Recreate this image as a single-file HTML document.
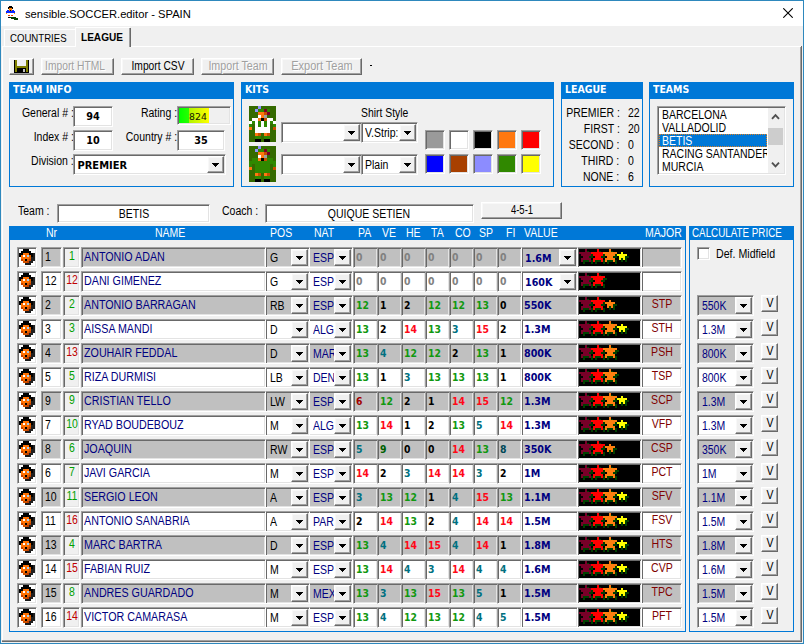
<!DOCTYPE html>
<html lang="en"><head><meta charset="utf-8"><title>sensible.SOCCER.editor - SPAIN</title><style>
html,body{margin:0;padding:0;background:#f0f0f0;}
#w{position:relative;width:804px;height:644px;overflow:hidden;background:#f0f0f0;}
#w div{position:absolute;box-sizing:border-box;}
.t{position:absolute;white-space:nowrap;display:inline-block;}
#w .sk{border:1px solid;border-color:#a0a0a0 #fff #fff #a0a0a0;box-shadow:inset 1px 1px 0 #696969,inset -1px -1px 0 #e3e3e3;padding:2px;}
#w .sk>*{ }
#w .rs{background:#f0f0f0;border:1px solid;border-color:#fff #696969 #696969 #fff;box-shadow:inset -1px -1px 0 #a0a0a0,inset 1px 1px 0 #f8f8f8;}
</style></head><body><div id="w">
<div class="" style="left:0px;top:0px;width:804px;height:644px;background:#f0f0f0;"></div>
<div class="" style="left:0px;top:0px;width:804px;height:26px;background:#fff;"></div>
<div class="" style="left:0px;top:0px;width:804px;height:644px;border:1px solid #2e88bd;box-sizing:border-box;"></div>
<svg style="position:absolute;left:0;top:0" width="22" height="22" viewBox="0 0 22 22" shape-rendering="crispEdges">
<rect x="9" y="6" width="3" height="1" fill="#000"/><rect x="8" y="7" width="5" height="2" fill="#000"/>
<rect x="9" y="8" width="3" height="3" fill="#ff8000"/>
<rect x="7" y="10" width="2" height="3" fill="#0a28ff"/><rect x="12" y="10" width="2" height="3" fill="#0a28ff"/><rect x="9" y="11" width="3" height="2" fill="#0a28ff"/><rect x="10" y="10" width="1" height="1" fill="#000"/>
<rect x="6" y="11" width="1" height="2" fill="#0a28ff"/><rect x="14" y="11" width="1" height="2" fill="#0a28ff"/>
<rect x="6" y="13" width="1" height="1" fill="#ff9000"/><rect x="14" y="13" width="1" height="1" fill="#ff9000"/>
<rect x="8" y="15" width="2" height="1" fill="#e84000"/><rect x="11" y="15" width="2" height="1" fill="#e84000"/>
<rect x="8" y="17" width="3" height="1" fill="#000"/><rect x="10" y="17" width="6" height="1" fill="#004000"/><rect x="11" y="18" width="7" height="1" fill="#004000"/><rect x="14" y="19" width="4" height="1" fill="#004000"/>
</svg>
<span class="t" style="left:25px;transform-origin:0 0;transform:scaleX(0.965);top:7.68px;font:normal 11.6px/11.6px 'Liberation Sans',sans-serif;color:#000;">sensible.SOCCER.editor - SPAIN</span>
<svg style="position:absolute;left:783px;top:8px" width="10" height="10" viewBox="0 0 10 10"><path d="M0.3 0.3L9.7 9.7M9.7 0.3L0.3 9.7" stroke="#000" stroke-width="1.1" fill="none"/></svg>
<div class="" style="left:2px;top:46px;width:800px;height:1px;background:#fff;"></div>
<div class="" style="left:2px;top:46px;width:1px;height:595px;background:#fff;"></div>
<div class="" style="left:800px;top:47px;width:1px;height:595px;background:#a0a0a0;"></div>
<div class="" style="left:801px;top:46px;width:1px;height:596px;background:#696969;"></div>
<div class="" style="left:2px;top:640px;width:799px;height:1px;background:#a0a0a0;"></div>
<div class="" style="left:2px;top:641px;width:800px;height:1px;background:#696969;"></div>
<div class="" style="left:4px;top:29px;width:72px;height:17px;border:1px solid #fff;border-bottom:none;border-right:none;box-sizing:border-box;"></div>
<span class="t" style="left:10px;transform-origin:0 0;transform:scaleX(0.835);top:32.67px;font:normal 11.5px/11.5px 'Liberation Sans',sans-serif;color:#000;">COUNTRIES</span>
<div class="" style="left:75px;top:27px;width:56px;height:20px;background:#f0f0f0;"></div>
<div class="" style="left:75px;top:27px;width:1px;height:20px;background:#fff;"></div>
<div class="" style="left:75px;top:27px;width:55px;height:1px;background:#fff;"></div>
<div class="" style="left:129px;top:28px;width:1px;height:19px;background:#a0a0a0;"></div>
<div class="" style="left:130px;top:28px;width:1px;height:19px;background:#696969;"></div>
<span class="t" style="left:81px;transform-origin:0 0;transform:scaleX(0.875);top:31.87px;font:bold 11.5px/11.5px 'Liberation Sans',sans-serif;color:#000;">LEAGUE</span>
<div class="rs" style="left:9px;top:58px;width:25px;height:17px;"></div>
<svg style="position:absolute;left:14px;top:60px" width="15" height="13" viewBox="0 0 15 13" shape-rendering="crispEdges">
<rect x="0" y="0" width="15" height="13" fill="#000"/><rect x="1" y="0" width="2" height="12" fill="#808000"/><rect x="12" y="0" width="2" height="12" fill="#808000"/>
<rect x="3" y="0" width="9" height="6" fill="#f0f0f0"/><rect x="1" y="6" width="13" height="2" fill="#808000"/>
<rect x="3" y="8" width="9" height="5" fill="#000"/><rect x="9" y="9" width="2" height="3" fill="#c0c0c0"/></svg>
<div class="rs" style="left:41px;top:58px;width:73px;height:17px;"></div>
<span class="t" style="left:-123.7px;width:400px;text-align:center;transform-origin:50% 0;transform:scaleX(0.82);top:61.32px;font:normal 12.5px/12.5px 'Liberation Sans',sans-serif;color:#fff;">Import HTML</span>
<span class="t" style="left:-124.7px;width:400px;text-align:center;transform-origin:50% 0;transform:scaleX(0.82);top:60.32px;font:normal 12.5px/12.5px 'Liberation Sans',sans-serif;color:#a0a0a0;">Import HTML</span>
<div class="rs" style="left:121px;top:58px;width:73px;height:17px;"></div>
<span class="t" style="left:-42.5px;width:400px;text-align:center;transform-origin:50% 0;transform:scaleX(0.82);top:60.32px;font:normal 12.5px/12.5px 'Liberation Sans',sans-serif;color:#000;">Import CSV</span>
<div class="rs" style="left:201px;top:58px;width:73px;height:17px;"></div>
<span class="t" style="left:38.5px;width:400px;text-align:center;transform-origin:50% 0;transform:scaleX(0.855);top:61.32px;font:normal 12.5px/12.5px 'Liberation Sans',sans-serif;color:#fff;">Import Team</span>
<span class="t" style="left:37.5px;width:400px;text-align:center;transform-origin:50% 0;transform:scaleX(0.855);top:60.32px;font:normal 12.5px/12.5px 'Liberation Sans',sans-serif;color:#a0a0a0;">Import Team</span>
<div class="rs" style="left:281px;top:58px;width:81px;height:17px;"></div>
<span class="t" style="left:122.5px;width:400px;text-align:center;transform-origin:50% 0;transform:scaleX(0.88);top:61.32px;font:normal 12.5px/12.5px 'Liberation Sans',sans-serif;color:#fff;">Export Team</span>
<span class="t" style="left:121.5px;width:400px;text-align:center;transform-origin:50% 0;transform:scaleX(0.88);top:60.32px;font:normal 12.5px/12.5px 'Liberation Sans',sans-serif;color:#a0a0a0;">Export Team</span>
<div class="" style="left:370px;top:65px;width:2px;height:1px;background:#000;"></div>
<div class="" style="left:9px;top:82px;width:225px;height:105px;border:1px solid #0078d7;box-sizing:border-box;"></div>
<div class="" style="left:9px;top:82px;width:225px;height:17px;background:#0078d7;"></div>
<span class="t" style="left:12.6px;transform-origin:0 0;transform:scaleX(0.95);top:83.99px;font:bold 11px/11px 'DejaVu Sans Condensed','DejaVu Sans',sans-serif;color:#fff;">TEAM INFO</span>
<span class="t" style="right:730.5px;transform-origin:100% 0;transform:scaleX(0.84);top:107.32px;font:normal 12.5px/12.5px 'Liberation Sans',sans-serif;color:#000;">General # :</span>
<span class="t" style="right:730.5px;transform-origin:100% 0;transform:scaleX(0.84);top:131.32px;font:normal 12.5px/12.5px 'Liberation Sans',sans-serif;color:#000;">Index # :</span>
<span class="t" style="right:730.5px;transform-origin:100% 0;transform:scaleX(0.84);top:155.32px;font:normal 12.5px/12.5px 'Liberation Sans',sans-serif;color:#000;">Division :</span>
<div class="sk" style="left:73px;top:106px;width:40px;height:21px;background:#fff;"></div>
<span class="t" style="left:-107px;width:400px;text-align:center;transform-origin:50% 0;transform:scaleX(0.98);top:110.69px;font:bold 11px/11px 'DejaVu Sans Condensed','DejaVu Sans',sans-serif;color:#000;">94</span>
<div class="sk" style="left:73px;top:130px;width:40px;height:21px;background:#fff;"></div>
<span class="t" style="left:-107px;width:400px;text-align:center;transform-origin:50% 0;transform:scaleX(0.98);top:134.69px;font:bold 11px/11px 'DejaVu Sans Condensed','DejaVu Sans',sans-serif;color:#000;">10</span>
<div class="sk" style="left:73px;top:154px;width:153px;height:21px;background:#fff;"></div>
<div class="" style="left:207px;top:156px;width:17px;height:17px;background:#f0f0f0;"></div>
<div class="rs" style="left:207px;top:156px;width:17px;height:17px;"><svg width="7" height="4" style="position:absolute;left:4px;top:6px" viewBox="0 0 7 4" shape-rendering="crispEdges"><path d="M0 0h7v1h-1v1h-1v1h-1v1h-1v-1h-1v-1h-1v-1h-1z" fill="#000"/></svg></div>
<span class="t" style="left:77.5px;transform-origin:0 0;transform:scaleX(1.0);top:159.69px;font:bold 11px/11px 'DejaVu Sans Condensed','DejaVu Sans',sans-serif;color:#000;">PREMIER</span>
<span class="t" style="right:627px;transform-origin:100% 0;transform:scaleX(0.84);top:107.32px;font:normal 12.5px/12.5px 'Liberation Sans',sans-serif;color:#000;">Rating :</span>
<span class="t" style="right:627px;transform-origin:100% 0;transform:scaleX(0.84);top:131.32px;font:normal 12.5px/12.5px 'Liberation Sans',sans-serif;color:#000;">Country # :</span>
<div class="sk" style="left:177px;top:106px;width:54px;height:19px;background:#f0f0f0;"><div style="position:absolute;left:1px;top:1px;width:30px;height:15px;background:linear-gradient(90deg,#00ff00 0,#28ff00 10px,#b0f400 10px,#ffff00 30px)"></div></div>
<span class="t" style="left:-2px;width:400px;text-align:center;transform-origin:50% 0;transform:scaleX(0.98);top:111.96px;font:normal 9.5px/9.5px 'DejaVu Sans',sans-serif;color:#141400;">824</span>
<div class="sk" style="left:177px;top:130px;width:48px;height:21px;background:#fff;"></div>
<span class="t" style="left:1px;width:400px;text-align:center;transform-origin:50% 0;transform:scaleX(0.98);top:134.69px;font:bold 11px/11px 'DejaVu Sans Condensed','DejaVu Sans',sans-serif;color:#000;">35</span>
<div class="" style="left:241px;top:82px;width:313px;height:105px;border:1px solid #0078d7;box-sizing:border-box;"></div>
<div class="" style="left:241px;top:82px;width:313px;height:17px;background:#0078d7;"></div>
<span class="t" style="left:245px;transform-origin:0 0;transform:scaleX(0.95);top:83.99px;font:bold 11px/11px 'DejaVu Sans Condensed','DejaVu Sans',sans-serif;color:#fff;">KITS</span>
<svg style="position:absolute;left:249px;top:106px" width="27" height="36" viewBox="0 0 9 12" shape-rendering="crispEdges"><rect width="9" height="12" fill="#356a00"/><rect x="3" y="0" width="1" height="1" fill="#9090ff"/><rect x="2" y="1" width="1" height="1" fill="#9090ff"/><rect x="3" y="1" width="1" height="1" fill="#308800"/><rect x="4" y="1" width="1" height="1" fill="#308800"/><rect x="5" y="1" width="1" height="1" fill="#780028"/><rect x="6" y="1" width="1" height="1" fill="#308800"/><rect x="3" y="2" width="1" height="1" fill="#ff7810"/><rect x="4" y="2" width="1" height="1" fill="#ff7810"/><rect x="5" y="2" width="1" height="1" fill="#c85000"/><rect x="6" y="2" width="1" height="1" fill="#780028"/><rect x="3" y="3" width="1" height="1" fill="#fff"/><rect x="4" y="3" width="1" height="1" fill="#ff7810"/><rect x="5" y="3" width="1" height="1" fill="#a0a0a0"/><rect x="1" y="4" width="1" height="1" fill="#fff"/><rect x="2" y="4" width="1" height="1" fill="#fff"/><rect x="3" y="4" width="1" height="1" fill="#ff7810"/><rect x="4" y="4" width="1" height="1" fill="#000"/><rect x="5" y="4" width="1" height="1" fill="#c85000"/><rect x="6" y="4" width="1" height="1" fill="#fff"/><rect x="7" y="4" width="1" height="1" fill="#fff"/><rect x="0" y="5" width="1" height="1" fill="#fff"/><rect x="1" y="5" width="1" height="1" fill="#308800"/><rect x="2" y="5" width="1" height="1" fill="#fff"/><rect x="3" y="5" width="1" height="1" fill="#308800"/><rect x="4" y="5" width="1" height="1" fill="#fff"/><rect x="5" y="5" width="1" height="1" fill="#308800"/><rect x="6" y="5" width="1" height="1" fill="#fff"/><rect x="7" y="5" width="1" height="1" fill="#308800"/><rect x="8" y="5" width="1" height="1" fill="#fff"/><rect x="0" y="6" width="1" height="1" fill="#308800"/><rect x="2" y="6" width="1" height="1" fill="#fff"/><rect x="3" y="6" width="1" height="1" fill="#308800"/><rect x="4" y="6" width="1" height="1" fill="#fff"/><rect x="5" y="6" width="1" height="1" fill="#308800"/><rect x="6" y="6" width="1" height="1" fill="#fff"/><rect x="8" y="6" width="1" height="1" fill="#308800"/><rect x="0" y="7" width="1" height="1" fill="#ff7810"/><rect x="2" y="7" width="1" height="1" fill="#fff"/><rect x="3" y="7" width="1" height="1" fill="#fff"/><rect x="4" y="7" width="1" height="1" fill="#fff"/><rect x="5" y="7" width="1" height="1" fill="#fff"/><rect x="6" y="7" width="1" height="1" fill="#fff"/><rect x="8" y="7" width="1" height="1" fill="#c85000"/><rect x="2" y="8" width="1" height="1" fill="#fff"/><rect x="3" y="8" width="1" height="1" fill="#fff"/><rect x="4" y="8" width="1" height="1" fill="#fff"/><rect x="5" y="8" width="1" height="1" fill="#fff"/><rect x="6" y="8" width="1" height="1" fill="#fff"/><rect x="2" y="9" width="1" height="1" fill="#ff7810"/><rect x="3" y="9" width="1" height="1" fill="#c85000"/><rect x="5" y="9" width="1" height="1" fill="#ff7810"/><rect x="6" y="9" width="1" height="1" fill="#c85000"/><rect x="2" y="10" width="1" height="1" fill="#308800"/><rect x="3" y="10" width="1" height="1" fill="#308800"/><rect x="5" y="10" width="1" height="1" fill="#308800"/><rect x="6" y="10" width="1" height="1" fill="#308800"/><rect x="2" y="11" width="1" height="1" fill="#000"/><rect x="3" y="11" width="1" height="1" fill="#000"/><rect x="5" y="11" width="1" height="1" fill="#000"/><rect x="6" y="11" width="1" height="1" fill="#000"/></svg>
<svg style="position:absolute;left:249px;top:146px" width="27" height="36" viewBox="0 0 9 12" shape-rendering="crispEdges"><rect width="9" height="12" fill="#356a00"/><rect x="3" y="0" width="1" height="1" fill="#9090ff"/><rect x="2" y="1" width="1" height="1" fill="#9090ff"/><rect x="3" y="1" width="1" height="1" fill="#308800"/><rect x="4" y="1" width="1" height="1" fill="#308800"/><rect x="5" y="1" width="1" height="1" fill="#780028"/><rect x="6" y="1" width="1" height="1" fill="#308800"/><rect x="3" y="2" width="1" height="1" fill="#ff7810"/><rect x="4" y="2" width="1" height="1" fill="#ff7810"/><rect x="5" y="2" width="1" height="1" fill="#c85000"/><rect x="6" y="2" width="1" height="1" fill="#780028"/><rect x="3" y="3" width="1" height="1" fill="#fff"/><rect x="4" y="3" width="1" height="1" fill="#ff7810"/><rect x="5" y="3" width="1" height="1" fill="#a0a0a0"/><rect x="1" y="4" width="1" height="1" fill="#308800"/><rect x="2" y="4" width="1" height="1" fill="#308800"/><rect x="3" y="4" width="1" height="1" fill="#ff7810"/><rect x="4" y="4" width="1" height="1" fill="#000"/><rect x="5" y="4" width="1" height="1" fill="#c85000"/><rect x="6" y="4" width="1" height="1" fill="#308800"/><rect x="7" y="4" width="1" height="1" fill="#308800"/><rect x="0" y="5" width="1" height="1" fill="#308800"/><rect x="1" y="5" width="1" height="1" fill="#308800"/><rect x="2" y="5" width="1" height="1" fill="#308800"/><rect x="3" y="5" width="1" height="1" fill="#308800"/><rect x="4" y="5" width="1" height="1" fill="#308800"/><rect x="5" y="5" width="1" height="1" fill="#308800"/><rect x="6" y="5" width="1" height="1" fill="#308800"/><rect x="7" y="5" width="1" height="1" fill="#308800"/><rect x="8" y="5" width="1" height="1" fill="#308800"/><rect x="0" y="6" width="1" height="1" fill="#308800"/><rect x="2" y="6" width="1" height="1" fill="#308800"/><rect x="3" y="6" width="1" height="1" fill="#308800"/><rect x="4" y="6" width="1" height="1" fill="#308800"/><rect x="5" y="6" width="1" height="1" fill="#308800"/><rect x="6" y="6" width="1" height="1" fill="#308800"/><rect x="8" y="6" width="1" height="1" fill="#308800"/><rect x="0" y="7" width="1" height="1" fill="#ff7810"/><rect x="2" y="7" width="1" height="1" fill="#308800"/><rect x="3" y="7" width="1" height="1" fill="#308800"/><rect x="4" y="7" width="1" height="1" fill="#308800"/><rect x="5" y="7" width="1" height="1" fill="#308800"/><rect x="6" y="7" width="1" height="1" fill="#308800"/><rect x="8" y="7" width="1" height="1" fill="#c85000"/><rect x="2" y="8" width="1" height="1" fill="#308800"/><rect x="3" y="8" width="1" height="1" fill="#308800"/><rect x="4" y="8" width="1" height="1" fill="#308800"/><rect x="5" y="8" width="1" height="1" fill="#308800"/><rect x="6" y="8" width="1" height="1" fill="#308800"/><rect x="2" y="9" width="1" height="1" fill="#ff7810"/><rect x="3" y="9" width="1" height="1" fill="#c85000"/><rect x="5" y="9" width="1" height="1" fill="#ff7810"/><rect x="6" y="9" width="1" height="1" fill="#c85000"/><rect x="2" y="10" width="1" height="1" fill="#308800"/><rect x="3" y="10" width="1" height="1" fill="#308800"/><rect x="5" y="10" width="1" height="1" fill="#308800"/><rect x="6" y="10" width="1" height="1" fill="#308800"/><rect x="2" y="11" width="1" height="1" fill="#000"/><rect x="3" y="11" width="1" height="1" fill="#000"/><rect x="5" y="11" width="1" height="1" fill="#000"/><rect x="6" y="11" width="1" height="1" fill="#000"/></svg>
<span class="t" style="left:361px;transform-origin:0 0;transform:scaleX(0.83);top:107.32px;font:normal 12.5px/12.5px 'Liberation Sans',sans-serif;color:#000;">Shirt Style</span>
<div class="sk" style="left:281px;top:122px;width:81px;height:21px;background:#fff;"></div>
<div class="" style="left:343px;top:124px;width:17px;height:17px;background:#f0f0f0;"></div>
<div class="rs" style="left:343px;top:124px;width:17px;height:17px;"><svg width="7" height="4" style="position:absolute;left:4px;top:6px" viewBox="0 0 7 4" shape-rendering="crispEdges"><path d="M0 0h7v1h-1v1h-1v1h-1v1h-1v-1h-1v-1h-1v-1h-1z" fill="#000"/></svg></div>
<div class="sk" style="left:361px;top:122px;width:57px;height:21px;background:#fff;"></div>
<div class="" style="left:399px;top:124px;width:17px;height:17px;background:#f0f0f0;"></div>
<div class="rs" style="left:399px;top:124px;width:17px;height:17px;"><svg width="7" height="4" style="position:absolute;left:4px;top:6px" viewBox="0 0 7 4" shape-rendering="crispEdges"><path d="M0 0h7v1h-1v1h-1v1h-1v1h-1v-1h-1v-1h-1v-1h-1z" fill="#000"/></svg></div>
<span class="t" style="left:365px;transform-origin:0 0;transform:scaleX(0.84);top:126.82px;font:normal 12.5px/12.5px 'Liberation Sans',sans-serif;color:#000;width:39px;overflow:hidden;">V.Strip:</span>
<div class="sk" style="left:281px;top:154px;width:81px;height:21px;background:#fff;"></div>
<div class="" style="left:343px;top:156px;width:17px;height:17px;background:#f0f0f0;"></div>
<div class="rs" style="left:343px;top:156px;width:17px;height:17px;"><svg width="7" height="4" style="position:absolute;left:4px;top:6px" viewBox="0 0 7 4" shape-rendering="crispEdges"><path d="M0 0h7v1h-1v1h-1v1h-1v1h-1v-1h-1v-1h-1v-1h-1z" fill="#000"/></svg></div>
<div class="sk" style="left:361px;top:154px;width:57px;height:21px;background:#fff;"></div>
<div class="" style="left:399px;top:156px;width:17px;height:17px;background:#f0f0f0;"></div>
<div class="rs" style="left:399px;top:156px;width:17px;height:17px;"><svg width="7" height="4" style="position:absolute;left:4px;top:6px" viewBox="0 0 7 4" shape-rendering="crispEdges"><path d="M0 0h7v1h-1v1h-1v1h-1v1h-1v-1h-1v-1h-1v-1h-1z" fill="#000"/></svg></div>
<span class="t" style="left:365px;transform-origin:0 0;transform:scaleX(0.84);top:158.82px;font:normal 12.5px/12.5px 'Liberation Sans',sans-serif;color:#000;">Plain</span>
<div class="sk" style="left:425px;top:130px;width:20px;height:20px;background:#9a9a9a;"></div>
<div class="sk" style="left:449px;top:130px;width:20px;height:20px;background:#fff;"></div>
<div class="sk" style="left:473px;top:130px;width:20px;height:20px;background:#000;"></div>
<div class="sk" style="left:497px;top:130px;width:20px;height:20px;background:#ff7810;"></div>
<div class="sk" style="left:521px;top:130px;width:20px;height:20px;background:#ff0000;"></div>
<div class="sk" style="left:425px;top:154px;width:20px;height:20px;background:#0000ff;"></div>
<div class="sk" style="left:449px;top:154px;width:20px;height:20px;background:#a84000;"></div>
<div class="sk" style="left:473px;top:154px;width:20px;height:20px;background:#8c8cff;"></div>
<div class="sk" style="left:497px;top:154px;width:20px;height:20px;background:#308800;"></div>
<div class="sk" style="left:521px;top:154px;width:20px;height:20px;background:#ffff00;"></div>
<div class="" style="left:561px;top:82px;width:82px;height:105px;border:1px solid #0078d7;box-sizing:border-box;"></div>
<div class="" style="left:561px;top:82px;width:82px;height:17px;background:#0078d7;"></div>
<span class="t" style="left:565px;transform-origin:0 0;transform:scaleX(0.95);top:83.99px;font:bold 11px/11px 'DejaVu Sans Condensed','DejaVu Sans',sans-serif;color:#fff;">LEAGUE</span>
<span class="t" style="right:184.5px;transform-origin:100% 0;transform:scaleX(0.84);top:107.32px;font:normal 12.5px/12.5px 'Liberation Sans',sans-serif;color:#000;">PREMIER :</span>
<span class="t" style="left:627.5px;transform-origin:0 0;transform:scaleX(0.84);top:107.32px;font:normal 12.5px/12.5px 'Liberation Sans',sans-serif;color:#000;">22</span>
<span class="t" style="right:184.5px;transform-origin:100% 0;transform:scaleX(0.84);top:123.32px;font:normal 12.5px/12.5px 'Liberation Sans',sans-serif;color:#000;">FIRST :</span>
<span class="t" style="left:627.5px;transform-origin:0 0;transform:scaleX(0.84);top:123.32px;font:normal 12.5px/12.5px 'Liberation Sans',sans-serif;color:#000;">20</span>
<span class="t" style="right:184.5px;transform-origin:100% 0;transform:scaleX(0.84);top:139.32px;font:normal 12.5px/12.5px 'Liberation Sans',sans-serif;color:#000;">SECOND :</span>
<span class="t" style="left:627.5px;transform-origin:0 0;transform:scaleX(0.84);top:139.32px;font:normal 12.5px/12.5px 'Liberation Sans',sans-serif;color:#000;">0</span>
<span class="t" style="right:184.5px;transform-origin:100% 0;transform:scaleX(0.84);top:155.32px;font:normal 12.5px/12.5px 'Liberation Sans',sans-serif;color:#000;">THIRD :</span>
<span class="t" style="left:627.5px;transform-origin:0 0;transform:scaleX(0.84);top:155.32px;font:normal 12.5px/12.5px 'Liberation Sans',sans-serif;color:#000;">0</span>
<span class="t" style="right:184.5px;transform-origin:100% 0;transform:scaleX(0.84);top:171.32px;font:normal 12.5px/12.5px 'Liberation Sans',sans-serif;color:#000;">NONE :</span>
<span class="t" style="left:627.5px;transform-origin:0 0;transform:scaleX(0.84);top:171.32px;font:normal 12.5px/12.5px 'Liberation Sans',sans-serif;color:#000;">6</span>
<div class="" style="left:649px;top:82px;width:145px;height:105px;border:1px solid #0078d7;box-sizing:border-box;"></div>
<div class="" style="left:649px;top:82px;width:145px;height:17px;background:#0078d7;"></div>
<span class="t" style="left:653px;transform-origin:0 0;transform:scaleX(0.95);top:83.99px;font:bold 11px/11px 'DejaVu Sans Condensed','DejaVu Sans',sans-serif;color:#fff;">TEAMS</span>
<div class="sk" style="left:657px;top:106px;width:129px;height:69px;background:#fff;"></div>
<div class="" style="left:768px;top:108px;width:16px;height:65px;background:#f0f0f0;"></div>
<div class="" style="left:768px;top:128px;width:15px;height:17px;background:#cdcdcd;"></div>
<svg style="position:absolute;left:771px;top:113px" width="9" height="7" viewBox="0 0 9 7"><path d="M1 5.8L4.5 2.2 8 5.8" stroke="#505050" stroke-width="1.9" fill="none"/></svg>
<svg style="position:absolute;left:771px;top:161px" width="9" height="7" viewBox="0 0 9 7"><path d="M1 1.7L4.5 5.3 8 1.7" stroke="#505050" stroke-width="1.9" fill="none"/></svg>
<div class="" style="left:659px;top:134px;width:108px;height:13px;background:#0078d7;outline:1px dotted #e08020;outline-offset:-1px;"></div>
<span class="t" style="left:661.5px;transform-origin:0 0;transform:scaleX(0.84);top:108.82px;font:normal 12.5px/12.5px 'Liberation Sans',sans-serif;color:#000;">BARCELONA</span>
<span class="t" style="left:661.5px;transform-origin:0 0;transform:scaleX(0.84);top:121.82px;font:normal 12.5px/12.5px 'Liberation Sans',sans-serif;color:#000;">VALLADOLID</span>
<span class="t" style="left:661.5px;transform-origin:0 0;transform:scaleX(0.84);top:134.82px;font:normal 12.5px/12.5px 'Liberation Sans',sans-serif;color:#fff;">BETIS</span>
<span class="t" style="left:661.5px;transform-origin:0 0;transform:scaleX(0.84);top:147.82px;font:normal 12.5px/12.5px 'Liberation Sans',sans-serif;color:#000;width:125px;overflow:hidden;">RACING SANTANDER</span>
<span class="t" style="left:661.5px;transform-origin:0 0;transform:scaleX(0.84);top:160.82px;font:normal 12.5px/12.5px 'Liberation Sans',sans-serif;color:#000;">MURCIA</span>
<span class="t" style="left:18px;transform-origin:0 0;transform:scaleX(0.84);top:205.32px;font:normal 12.5px/12.5px 'Liberation Sans',sans-serif;color:#000;">Team :</span>
<div class="sk" style="left:57px;top:204px;width:153px;height:19px;background:#fff;"></div>
<span class="t" style="left:-66.30000000000001px;width:400px;text-align:center;transform-origin:50% 0;transform:scaleX(0.84);top:208.32px;font:normal 12.5px/12.5px 'Liberation Sans',sans-serif;color:#000;">BETIS</span>
<span class="t" style="left:221.5px;transform-origin:0 0;transform:scaleX(0.84);top:205.32px;font:normal 12.5px/12.5px 'Liberation Sans',sans-serif;color:#000;">Coach :</span>
<div class="sk" style="left:265px;top:204px;width:209px;height:19px;background:#fff;"></div>
<span class="t" style="left:169.2px;width:400px;text-align:center;transform-origin:50% 0;transform:scaleX(0.84);top:208.32px;font:normal 12.5px/12.5px 'Liberation Sans',sans-serif;color:#000;">QUIQUE SETIEN</span>
<div class="rs" style="left:481px;top:202px;width:81px;height:17px;"></div>
<span class="t" style="left:321.5px;width:400px;text-align:center;transform-origin:50% 0;transform:scaleX(0.76);top:204.32px;font:normal 12.5px/12.5px 'Liberation Sans',sans-serif;color:#000;">4-5-1</span>
<div class="" style="left:9px;top:226px;width:677px;height:406px;border:1px solid #0078d7;box-sizing:border-box;"></div>
<div class="" style="left:9px;top:226px;width:677px;height:14px;background:#0078d7;"></div>
<span class="t" style="left:45.5px;transform-origin:0 0;transform:scaleX(0.84);top:227.32px;font:normal 12.5px/12.5px 'Liberation Sans',sans-serif;color:#fff;">Nr</span>
<span class="t" style="left:154.7px;transform-origin:0 0;transform:scaleX(0.84);top:227.32px;font:normal 12.5px/12.5px 'Liberation Sans',sans-serif;color:#fff;">NAME</span>
<span class="t" style="left:270.3px;transform-origin:0 0;transform:scaleX(0.84);top:227.32px;font:normal 12.5px/12.5px 'Liberation Sans',sans-serif;color:#fff;">POS</span>
<span class="t" style="left:313.7px;transform-origin:0 0;transform:scaleX(0.84);top:227.32px;font:normal 12.5px/12.5px 'Liberation Sans',sans-serif;color:#fff;">NAT</span>
<span class="t" style="left:358.4px;transform-origin:0 0;transform:scaleX(0.84);top:227.32px;font:normal 12.5px/12.5px 'Liberation Sans',sans-serif;color:#fff;">PA</span>
<span class="t" style="left:381.5px;transform-origin:0 0;transform:scaleX(0.84);top:227.32px;font:normal 12.5px/12.5px 'Liberation Sans',sans-serif;color:#fff;">VE</span>
<span class="t" style="left:406px;transform-origin:0 0;transform:scaleX(0.84);top:227.32px;font:normal 12.5px/12.5px 'Liberation Sans',sans-serif;color:#fff;">HE</span>
<span class="t" style="left:431px;transform-origin:0 0;transform:scaleX(0.84);top:227.32px;font:normal 12.5px/12.5px 'Liberation Sans',sans-serif;color:#fff;">TA</span>
<span class="t" style="left:455px;transform-origin:0 0;transform:scaleX(0.84);top:227.32px;font:normal 12.5px/12.5px 'Liberation Sans',sans-serif;color:#fff;">CO</span>
<span class="t" style="left:478.5px;transform-origin:0 0;transform:scaleX(0.84);top:227.32px;font:normal 12.5px/12.5px 'Liberation Sans',sans-serif;color:#fff;">SP</span>
<span class="t" style="left:505.5px;transform-origin:0 0;transform:scaleX(0.84);top:227.32px;font:normal 12.5px/12.5px 'Liberation Sans',sans-serif;color:#fff;">FI</span>
<span class="t" style="left:524px;transform-origin:0 0;transform:scaleX(0.84);top:227.32px;font:normal 12.5px/12.5px 'Liberation Sans',sans-serif;color:#fff;">VALUE</span>
<span class="t" style="left:644.6px;transform-origin:0 0;transform:scaleX(0.84);top:227.32px;font:normal 12.5px/12.5px 'Liberation Sans',sans-serif;color:#fff;">MAJOR</span>
<div class="" style="left:689px;top:226px;width:105px;height:406px;border:1px solid #0078d7;box-sizing:border-box;"></div>
<div class="" style="left:689px;top:226px;width:105px;height:14px;background:#0078d7;"></div>
<span class="t" style="left:691.7px;transform-origin:0 0;transform:scaleX(0.785);top:227.32px;font:normal 12.5px/12.5px 'Liberation Sans',sans-serif;color:#fff;">CALCULATE PRICE</span>
<div class="sk" style="left:17px;top:247px;width:20px;height:21px;background:#fff;"><svg style="position:absolute;left:1px;top:1px" width="16" height="16" viewBox="0 0 8 8" shape-rendering="crispEdges">
<rect x="2" y="0" width="3" height="1" fill="#000"/><rect x="1" y="1" width="5" height="1" fill="#000"/>
<rect x="0" y="2" width="2" height="1" fill="#000"/><rect x="2" y="2" width="3" height="1" fill="#ff7000"/><rect x="5" y="2" width="2" height="1" fill="#000"/><rect x="7" y="2" width="1" height="3" fill="#202020"/>
<rect x="0" y="3" width="1" height="1" fill="#000"/><rect x="1" y="3" width="5" height="1" fill="#ff7000"/><rect x="2" y="3" width="1" height="1" fill="#fff"/><rect x="4" y="3" width="1" height="1" fill="#a8d0f0"/><rect x="5" y="3" width="1" height="1" fill="#e06000"/><rect x="6" y="3" width="1" height="1" fill="#000"/>
<rect x="1" y="4" width="4" height="1" fill="#ff7000"/><rect x="5" y="4" width="1" height="1" fill="#e06000"/><rect x="6" y="4" width="1" height="2" fill="#202020"/>
<rect x="1" y="5" width="1" height="1" fill="#c04000"/><rect x="2" y="5" width="1" height="1" fill="#ff7000"/><rect x="3" y="5" width="1" height="1" fill="#000"/><rect x="4" y="5" width="1" height="1" fill="#e06000"/><rect x="5" y="5" width="1" height="1" fill="#c04000"/><rect x="7" y="5" width="1" height="1" fill="#202020"/>
<rect x="2" y="6" width="2" height="1" fill="#d05000"/><rect x="4" y="6" width="1" height="1" fill="#c04000"/><rect x="5" y="6" width="2" height="1" fill="#202020"/>
<rect x="3" y="7" width="3" height="1" fill="#1a1a1a"/>
</svg></div>
<div class="sk" style="left:41px;top:247px;width:21px;height:21px;background:#c0c0c0;"></div>
<span class="t" style="left:44.5px;transform-origin:0 0;transform:scaleX(0.84);top:251.32px;font:normal 12.5px/12.5px 'Liberation Sans',sans-serif;color:#000;">1</span>
<div class="sk" style="left:63px;top:247px;width:17px;height:21px;background:#f0f0f0;"></div>
<span class="t" style="left:-128.5px;width:400px;text-align:center;transform-origin:50% 0;transform:scaleX(0.84);top:250.32px;font:normal 12.5px/12.5px 'Liberation Sans',sans-serif;color:#00a000;">1</span>
<div class="sk" style="left:641px;top:247px;width:41px;height:21px;background:#c0c0c0;"></div>
<div class="sk" style="left:577px;top:247px;width:65px;height:21px;background:#000;"><svg style="position:absolute;left:1px;top:1px" width="61" height="17" viewBox="0 0 61 17" shape-rendering="crispEdges"><rect x="8" y="2" width="2" height="3" fill="#004000"/><rect x="2" y="5" width="14" height="2" fill="#004000"/><rect x="4" y="7" width="10" height="2" fill="#004000"/><rect x="6" y="9" width="6" height="2" fill="#004000"/><rect x="4" y="11" width="10" height="2" fill="#004000"/><rect x="4" y="13" width="2" height="2" fill="#004000"/><rect x="12" y="13" width="2" height="2" fill="#004000"/><rect x="6" y="0" width="2" height="3" fill="#780028"/><rect x="0" y="3" width="14" height="2" fill="#780028"/><rect x="2" y="5" width="10" height="2" fill="#780028"/><rect x="4" y="7" width="6" height="2" fill="#780028"/><rect x="2" y="9" width="10" height="2" fill="#780028"/><rect x="2" y="11" width="2" height="2" fill="#780028"/><rect x="10" y="11" width="2" height="2" fill="#780028"/><rect x="20" y="2" width="2" height="3" fill="#004000"/><rect x="14" y="5" width="14" height="2" fill="#004000"/><rect x="16" y="7" width="10" height="2" fill="#004000"/><rect x="18" y="9" width="6" height="2" fill="#004000"/><rect x="16" y="11" width="10" height="2" fill="#004000"/><rect x="16" y="13" width="2" height="2" fill="#004000"/><rect x="24" y="13" width="2" height="2" fill="#004000"/><rect x="18" y="0" width="2" height="3" fill="#ff0000"/><rect x="12" y="3" width="14" height="2" fill="#ff0000"/><rect x="14" y="5" width="10" height="2" fill="#ff0000"/><rect x="16" y="7" width="6" height="2" fill="#ff0000"/><rect x="14" y="9" width="10" height="2" fill="#ff0000"/><rect x="14" y="11" width="2" height="2" fill="#ff0000"/><rect x="22" y="11" width="2" height="2" fill="#ff0000"/><rect x="32" y="2" width="2" height="3" fill="#004000"/><rect x="26" y="5" width="14" height="2" fill="#004000"/><rect x="28" y="7" width="10" height="2" fill="#004000"/><rect x="30" y="9" width="6" height="2" fill="#004000"/><rect x="28" y="11" width="10" height="2" fill="#004000"/><rect x="28" y="13" width="2" height="2" fill="#004000"/><rect x="36" y="13" width="2" height="2" fill="#004000"/><rect x="30" y="0" width="2" height="3" fill="#ff7f10"/><rect x="24" y="3" width="14" height="2" fill="#ff7f10"/><rect x="26" y="5" width="10" height="2" fill="#ff7f10"/><rect x="28" y="7" width="6" height="2" fill="#ff7f10"/><rect x="26" y="9" width="10" height="2" fill="#ff7f10"/><rect x="26" y="11" width="2" height="2" fill="#ff7f10"/><rect x="34" y="11" width="2" height="2" fill="#ff7f10"/><rect x="44" y="5" width="2" height="2" fill="#004000"/><rect x="40" y="7" width="10" height="2" fill="#004000"/><rect x="42" y="9" width="6" height="2" fill="#004000"/><rect x="42" y="11" width="2" height="2" fill="#004000"/><rect x="46" y="11" width="2" height="2" fill="#004000"/><rect x="42" y="3" width="2" height="2" fill="#ffff00"/><rect x="38" y="5" width="10" height="2" fill="#ffff00"/><rect x="40" y="7" width="6" height="2" fill="#ffff00"/><rect x="40" y="9" width="2" height="2" fill="#ffff00"/><rect x="44" y="9" width="2" height="2" fill="#ffff00"/></svg></div>
<div class="sk" style="left:521px;top:247px;width:57px;height:21px;background:#c0c0c0;"></div>
<div class="" style="left:559px;top:249px;width:17px;height:17px;background:#f0f0f0;"></div>
<div class="rs" style="left:559px;top:249px;width:17px;height:17px;"><svg width="7" height="4" style="position:absolute;left:4px;top:6px" viewBox="0 0 7 4" shape-rendering="crispEdges"><path d="M0 0h7v1h-1v1h-1v1h-1v1h-1v-1h-1v-1h-1v-1h-1z" fill="#000"/></svg></div>
<span class="t" style="left:525px;transform-origin:0 0;transform:scaleX(0.97);top:252.69px;font:bold 11px/11px 'DejaVu Sans Condensed','DejaVu Sans',sans-serif;color:#000080;">1.6M</span>
<div class="sk" style="left:353px;top:247px;width:25px;height:21px;background:#c0c0c0;"></div>
<span class="t" style="left:356.3px;transform-origin:0 0;transform:scaleX(0.94);top:251.69px;font:bold 11px/11px 'DejaVu Sans Condensed','DejaVu Sans',sans-serif;color:#808080;">0</span>
<div class="sk" style="left:377px;top:247px;width:25px;height:21px;background:#c0c0c0;"></div>
<span class="t" style="left:380.3px;transform-origin:0 0;transform:scaleX(0.94);top:251.69px;font:bold 11px/11px 'DejaVu Sans Condensed','DejaVu Sans',sans-serif;color:#808080;">0</span>
<div class="sk" style="left:401px;top:247px;width:25px;height:21px;background:#c0c0c0;"></div>
<span class="t" style="left:404.3px;transform-origin:0 0;transform:scaleX(0.94);top:251.69px;font:bold 11px/11px 'DejaVu Sans Condensed','DejaVu Sans',sans-serif;color:#808080;">0</span>
<div class="sk" style="left:425px;top:247px;width:25px;height:21px;background:#c0c0c0;"></div>
<span class="t" style="left:428.3px;transform-origin:0 0;transform:scaleX(0.94);top:251.69px;font:bold 11px/11px 'DejaVu Sans Condensed','DejaVu Sans',sans-serif;color:#808080;">0</span>
<div class="sk" style="left:449px;top:247px;width:25px;height:21px;background:#c0c0c0;"></div>
<span class="t" style="left:452.3px;transform-origin:0 0;transform:scaleX(0.94);top:251.69px;font:bold 11px/11px 'DejaVu Sans Condensed','DejaVu Sans',sans-serif;color:#808080;">0</span>
<div class="sk" style="left:473px;top:247px;width:25px;height:21px;background:#c0c0c0;"></div>
<span class="t" style="left:476.3px;transform-origin:0 0;transform:scaleX(0.94);top:251.69px;font:bold 11px/11px 'DejaVu Sans Condensed','DejaVu Sans',sans-serif;color:#808080;">0</span>
<div class="sk" style="left:497px;top:247px;width:25px;height:21px;background:#c0c0c0;"></div>
<span class="t" style="left:500.3px;transform-origin:0 0;transform:scaleX(0.94);top:251.69px;font:bold 11px/11px 'DejaVu Sans Condensed','DejaVu Sans',sans-serif;color:#808080;">0</span>
<div class="sk" style="left:308px;top:247px;width:45px;height:21px;background:#c0c0c0;"></div>
<div class="" style="left:334px;top:249px;width:17px;height:17px;background:#f0f0f0;"></div>
<div class="rs" style="left:334px;top:249px;width:17px;height:17px;"><svg width="7" height="4" style="position:absolute;left:4px;top:6px" viewBox="0 0 7 4" shape-rendering="crispEdges"><path d="M0 0h7v1h-1v1h-1v1h-1v1h-1v-1h-1v-1h-1v-1h-1z" fill="#000"/></svg></div>
<span class="t" style="left:312.8px;transform-origin:0 0;transform:scaleX(0.84);top:252.32px;font:normal 12.5px/12.5px 'Liberation Sans',sans-serif;color:#000080;width:25px;overflow:hidden;">ESP</span>
<div class="sk" style="left:265px;top:247px;width:45px;height:21px;background:#c0c0c0;"></div>
<div class="" style="left:291px;top:249px;width:17px;height:17px;background:#f0f0f0;"></div>
<div class="rs" style="left:291px;top:249px;width:17px;height:17px;"><svg width="7" height="4" style="position:absolute;left:4px;top:6px" viewBox="0 0 7 4" shape-rendering="crispEdges"><path d="M0 0h7v1h-1v1h-1v1h-1v1h-1v-1h-1v-1h-1v-1h-1z" fill="#000"/></svg></div>
<span class="t" style="left:270px;transform-origin:0 0;transform:scaleX(0.84);top:252.32px;font:normal 12.5px/12.5px 'Liberation Sans',sans-serif;color:#000;">G</span>
<div class="sk" style="left:81px;top:247px;width:185px;height:21px;background:#c0c0c0;"></div>
<span class="t" style="left:84px;transform-origin:0 0;transform:scaleX(0.857);top:251.32px;font:normal 12.5px/12.5px 'Liberation Sans',sans-serif;color:#000080;">ANTONIO ADAN</span>
<div class="sk" style="left:17px;top:271px;width:20px;height:21px;background:#fff;"><svg style="position:absolute;left:1px;top:1px" width="16" height="16" viewBox="0 0 8 8" shape-rendering="crispEdges">
<rect x="2" y="0" width="3" height="1" fill="#000"/><rect x="1" y="1" width="5" height="1" fill="#000"/>
<rect x="0" y="2" width="2" height="1" fill="#000"/><rect x="2" y="2" width="3" height="1" fill="#ff7000"/><rect x="5" y="2" width="2" height="1" fill="#000"/><rect x="7" y="2" width="1" height="3" fill="#202020"/>
<rect x="0" y="3" width="1" height="1" fill="#000"/><rect x="1" y="3" width="5" height="1" fill="#ff7000"/><rect x="2" y="3" width="1" height="1" fill="#fff"/><rect x="4" y="3" width="1" height="1" fill="#a8d0f0"/><rect x="5" y="3" width="1" height="1" fill="#e06000"/><rect x="6" y="3" width="1" height="1" fill="#000"/>
<rect x="1" y="4" width="4" height="1" fill="#ff7000"/><rect x="5" y="4" width="1" height="1" fill="#e06000"/><rect x="6" y="4" width="1" height="2" fill="#202020"/>
<rect x="1" y="5" width="1" height="1" fill="#c04000"/><rect x="2" y="5" width="1" height="1" fill="#ff7000"/><rect x="3" y="5" width="1" height="1" fill="#000"/><rect x="4" y="5" width="1" height="1" fill="#e06000"/><rect x="5" y="5" width="1" height="1" fill="#c04000"/><rect x="7" y="5" width="1" height="1" fill="#202020"/>
<rect x="2" y="6" width="2" height="1" fill="#d05000"/><rect x="4" y="6" width="1" height="1" fill="#c04000"/><rect x="5" y="6" width="2" height="1" fill="#202020"/>
<rect x="3" y="7" width="3" height="1" fill="#1a1a1a"/>
</svg></div>
<div class="sk" style="left:41px;top:271px;width:21px;height:21px;background:#fff;"></div>
<span class="t" style="left:44.5px;transform-origin:0 0;transform:scaleX(0.84);top:275.32px;font:normal 12.5px/12.5px 'Liberation Sans',sans-serif;color:#000;">12</span>
<div class="sk" style="left:63px;top:271px;width:17px;height:21px;background:#f0f0f0;"></div>
<span class="t" style="left:-128.5px;width:400px;text-align:center;transform-origin:50% 0;transform:scaleX(0.84);top:274.32px;font:normal 12.5px/12.5px 'Liberation Sans',sans-serif;color:#c00000;">12</span>
<div class="sk" style="left:641px;top:271px;width:41px;height:21px;background:#fff;"></div>
<div class="sk" style="left:577px;top:271px;width:65px;height:21px;background:#000;"><svg style="position:absolute;left:1px;top:1px" width="61" height="17" viewBox="0 0 61 17" shape-rendering="crispEdges"><rect x="8" y="2" width="2" height="3" fill="#004000"/><rect x="2" y="5" width="14" height="2" fill="#004000"/><rect x="4" y="7" width="10" height="2" fill="#004000"/><rect x="6" y="9" width="6" height="2" fill="#004000"/><rect x="4" y="11" width="10" height="2" fill="#004000"/><rect x="4" y="13" width="2" height="2" fill="#004000"/><rect x="12" y="13" width="2" height="2" fill="#004000"/><rect x="6" y="0" width="2" height="3" fill="#780028"/><rect x="0" y="3" width="14" height="2" fill="#780028"/><rect x="2" y="5" width="10" height="2" fill="#780028"/><rect x="4" y="7" width="6" height="2" fill="#780028"/><rect x="2" y="9" width="10" height="2" fill="#780028"/><rect x="2" y="11" width="2" height="2" fill="#780028"/><rect x="10" y="11" width="2" height="2" fill="#780028"/><rect x="20" y="2" width="2" height="3" fill="#004000"/><rect x="14" y="5" width="14" height="2" fill="#004000"/><rect x="16" y="7" width="10" height="2" fill="#004000"/><rect x="18" y="9" width="6" height="2" fill="#004000"/><rect x="16" y="11" width="10" height="2" fill="#004000"/><rect x="16" y="13" width="2" height="2" fill="#004000"/><rect x="24" y="13" width="2" height="2" fill="#004000"/><rect x="18" y="0" width="2" height="3" fill="#ff0000"/><rect x="12" y="3" width="14" height="2" fill="#ff0000"/><rect x="14" y="5" width="10" height="2" fill="#ff0000"/><rect x="16" y="7" width="6" height="2" fill="#ff0000"/><rect x="14" y="9" width="10" height="2" fill="#ff0000"/><rect x="14" y="11" width="2" height="2" fill="#ff0000"/><rect x="22" y="11" width="2" height="2" fill="#ff0000"/></svg></div>
<div class="sk" style="left:521px;top:271px;width:57px;height:21px;background:#fff;"></div>
<div class="" style="left:559px;top:273px;width:17px;height:17px;background:#f0f0f0;"></div>
<div class="rs" style="left:559px;top:273px;width:17px;height:17px;"><svg width="7" height="4" style="position:absolute;left:4px;top:6px" viewBox="0 0 7 4" shape-rendering="crispEdges"><path d="M0 0h7v1h-1v1h-1v1h-1v1h-1v-1h-1v-1h-1v-1h-1z" fill="#000"/></svg></div>
<span class="t" style="left:525px;transform-origin:0 0;transform:scaleX(0.97);top:276.69px;font:bold 11px/11px 'DejaVu Sans Condensed','DejaVu Sans',sans-serif;color:#000080;">160K</span>
<div class="sk" style="left:353px;top:271px;width:25px;height:21px;background:#fff;"></div>
<span class="t" style="left:356.3px;transform-origin:0 0;transform:scaleX(0.94);top:275.69px;font:bold 11px/11px 'DejaVu Sans Condensed','DejaVu Sans',sans-serif;color:#808080;">0</span>
<div class="sk" style="left:377px;top:271px;width:25px;height:21px;background:#fff;"></div>
<span class="t" style="left:380.3px;transform-origin:0 0;transform:scaleX(0.94);top:275.69px;font:bold 11px/11px 'DejaVu Sans Condensed','DejaVu Sans',sans-serif;color:#808080;">0</span>
<div class="sk" style="left:401px;top:271px;width:25px;height:21px;background:#fff;"></div>
<span class="t" style="left:404.3px;transform-origin:0 0;transform:scaleX(0.94);top:275.69px;font:bold 11px/11px 'DejaVu Sans Condensed','DejaVu Sans',sans-serif;color:#808080;">0</span>
<div class="sk" style="left:425px;top:271px;width:25px;height:21px;background:#fff;"></div>
<span class="t" style="left:428.3px;transform-origin:0 0;transform:scaleX(0.94);top:275.69px;font:bold 11px/11px 'DejaVu Sans Condensed','DejaVu Sans',sans-serif;color:#808080;">0</span>
<div class="sk" style="left:449px;top:271px;width:25px;height:21px;background:#fff;"></div>
<span class="t" style="left:452.3px;transform-origin:0 0;transform:scaleX(0.94);top:275.69px;font:bold 11px/11px 'DejaVu Sans Condensed','DejaVu Sans',sans-serif;color:#808080;">0</span>
<div class="sk" style="left:473px;top:271px;width:25px;height:21px;background:#fff;"></div>
<span class="t" style="left:476.3px;transform-origin:0 0;transform:scaleX(0.94);top:275.69px;font:bold 11px/11px 'DejaVu Sans Condensed','DejaVu Sans',sans-serif;color:#808080;">0</span>
<div class="sk" style="left:497px;top:271px;width:25px;height:21px;background:#fff;"></div>
<span class="t" style="left:500.3px;transform-origin:0 0;transform:scaleX(0.94);top:275.69px;font:bold 11px/11px 'DejaVu Sans Condensed','DejaVu Sans',sans-serif;color:#808080;">0</span>
<div class="sk" style="left:308px;top:271px;width:45px;height:21px;background:#fff;"></div>
<div class="" style="left:334px;top:273px;width:17px;height:17px;background:#f0f0f0;"></div>
<div class="rs" style="left:334px;top:273px;width:17px;height:17px;"><svg width="7" height="4" style="position:absolute;left:4px;top:6px" viewBox="0 0 7 4" shape-rendering="crispEdges"><path d="M0 0h7v1h-1v1h-1v1h-1v1h-1v-1h-1v-1h-1v-1h-1z" fill="#000"/></svg></div>
<span class="t" style="left:312.8px;transform-origin:0 0;transform:scaleX(0.84);top:276.32px;font:normal 12.5px/12.5px 'Liberation Sans',sans-serif;color:#000080;width:25px;overflow:hidden;">ESP</span>
<div class="sk" style="left:265px;top:271px;width:45px;height:21px;background:#fff;"></div>
<div class="" style="left:291px;top:273px;width:17px;height:17px;background:#f0f0f0;"></div>
<div class="rs" style="left:291px;top:273px;width:17px;height:17px;"><svg width="7" height="4" style="position:absolute;left:4px;top:6px" viewBox="0 0 7 4" shape-rendering="crispEdges"><path d="M0 0h7v1h-1v1h-1v1h-1v1h-1v-1h-1v-1h-1v-1h-1z" fill="#000"/></svg></div>
<span class="t" style="left:270px;transform-origin:0 0;transform:scaleX(0.84);top:276.32px;font:normal 12.5px/12.5px 'Liberation Sans',sans-serif;color:#000;">G</span>
<div class="sk" style="left:81px;top:271px;width:185px;height:21px;background:#fff;"></div>
<span class="t" style="left:84px;transform-origin:0 0;transform:scaleX(0.857);top:275.32px;font:normal 12.5px/12.5px 'Liberation Sans',sans-serif;color:#000080;">DANI GIMENEZ</span>
<div class="sk" style="left:17px;top:295px;width:20px;height:21px;background:#fff;"><svg style="position:absolute;left:1px;top:1px" width="16" height="16" viewBox="0 0 8 8" shape-rendering="crispEdges">
<rect x="2" y="0" width="3" height="1" fill="#000"/><rect x="1" y="1" width="5" height="1" fill="#000"/>
<rect x="0" y="2" width="2" height="1" fill="#000"/><rect x="2" y="2" width="3" height="1" fill="#ff7000"/><rect x="5" y="2" width="2" height="1" fill="#000"/><rect x="7" y="2" width="1" height="3" fill="#202020"/>
<rect x="0" y="3" width="1" height="1" fill="#000"/><rect x="1" y="3" width="5" height="1" fill="#ff7000"/><rect x="2" y="3" width="1" height="1" fill="#fff"/><rect x="4" y="3" width="1" height="1" fill="#a8d0f0"/><rect x="5" y="3" width="1" height="1" fill="#e06000"/><rect x="6" y="3" width="1" height="1" fill="#000"/>
<rect x="1" y="4" width="4" height="1" fill="#ff7000"/><rect x="5" y="4" width="1" height="1" fill="#e06000"/><rect x="6" y="4" width="1" height="2" fill="#202020"/>
<rect x="1" y="5" width="1" height="1" fill="#c04000"/><rect x="2" y="5" width="1" height="1" fill="#ff7000"/><rect x="3" y="5" width="1" height="1" fill="#000"/><rect x="4" y="5" width="1" height="1" fill="#e06000"/><rect x="5" y="5" width="1" height="1" fill="#c04000"/><rect x="7" y="5" width="1" height="1" fill="#202020"/>
<rect x="2" y="6" width="2" height="1" fill="#d05000"/><rect x="4" y="6" width="1" height="1" fill="#c04000"/><rect x="5" y="6" width="2" height="1" fill="#202020"/>
<rect x="3" y="7" width="3" height="1" fill="#1a1a1a"/>
</svg></div>
<div class="sk" style="left:41px;top:295px;width:21px;height:21px;background:#c0c0c0;"></div>
<span class="t" style="left:44.5px;transform-origin:0 0;transform:scaleX(0.84);top:299.32px;font:normal 12.5px/12.5px 'Liberation Sans',sans-serif;color:#000;">2</span>
<div class="sk" style="left:63px;top:295px;width:17px;height:21px;background:#f0f0f0;"></div>
<span class="t" style="left:-128.5px;width:400px;text-align:center;transform-origin:50% 0;transform:scaleX(0.84);top:298.32px;font:normal 12.5px/12.5px 'Liberation Sans',sans-serif;color:#00a000;">2</span>
<div class="sk" style="left:641px;top:295px;width:41px;height:21px;background:#c0c0c0;"></div>
<span class="t" style="left:461.9px;width:400px;text-align:center;transform-origin:50% 0;transform:scaleX(0.847);top:298.32px;font:normal 12.5px/12.5px 'Liberation Sans',sans-serif;color:#800000;">STP</span>
<div class="sk" style="left:577px;top:295px;width:65px;height:21px;background:#000;"><svg style="position:absolute;left:1px;top:1px" width="61" height="17" viewBox="0 0 61 17" shape-rendering="crispEdges"><rect x="8" y="2" width="2" height="3" fill="#004000"/><rect x="2" y="5" width="14" height="2" fill="#004000"/><rect x="4" y="7" width="10" height="2" fill="#004000"/><rect x="6" y="9" width="6" height="2" fill="#004000"/><rect x="4" y="11" width="10" height="2" fill="#004000"/><rect x="4" y="13" width="2" height="2" fill="#004000"/><rect x="12" y="13" width="2" height="2" fill="#004000"/><rect x="6" y="0" width="2" height="3" fill="#780028"/><rect x="0" y="3" width="14" height="2" fill="#780028"/><rect x="2" y="5" width="10" height="2" fill="#780028"/><rect x="4" y="7" width="6" height="2" fill="#780028"/><rect x="2" y="9" width="10" height="2" fill="#780028"/><rect x="2" y="11" width="2" height="2" fill="#780028"/><rect x="10" y="11" width="2" height="2" fill="#780028"/><rect x="20" y="2" width="2" height="3" fill="#004000"/><rect x="14" y="5" width="14" height="2" fill="#004000"/><rect x="16" y="7" width="10" height="2" fill="#004000"/><rect x="18" y="9" width="6" height="2" fill="#004000"/><rect x="16" y="11" width="10" height="2" fill="#004000"/><rect x="16" y="13" width="2" height="2" fill="#004000"/><rect x="24" y="13" width="2" height="2" fill="#004000"/><rect x="18" y="0" width="2" height="3" fill="#ff0000"/><rect x="12" y="3" width="14" height="2" fill="#ff0000"/><rect x="14" y="5" width="10" height="2" fill="#ff0000"/><rect x="16" y="7" width="6" height="2" fill="#ff0000"/><rect x="14" y="9" width="10" height="2" fill="#ff0000"/><rect x="14" y="11" width="2" height="2" fill="#ff0000"/><rect x="22" y="11" width="2" height="2" fill="#ff0000"/><rect x="32" y="5" width="2" height="2" fill="#004000"/><rect x="28" y="7" width="10" height="2" fill="#004000"/><rect x="30" y="9" width="6" height="2" fill="#004000"/><rect x="30" y="11" width="2" height="2" fill="#004000"/><rect x="34" y="11" width="2" height="2" fill="#004000"/><rect x="30" y="3" width="2" height="2" fill="#ff7f10"/><rect x="26" y="5" width="10" height="2" fill="#ff7f10"/><rect x="28" y="7" width="6" height="2" fill="#ff7f10"/><rect x="28" y="9" width="2" height="2" fill="#ff7f10"/><rect x="32" y="9" width="2" height="2" fill="#ff7f10"/></svg></div>
<div class="sk" style="left:521px;top:295px;width:57px;height:21px;background:#c0c0c0;"></div>
<span class="t" style="left:524px;transform-origin:0 0;transform:scaleX(0.97);top:299.69px;font:bold 11px/11px 'DejaVu Sans Condensed','DejaVu Sans',sans-serif;color:#000080;">550K</span>
<div class="sk" style="left:353px;top:295px;width:25px;height:21px;background:#c0c0c0;"></div>
<span class="t" style="left:356.3px;transform-origin:0 0;transform:scaleX(0.94);top:299.69px;font:bold 11px/11px 'DejaVu Sans Condensed','DejaVu Sans',sans-serif;color:#109810;">12</span>
<div class="sk" style="left:377px;top:295px;width:25px;height:21px;background:#c0c0c0;"></div>
<span class="t" style="left:380.3px;transform-origin:0 0;transform:scaleX(0.94);top:299.69px;font:bold 11px/11px 'DejaVu Sans Condensed','DejaVu Sans',sans-serif;color:#000;">1</span>
<div class="sk" style="left:401px;top:295px;width:25px;height:21px;background:#c0c0c0;"></div>
<span class="t" style="left:404.3px;transform-origin:0 0;transform:scaleX(0.94);top:299.69px;font:bold 11px/11px 'DejaVu Sans Condensed','DejaVu Sans',sans-serif;color:#000;">2</span>
<div class="sk" style="left:425px;top:295px;width:25px;height:21px;background:#c0c0c0;"></div>
<span class="t" style="left:428.3px;transform-origin:0 0;transform:scaleX(0.94);top:299.69px;font:bold 11px/11px 'DejaVu Sans Condensed','DejaVu Sans',sans-serif;color:#109810;">12</span>
<div class="sk" style="left:449px;top:295px;width:25px;height:21px;background:#c0c0c0;"></div>
<span class="t" style="left:452.3px;transform-origin:0 0;transform:scaleX(0.94);top:299.69px;font:bold 11px/11px 'DejaVu Sans Condensed','DejaVu Sans',sans-serif;color:#109810;">12</span>
<div class="sk" style="left:473px;top:295px;width:25px;height:21px;background:#c0c0c0;"></div>
<span class="t" style="left:476.3px;transform-origin:0 0;transform:scaleX(0.94);top:299.69px;font:bold 11px/11px 'DejaVu Sans Condensed','DejaVu Sans',sans-serif;color:#109810;">13</span>
<div class="sk" style="left:497px;top:295px;width:25px;height:21px;background:#c0c0c0;"></div>
<span class="t" style="left:500.3px;transform-origin:0 0;transform:scaleX(0.94);top:299.69px;font:bold 11px/11px 'DejaVu Sans Condensed','DejaVu Sans',sans-serif;color:#000;">0</span>
<div class="sk" style="left:308px;top:295px;width:45px;height:21px;background:#c0c0c0;"></div>
<div class="" style="left:334px;top:297px;width:17px;height:17px;background:#f0f0f0;"></div>
<div class="rs" style="left:334px;top:297px;width:17px;height:17px;"><svg width="7" height="4" style="position:absolute;left:4px;top:6px" viewBox="0 0 7 4" shape-rendering="crispEdges"><path d="M0 0h7v1h-1v1h-1v1h-1v1h-1v-1h-1v-1h-1v-1h-1z" fill="#000"/></svg></div>
<span class="t" style="left:312.8px;transform-origin:0 0;transform:scaleX(0.84);top:300.32px;font:normal 12.5px/12.5px 'Liberation Sans',sans-serif;color:#000080;width:25px;overflow:hidden;">ESP</span>
<div class="sk" style="left:265px;top:295px;width:45px;height:21px;background:#c0c0c0;"></div>
<div class="" style="left:291px;top:297px;width:17px;height:17px;background:#f0f0f0;"></div>
<div class="rs" style="left:291px;top:297px;width:17px;height:17px;"><svg width="7" height="4" style="position:absolute;left:4px;top:6px" viewBox="0 0 7 4" shape-rendering="crispEdges"><path d="M0 0h7v1h-1v1h-1v1h-1v1h-1v-1h-1v-1h-1v-1h-1z" fill="#000"/></svg></div>
<span class="t" style="left:270px;transform-origin:0 0;transform:scaleX(0.84);top:300.32px;font:normal 12.5px/12.5px 'Liberation Sans',sans-serif;color:#000;">RB</span>
<div class="sk" style="left:81px;top:295px;width:185px;height:21px;background:#c0c0c0;"></div>
<span class="t" style="left:84px;transform-origin:0 0;transform:scaleX(0.857);top:299.32px;font:normal 12.5px/12.5px 'Liberation Sans',sans-serif;color:#000080;">ANTONIO BARRAGAN</span>
<div class="sk" style="left:697px;top:295px;width:57px;height:21px;background:#c0c0c0;"></div>
<div class="" style="left:735px;top:297px;width:17px;height:17px;background:#f0f0f0;"></div>
<div class="rs" style="left:735px;top:297px;width:17px;height:17px;"><svg width="7" height="4" style="position:absolute;left:4px;top:6px" viewBox="0 0 7 4" shape-rendering="crispEdges"><path d="M0 0h7v1h-1v1h-1v1h-1v1h-1v-1h-1v-1h-1v-1h-1z" fill="#000"/></svg></div>
<span class="t" style="left:701.7px;transform-origin:0 0;transform:scaleX(0.836);top:300.32px;font:normal 12.5px/12.5px 'Liberation Sans',sans-serif;color:#000080;">550K</span>
<div class="rs" style="left:761px;top:295px;width:17px;height:17px;"></div>
<span class="t" style="left:569.5px;width:400px;text-align:center;transform-origin:50% 0;transform:scaleX(0.84);top:297.32px;font:normal 12.5px/12.5px 'Liberation Sans',sans-serif;color:#000;">V</span>
<div class="sk" style="left:17px;top:319px;width:20px;height:21px;background:#fff;"><svg style="position:absolute;left:1px;top:1px" width="16" height="16" viewBox="0 0 8 8" shape-rendering="crispEdges">
<rect x="2" y="0" width="3" height="1" fill="#000"/><rect x="1" y="1" width="5" height="1" fill="#000"/>
<rect x="0" y="2" width="2" height="1" fill="#000"/><rect x="2" y="2" width="3" height="1" fill="#ff7000"/><rect x="5" y="2" width="2" height="1" fill="#000"/><rect x="7" y="2" width="1" height="3" fill="#202020"/>
<rect x="0" y="3" width="1" height="1" fill="#000"/><rect x="1" y="3" width="5" height="1" fill="#ff7000"/><rect x="2" y="3" width="1" height="1" fill="#fff"/><rect x="4" y="3" width="1" height="1" fill="#a8d0f0"/><rect x="5" y="3" width="1" height="1" fill="#e06000"/><rect x="6" y="3" width="1" height="1" fill="#000"/>
<rect x="1" y="4" width="4" height="1" fill="#ff7000"/><rect x="5" y="4" width="1" height="1" fill="#e06000"/><rect x="6" y="4" width="1" height="2" fill="#202020"/>
<rect x="1" y="5" width="1" height="1" fill="#c04000"/><rect x="2" y="5" width="1" height="1" fill="#ff7000"/><rect x="3" y="5" width="1" height="1" fill="#000"/><rect x="4" y="5" width="1" height="1" fill="#e06000"/><rect x="5" y="5" width="1" height="1" fill="#c04000"/><rect x="7" y="5" width="1" height="1" fill="#202020"/>
<rect x="2" y="6" width="2" height="1" fill="#d05000"/><rect x="4" y="6" width="1" height="1" fill="#c04000"/><rect x="5" y="6" width="2" height="1" fill="#202020"/>
<rect x="3" y="7" width="3" height="1" fill="#1a1a1a"/>
</svg></div>
<div class="sk" style="left:41px;top:319px;width:21px;height:21px;background:#fff;"></div>
<span class="t" style="left:44.5px;transform-origin:0 0;transform:scaleX(0.84);top:323.32px;font:normal 12.5px/12.5px 'Liberation Sans',sans-serif;color:#000;">3</span>
<div class="sk" style="left:63px;top:319px;width:17px;height:21px;background:#f0f0f0;"></div>
<span class="t" style="left:-128.5px;width:400px;text-align:center;transform-origin:50% 0;transform:scaleX(0.84);top:322.32px;font:normal 12.5px/12.5px 'Liberation Sans',sans-serif;color:#00a000;">3</span>
<div class="sk" style="left:641px;top:319px;width:41px;height:21px;background:#fff;"></div>
<span class="t" style="left:461.9px;width:400px;text-align:center;transform-origin:50% 0;transform:scaleX(0.847);top:322.32px;font:normal 12.5px/12.5px 'Liberation Sans',sans-serif;color:#800000;">STH</span>
<div class="sk" style="left:577px;top:319px;width:65px;height:21px;background:#000;"><svg style="position:absolute;left:1px;top:1px" width="61" height="17" viewBox="0 0 61 17" shape-rendering="crispEdges"><rect x="8" y="2" width="2" height="3" fill="#004000"/><rect x="2" y="5" width="14" height="2" fill="#004000"/><rect x="4" y="7" width="10" height="2" fill="#004000"/><rect x="6" y="9" width="6" height="2" fill="#004000"/><rect x="4" y="11" width="10" height="2" fill="#004000"/><rect x="4" y="13" width="2" height="2" fill="#004000"/><rect x="12" y="13" width="2" height="2" fill="#004000"/><rect x="6" y="0" width="2" height="3" fill="#780028"/><rect x="0" y="3" width="14" height="2" fill="#780028"/><rect x="2" y="5" width="10" height="2" fill="#780028"/><rect x="4" y="7" width="6" height="2" fill="#780028"/><rect x="2" y="9" width="10" height="2" fill="#780028"/><rect x="2" y="11" width="2" height="2" fill="#780028"/><rect x="10" y="11" width="2" height="2" fill="#780028"/><rect x="20" y="2" width="2" height="3" fill="#004000"/><rect x="14" y="5" width="14" height="2" fill="#004000"/><rect x="16" y="7" width="10" height="2" fill="#004000"/><rect x="18" y="9" width="6" height="2" fill="#004000"/><rect x="16" y="11" width="10" height="2" fill="#004000"/><rect x="16" y="13" width="2" height="2" fill="#004000"/><rect x="24" y="13" width="2" height="2" fill="#004000"/><rect x="18" y="0" width="2" height="3" fill="#ff0000"/><rect x="12" y="3" width="14" height="2" fill="#ff0000"/><rect x="14" y="5" width="10" height="2" fill="#ff0000"/><rect x="16" y="7" width="6" height="2" fill="#ff0000"/><rect x="14" y="9" width="10" height="2" fill="#ff0000"/><rect x="14" y="11" width="2" height="2" fill="#ff0000"/><rect x="22" y="11" width="2" height="2" fill="#ff0000"/><rect x="32" y="2" width="2" height="3" fill="#004000"/><rect x="26" y="5" width="14" height="2" fill="#004000"/><rect x="28" y="7" width="10" height="2" fill="#004000"/><rect x="30" y="9" width="6" height="2" fill="#004000"/><rect x="28" y="11" width="10" height="2" fill="#004000"/><rect x="28" y="13" width="2" height="2" fill="#004000"/><rect x="36" y="13" width="2" height="2" fill="#004000"/><rect x="30" y="0" width="2" height="3" fill="#ff7f10"/><rect x="24" y="3" width="14" height="2" fill="#ff7f10"/><rect x="26" y="5" width="10" height="2" fill="#ff7f10"/><rect x="28" y="7" width="6" height="2" fill="#ff7f10"/><rect x="26" y="9" width="10" height="2" fill="#ff7f10"/><rect x="26" y="11" width="2" height="2" fill="#ff7f10"/><rect x="34" y="11" width="2" height="2" fill="#ff7f10"/><rect x="44" y="5" width="2" height="2" fill="#004000"/><rect x="40" y="7" width="10" height="2" fill="#004000"/><rect x="42" y="9" width="6" height="2" fill="#004000"/><rect x="42" y="11" width="2" height="2" fill="#004000"/><rect x="46" y="11" width="2" height="2" fill="#004000"/><rect x="42" y="3" width="2" height="2" fill="#ffff00"/><rect x="38" y="5" width="10" height="2" fill="#ffff00"/><rect x="40" y="7" width="6" height="2" fill="#ffff00"/><rect x="40" y="9" width="2" height="2" fill="#ffff00"/><rect x="44" y="9" width="2" height="2" fill="#ffff00"/></svg></div>
<div class="sk" style="left:521px;top:319px;width:57px;height:21px;background:#fff;"></div>
<span class="t" style="left:524px;transform-origin:0 0;transform:scaleX(0.97);top:323.69px;font:bold 11px/11px 'DejaVu Sans Condensed','DejaVu Sans',sans-serif;color:#000080;">1.3M</span>
<div class="sk" style="left:353px;top:319px;width:25px;height:21px;background:#fff;"></div>
<span class="t" style="left:356.3px;transform-origin:0 0;transform:scaleX(0.94);top:323.69px;font:bold 11px/11px 'DejaVu Sans Condensed','DejaVu Sans',sans-serif;color:#109810;">13</span>
<div class="sk" style="left:377px;top:319px;width:25px;height:21px;background:#fff;"></div>
<span class="t" style="left:380.3px;transform-origin:0 0;transform:scaleX(0.94);top:323.69px;font:bold 11px/11px 'DejaVu Sans Condensed','DejaVu Sans',sans-serif;color:#000;">2</span>
<div class="sk" style="left:401px;top:319px;width:25px;height:21px;background:#fff;"></div>
<span class="t" style="left:404.3px;transform-origin:0 0;transform:scaleX(0.94);top:323.69px;font:bold 11px/11px 'DejaVu Sans Condensed','DejaVu Sans',sans-serif;color:#ff0818;">14</span>
<div class="sk" style="left:425px;top:319px;width:25px;height:21px;background:#fff;"></div>
<span class="t" style="left:428.3px;transform-origin:0 0;transform:scaleX(0.94);top:323.69px;font:bold 11px/11px 'DejaVu Sans Condensed','DejaVu Sans',sans-serif;color:#109810;">13</span>
<div class="sk" style="left:449px;top:319px;width:25px;height:21px;background:#fff;"></div>
<span class="t" style="left:452.3px;transform-origin:0 0;transform:scaleX(0.94);top:323.69px;font:bold 11px/11px 'DejaVu Sans Condensed','DejaVu Sans',sans-serif;color:#007080;">3</span>
<div class="sk" style="left:473px;top:319px;width:25px;height:21px;background:#fff;"></div>
<span class="t" style="left:476.3px;transform-origin:0 0;transform:scaleX(0.94);top:323.69px;font:bold 11px/11px 'DejaVu Sans Condensed','DejaVu Sans',sans-serif;color:#ff0818;">15</span>
<div class="sk" style="left:497px;top:319px;width:25px;height:21px;background:#fff;"></div>
<span class="t" style="left:500.3px;transform-origin:0 0;transform:scaleX(0.94);top:323.69px;font:bold 11px/11px 'DejaVu Sans Condensed','DejaVu Sans',sans-serif;color:#000;">2</span>
<div class="sk" style="left:308px;top:319px;width:45px;height:21px;background:#fff;"></div>
<div class="" style="left:334px;top:321px;width:17px;height:17px;background:#f0f0f0;"></div>
<div class="rs" style="left:334px;top:321px;width:17px;height:17px;"><svg width="7" height="4" style="position:absolute;left:4px;top:6px" viewBox="0 0 7 4" shape-rendering="crispEdges"><path d="M0 0h7v1h-1v1h-1v1h-1v1h-1v-1h-1v-1h-1v-1h-1z" fill="#000"/></svg></div>
<span class="t" style="left:312.8px;transform-origin:0 0;transform:scaleX(0.84);top:324.32px;font:normal 12.5px/12.5px 'Liberation Sans',sans-serif;color:#000080;width:25px;overflow:hidden;">ALG</span>
<div class="sk" style="left:265px;top:319px;width:45px;height:21px;background:#fff;"></div>
<div class="" style="left:291px;top:321px;width:17px;height:17px;background:#f0f0f0;"></div>
<div class="rs" style="left:291px;top:321px;width:17px;height:17px;"><svg width="7" height="4" style="position:absolute;left:4px;top:6px" viewBox="0 0 7 4" shape-rendering="crispEdges"><path d="M0 0h7v1h-1v1h-1v1h-1v1h-1v-1h-1v-1h-1v-1h-1z" fill="#000"/></svg></div>
<span class="t" style="left:270px;transform-origin:0 0;transform:scaleX(0.84);top:324.32px;font:normal 12.5px/12.5px 'Liberation Sans',sans-serif;color:#000;">D</span>
<div class="sk" style="left:81px;top:319px;width:185px;height:21px;background:#fff;"></div>
<span class="t" style="left:84px;transform-origin:0 0;transform:scaleX(0.857);top:323.32px;font:normal 12.5px/12.5px 'Liberation Sans',sans-serif;color:#000080;">AISSA MANDI</span>
<div class="sk" style="left:697px;top:319px;width:57px;height:21px;background:#fff;"></div>
<div class="" style="left:735px;top:321px;width:17px;height:17px;background:#f0f0f0;"></div>
<div class="rs" style="left:735px;top:321px;width:17px;height:17px;"><svg width="7" height="4" style="position:absolute;left:4px;top:6px" viewBox="0 0 7 4" shape-rendering="crispEdges"><path d="M0 0h7v1h-1v1h-1v1h-1v1h-1v-1h-1v-1h-1v-1h-1z" fill="#000"/></svg></div>
<span class="t" style="left:701.7px;transform-origin:0 0;transform:scaleX(0.836);top:324.32px;font:normal 12.5px/12.5px 'Liberation Sans',sans-serif;color:#000080;">1.3M</span>
<div class="rs" style="left:761px;top:319px;width:17px;height:17px;"></div>
<span class="t" style="left:569.5px;width:400px;text-align:center;transform-origin:50% 0;transform:scaleX(0.84);top:321.32px;font:normal 12.5px/12.5px 'Liberation Sans',sans-serif;color:#000;">V</span>
<div class="sk" style="left:17px;top:343px;width:20px;height:21px;background:#fff;"><svg style="position:absolute;left:1px;top:1px" width="16" height="16" viewBox="0 0 8 8" shape-rendering="crispEdges">
<rect x="2" y="0" width="3" height="1" fill="#000"/><rect x="1" y="1" width="5" height="1" fill="#000"/>
<rect x="0" y="2" width="2" height="1" fill="#000"/><rect x="2" y="2" width="3" height="1" fill="#ff7000"/><rect x="5" y="2" width="2" height="1" fill="#000"/><rect x="7" y="2" width="1" height="3" fill="#202020"/>
<rect x="0" y="3" width="1" height="1" fill="#000"/><rect x="1" y="3" width="5" height="1" fill="#ff7000"/><rect x="2" y="3" width="1" height="1" fill="#fff"/><rect x="4" y="3" width="1" height="1" fill="#a8d0f0"/><rect x="5" y="3" width="1" height="1" fill="#e06000"/><rect x="6" y="3" width="1" height="1" fill="#000"/>
<rect x="1" y="4" width="4" height="1" fill="#ff7000"/><rect x="5" y="4" width="1" height="1" fill="#e06000"/><rect x="6" y="4" width="1" height="2" fill="#202020"/>
<rect x="1" y="5" width="1" height="1" fill="#c04000"/><rect x="2" y="5" width="1" height="1" fill="#ff7000"/><rect x="3" y="5" width="1" height="1" fill="#000"/><rect x="4" y="5" width="1" height="1" fill="#e06000"/><rect x="5" y="5" width="1" height="1" fill="#c04000"/><rect x="7" y="5" width="1" height="1" fill="#202020"/>
<rect x="2" y="6" width="2" height="1" fill="#d05000"/><rect x="4" y="6" width="1" height="1" fill="#c04000"/><rect x="5" y="6" width="2" height="1" fill="#202020"/>
<rect x="3" y="7" width="3" height="1" fill="#1a1a1a"/>
</svg></div>
<div class="sk" style="left:41px;top:343px;width:21px;height:21px;background:#c0c0c0;"></div>
<span class="t" style="left:44.5px;transform-origin:0 0;transform:scaleX(0.84);top:347.32px;font:normal 12.5px/12.5px 'Liberation Sans',sans-serif;color:#000;">4</span>
<div class="sk" style="left:63px;top:343px;width:17px;height:21px;background:#f0f0f0;"></div>
<span class="t" style="left:-128.5px;width:400px;text-align:center;transform-origin:50% 0;transform:scaleX(0.84);top:346.32px;font:normal 12.5px/12.5px 'Liberation Sans',sans-serif;color:#c00000;">13</span>
<div class="sk" style="left:641px;top:343px;width:41px;height:21px;background:#c0c0c0;"></div>
<span class="t" style="left:461.9px;width:400px;text-align:center;transform-origin:50% 0;transform:scaleX(0.847);top:346.32px;font:normal 12.5px/12.5px 'Liberation Sans',sans-serif;color:#800000;">PSH</span>
<div class="sk" style="left:577px;top:343px;width:65px;height:21px;background:#000;"><svg style="position:absolute;left:1px;top:1px" width="61" height="17" viewBox="0 0 61 17" shape-rendering="crispEdges"><rect x="8" y="2" width="2" height="3" fill="#004000"/><rect x="2" y="5" width="14" height="2" fill="#004000"/><rect x="4" y="7" width="10" height="2" fill="#004000"/><rect x="6" y="9" width="6" height="2" fill="#004000"/><rect x="4" y="11" width="10" height="2" fill="#004000"/><rect x="4" y="13" width="2" height="2" fill="#004000"/><rect x="12" y="13" width="2" height="2" fill="#004000"/><rect x="6" y="0" width="2" height="3" fill="#780028"/><rect x="0" y="3" width="14" height="2" fill="#780028"/><rect x="2" y="5" width="10" height="2" fill="#780028"/><rect x="4" y="7" width="6" height="2" fill="#780028"/><rect x="2" y="9" width="10" height="2" fill="#780028"/><rect x="2" y="11" width="2" height="2" fill="#780028"/><rect x="10" y="11" width="2" height="2" fill="#780028"/><rect x="20" y="2" width="2" height="3" fill="#004000"/><rect x="14" y="5" width="14" height="2" fill="#004000"/><rect x="16" y="7" width="10" height="2" fill="#004000"/><rect x="18" y="9" width="6" height="2" fill="#004000"/><rect x="16" y="11" width="10" height="2" fill="#004000"/><rect x="16" y="13" width="2" height="2" fill="#004000"/><rect x="24" y="13" width="2" height="2" fill="#004000"/><rect x="18" y="0" width="2" height="3" fill="#ff0000"/><rect x="12" y="3" width="14" height="2" fill="#ff0000"/><rect x="14" y="5" width="10" height="2" fill="#ff0000"/><rect x="16" y="7" width="6" height="2" fill="#ff0000"/><rect x="14" y="9" width="10" height="2" fill="#ff0000"/><rect x="14" y="11" width="2" height="2" fill="#ff0000"/><rect x="22" y="11" width="2" height="2" fill="#ff0000"/><rect x="32" y="2" width="2" height="3" fill="#004000"/><rect x="26" y="5" width="14" height="2" fill="#004000"/><rect x="28" y="7" width="10" height="2" fill="#004000"/><rect x="30" y="9" width="6" height="2" fill="#004000"/><rect x="28" y="11" width="10" height="2" fill="#004000"/><rect x="28" y="13" width="2" height="2" fill="#004000"/><rect x="36" y="13" width="2" height="2" fill="#004000"/><rect x="30" y="0" width="2" height="3" fill="#ff7f10"/><rect x="24" y="3" width="14" height="2" fill="#ff7f10"/><rect x="26" y="5" width="10" height="2" fill="#ff7f10"/><rect x="28" y="7" width="6" height="2" fill="#ff7f10"/><rect x="26" y="9" width="10" height="2" fill="#ff7f10"/><rect x="26" y="11" width="2" height="2" fill="#ff7f10"/><rect x="34" y="11" width="2" height="2" fill="#ff7f10"/></svg></div>
<div class="sk" style="left:521px;top:343px;width:57px;height:21px;background:#c0c0c0;"></div>
<span class="t" style="left:524px;transform-origin:0 0;transform:scaleX(0.97);top:347.69px;font:bold 11px/11px 'DejaVu Sans Condensed','DejaVu Sans',sans-serif;color:#000080;">800K</span>
<div class="sk" style="left:353px;top:343px;width:25px;height:21px;background:#c0c0c0;"></div>
<span class="t" style="left:356.3px;transform-origin:0 0;transform:scaleX(0.94);top:347.69px;font:bold 11px/11px 'DejaVu Sans Condensed','DejaVu Sans',sans-serif;color:#109810;">13</span>
<div class="sk" style="left:377px;top:343px;width:25px;height:21px;background:#c0c0c0;"></div>
<span class="t" style="left:380.3px;transform-origin:0 0;transform:scaleX(0.94);top:347.69px;font:bold 11px/11px 'DejaVu Sans Condensed','DejaVu Sans',sans-serif;color:#007080;">4</span>
<div class="sk" style="left:401px;top:343px;width:25px;height:21px;background:#c0c0c0;"></div>
<span class="t" style="left:404.3px;transform-origin:0 0;transform:scaleX(0.94);top:347.69px;font:bold 11px/11px 'DejaVu Sans Condensed','DejaVu Sans',sans-serif;color:#109810;">12</span>
<div class="sk" style="left:425px;top:343px;width:25px;height:21px;background:#c0c0c0;"></div>
<span class="t" style="left:428.3px;transform-origin:0 0;transform:scaleX(0.94);top:347.69px;font:bold 11px/11px 'DejaVu Sans Condensed','DejaVu Sans',sans-serif;color:#109810;">12</span>
<div class="sk" style="left:449px;top:343px;width:25px;height:21px;background:#c0c0c0;"></div>
<span class="t" style="left:452.3px;transform-origin:0 0;transform:scaleX(0.94);top:347.69px;font:bold 11px/11px 'DejaVu Sans Condensed','DejaVu Sans',sans-serif;color:#000;">2</span>
<div class="sk" style="left:473px;top:343px;width:25px;height:21px;background:#c0c0c0;"></div>
<span class="t" style="left:476.3px;transform-origin:0 0;transform:scaleX(0.94);top:347.69px;font:bold 11px/11px 'DejaVu Sans Condensed','DejaVu Sans',sans-serif;color:#109810;">13</span>
<div class="sk" style="left:497px;top:343px;width:25px;height:21px;background:#c0c0c0;"></div>
<span class="t" style="left:500.3px;transform-origin:0 0;transform:scaleX(0.94);top:347.69px;font:bold 11px/11px 'DejaVu Sans Condensed','DejaVu Sans',sans-serif;color:#000;">1</span>
<div class="sk" style="left:308px;top:343px;width:45px;height:21px;background:#c0c0c0;"></div>
<div class="" style="left:334px;top:345px;width:17px;height:17px;background:#f0f0f0;"></div>
<div class="rs" style="left:334px;top:345px;width:17px;height:17px;"><svg width="7" height="4" style="position:absolute;left:4px;top:6px" viewBox="0 0 7 4" shape-rendering="crispEdges"><path d="M0 0h7v1h-1v1h-1v1h-1v1h-1v-1h-1v-1h-1v-1h-1z" fill="#000"/></svg></div>
<span class="t" style="left:312.8px;transform-origin:0 0;transform:scaleX(0.84);top:348.32px;font:normal 12.5px/12.5px 'Liberation Sans',sans-serif;color:#000080;width:25px;overflow:hidden;">MAR</span>
<div class="sk" style="left:265px;top:343px;width:45px;height:21px;background:#c0c0c0;"></div>
<div class="" style="left:291px;top:345px;width:17px;height:17px;background:#f0f0f0;"></div>
<div class="rs" style="left:291px;top:345px;width:17px;height:17px;"><svg width="7" height="4" style="position:absolute;left:4px;top:6px" viewBox="0 0 7 4" shape-rendering="crispEdges"><path d="M0 0h7v1h-1v1h-1v1h-1v1h-1v-1h-1v-1h-1v-1h-1z" fill="#000"/></svg></div>
<span class="t" style="left:270px;transform-origin:0 0;transform:scaleX(0.84);top:348.32px;font:normal 12.5px/12.5px 'Liberation Sans',sans-serif;color:#000;">D</span>
<div class="sk" style="left:81px;top:343px;width:185px;height:21px;background:#c0c0c0;"></div>
<span class="t" style="left:84px;transform-origin:0 0;transform:scaleX(0.857);top:347.32px;font:normal 12.5px/12.5px 'Liberation Sans',sans-serif;color:#000080;">ZOUHAIR FEDDAL</span>
<div class="sk" style="left:697px;top:343px;width:57px;height:21px;background:#c0c0c0;"></div>
<div class="" style="left:735px;top:345px;width:17px;height:17px;background:#f0f0f0;"></div>
<div class="rs" style="left:735px;top:345px;width:17px;height:17px;"><svg width="7" height="4" style="position:absolute;left:4px;top:6px" viewBox="0 0 7 4" shape-rendering="crispEdges"><path d="M0 0h7v1h-1v1h-1v1h-1v1h-1v-1h-1v-1h-1v-1h-1z" fill="#000"/></svg></div>
<span class="t" style="left:701.7px;transform-origin:0 0;transform:scaleX(0.836);top:348.32px;font:normal 12.5px/12.5px 'Liberation Sans',sans-serif;color:#000080;">800K</span>
<div class="rs" style="left:761px;top:343px;width:17px;height:17px;"></div>
<span class="t" style="left:569.5px;width:400px;text-align:center;transform-origin:50% 0;transform:scaleX(0.84);top:345.32px;font:normal 12.5px/12.5px 'Liberation Sans',sans-serif;color:#000;">V</span>
<div class="sk" style="left:17px;top:367px;width:20px;height:21px;background:#fff;"><svg style="position:absolute;left:1px;top:1px" width="16" height="16" viewBox="0 0 8 8" shape-rendering="crispEdges">
<rect x="2" y="0" width="3" height="1" fill="#000"/><rect x="1" y="1" width="5" height="1" fill="#000"/>
<rect x="0" y="2" width="2" height="1" fill="#000"/><rect x="2" y="2" width="3" height="1" fill="#ff7000"/><rect x="5" y="2" width="2" height="1" fill="#000"/><rect x="7" y="2" width="1" height="3" fill="#202020"/>
<rect x="0" y="3" width="1" height="1" fill="#000"/><rect x="1" y="3" width="5" height="1" fill="#ff7000"/><rect x="2" y="3" width="1" height="1" fill="#fff"/><rect x="4" y="3" width="1" height="1" fill="#a8d0f0"/><rect x="5" y="3" width="1" height="1" fill="#e06000"/><rect x="6" y="3" width="1" height="1" fill="#000"/>
<rect x="1" y="4" width="4" height="1" fill="#ff7000"/><rect x="5" y="4" width="1" height="1" fill="#e06000"/><rect x="6" y="4" width="1" height="2" fill="#202020"/>
<rect x="1" y="5" width="1" height="1" fill="#c04000"/><rect x="2" y="5" width="1" height="1" fill="#ff7000"/><rect x="3" y="5" width="1" height="1" fill="#000"/><rect x="4" y="5" width="1" height="1" fill="#e06000"/><rect x="5" y="5" width="1" height="1" fill="#c04000"/><rect x="7" y="5" width="1" height="1" fill="#202020"/>
<rect x="2" y="6" width="2" height="1" fill="#d05000"/><rect x="4" y="6" width="1" height="1" fill="#c04000"/><rect x="5" y="6" width="2" height="1" fill="#202020"/>
<rect x="3" y="7" width="3" height="1" fill="#1a1a1a"/>
</svg></div>
<div class="sk" style="left:41px;top:367px;width:21px;height:21px;background:#fff;"></div>
<span class="t" style="left:44.5px;transform-origin:0 0;transform:scaleX(0.84);top:371.32px;font:normal 12.5px/12.5px 'Liberation Sans',sans-serif;color:#000;">5</span>
<div class="sk" style="left:63px;top:367px;width:17px;height:21px;background:#f0f0f0;"></div>
<span class="t" style="left:-128.5px;width:400px;text-align:center;transform-origin:50% 0;transform:scaleX(0.84);top:370.32px;font:normal 12.5px/12.5px 'Liberation Sans',sans-serif;color:#00a000;">5</span>
<div class="sk" style="left:641px;top:367px;width:41px;height:21px;background:#fff;"></div>
<span class="t" style="left:461.9px;width:400px;text-align:center;transform-origin:50% 0;transform:scaleX(0.847);top:370.32px;font:normal 12.5px/12.5px 'Liberation Sans',sans-serif;color:#800000;">TSP</span>
<div class="sk" style="left:577px;top:367px;width:65px;height:21px;background:#000;"><svg style="position:absolute;left:1px;top:1px" width="61" height="17" viewBox="0 0 61 17" shape-rendering="crispEdges"><rect x="8" y="2" width="2" height="3" fill="#004000"/><rect x="2" y="5" width="14" height="2" fill="#004000"/><rect x="4" y="7" width="10" height="2" fill="#004000"/><rect x="6" y="9" width="6" height="2" fill="#004000"/><rect x="4" y="11" width="10" height="2" fill="#004000"/><rect x="4" y="13" width="2" height="2" fill="#004000"/><rect x="12" y="13" width="2" height="2" fill="#004000"/><rect x="6" y="0" width="2" height="3" fill="#780028"/><rect x="0" y="3" width="14" height="2" fill="#780028"/><rect x="2" y="5" width="10" height="2" fill="#780028"/><rect x="4" y="7" width="6" height="2" fill="#780028"/><rect x="2" y="9" width="10" height="2" fill="#780028"/><rect x="2" y="11" width="2" height="2" fill="#780028"/><rect x="10" y="11" width="2" height="2" fill="#780028"/><rect x="20" y="2" width="2" height="3" fill="#004000"/><rect x="14" y="5" width="14" height="2" fill="#004000"/><rect x="16" y="7" width="10" height="2" fill="#004000"/><rect x="18" y="9" width="6" height="2" fill="#004000"/><rect x="16" y="11" width="10" height="2" fill="#004000"/><rect x="16" y="13" width="2" height="2" fill="#004000"/><rect x="24" y="13" width="2" height="2" fill="#004000"/><rect x="18" y="0" width="2" height="3" fill="#ff0000"/><rect x="12" y="3" width="14" height="2" fill="#ff0000"/><rect x="14" y="5" width="10" height="2" fill="#ff0000"/><rect x="16" y="7" width="6" height="2" fill="#ff0000"/><rect x="14" y="9" width="10" height="2" fill="#ff0000"/><rect x="14" y="11" width="2" height="2" fill="#ff0000"/><rect x="22" y="11" width="2" height="2" fill="#ff0000"/><rect x="32" y="2" width="2" height="3" fill="#004000"/><rect x="26" y="5" width="14" height="2" fill="#004000"/><rect x="28" y="7" width="10" height="2" fill="#004000"/><rect x="30" y="9" width="6" height="2" fill="#004000"/><rect x="28" y="11" width="10" height="2" fill="#004000"/><rect x="28" y="13" width="2" height="2" fill="#004000"/><rect x="36" y="13" width="2" height="2" fill="#004000"/><rect x="30" y="0" width="2" height="3" fill="#ff7f10"/><rect x="24" y="3" width="14" height="2" fill="#ff7f10"/><rect x="26" y="5" width="10" height="2" fill="#ff7f10"/><rect x="28" y="7" width="6" height="2" fill="#ff7f10"/><rect x="26" y="9" width="10" height="2" fill="#ff7f10"/><rect x="26" y="11" width="2" height="2" fill="#ff7f10"/><rect x="34" y="11" width="2" height="2" fill="#ff7f10"/></svg></div>
<div class="sk" style="left:521px;top:367px;width:57px;height:21px;background:#fff;"></div>
<span class="t" style="left:524px;transform-origin:0 0;transform:scaleX(0.97);top:371.69px;font:bold 11px/11px 'DejaVu Sans Condensed','DejaVu Sans',sans-serif;color:#000080;">800K</span>
<div class="sk" style="left:353px;top:367px;width:25px;height:21px;background:#fff;"></div>
<span class="t" style="left:356.3px;transform-origin:0 0;transform:scaleX(0.94);top:371.69px;font:bold 11px/11px 'DejaVu Sans Condensed','DejaVu Sans',sans-serif;color:#109810;">13</span>
<div class="sk" style="left:377px;top:367px;width:25px;height:21px;background:#fff;"></div>
<span class="t" style="left:380.3px;transform-origin:0 0;transform:scaleX(0.94);top:371.69px;font:bold 11px/11px 'DejaVu Sans Condensed','DejaVu Sans',sans-serif;color:#000;">1</span>
<div class="sk" style="left:401px;top:367px;width:25px;height:21px;background:#fff;"></div>
<span class="t" style="left:404.3px;transform-origin:0 0;transform:scaleX(0.94);top:371.69px;font:bold 11px/11px 'DejaVu Sans Condensed','DejaVu Sans',sans-serif;color:#007080;">3</span>
<div class="sk" style="left:425px;top:367px;width:25px;height:21px;background:#fff;"></div>
<span class="t" style="left:428.3px;transform-origin:0 0;transform:scaleX(0.94);top:371.69px;font:bold 11px/11px 'DejaVu Sans Condensed','DejaVu Sans',sans-serif;color:#109810;">13</span>
<div class="sk" style="left:449px;top:367px;width:25px;height:21px;background:#fff;"></div>
<span class="t" style="left:452.3px;transform-origin:0 0;transform:scaleX(0.94);top:371.69px;font:bold 11px/11px 'DejaVu Sans Condensed','DejaVu Sans',sans-serif;color:#109810;">13</span>
<div class="sk" style="left:473px;top:367px;width:25px;height:21px;background:#fff;"></div>
<span class="t" style="left:476.3px;transform-origin:0 0;transform:scaleX(0.94);top:371.69px;font:bold 11px/11px 'DejaVu Sans Condensed','DejaVu Sans',sans-serif;color:#109810;">13</span>
<div class="sk" style="left:497px;top:367px;width:25px;height:21px;background:#fff;"></div>
<span class="t" style="left:500.3px;transform-origin:0 0;transform:scaleX(0.94);top:371.69px;font:bold 11px/11px 'DejaVu Sans Condensed','DejaVu Sans',sans-serif;color:#000;">1</span>
<div class="sk" style="left:308px;top:367px;width:45px;height:21px;background:#fff;"></div>
<div class="" style="left:334px;top:369px;width:17px;height:17px;background:#f0f0f0;"></div>
<div class="rs" style="left:334px;top:369px;width:17px;height:17px;"><svg width="7" height="4" style="position:absolute;left:4px;top:6px" viewBox="0 0 7 4" shape-rendering="crispEdges"><path d="M0 0h7v1h-1v1h-1v1h-1v1h-1v-1h-1v-1h-1v-1h-1z" fill="#000"/></svg></div>
<span class="t" style="left:312.8px;transform-origin:0 0;transform:scaleX(0.84);top:372.32px;font:normal 12.5px/12.5px 'Liberation Sans',sans-serif;color:#000080;width:25px;overflow:hidden;">DEN</span>
<div class="sk" style="left:265px;top:367px;width:45px;height:21px;background:#fff;"></div>
<div class="" style="left:291px;top:369px;width:17px;height:17px;background:#f0f0f0;"></div>
<div class="rs" style="left:291px;top:369px;width:17px;height:17px;"><svg width="7" height="4" style="position:absolute;left:4px;top:6px" viewBox="0 0 7 4" shape-rendering="crispEdges"><path d="M0 0h7v1h-1v1h-1v1h-1v1h-1v-1h-1v-1h-1v-1h-1z" fill="#000"/></svg></div>
<span class="t" style="left:270px;transform-origin:0 0;transform:scaleX(0.84);top:372.32px;font:normal 12.5px/12.5px 'Liberation Sans',sans-serif;color:#000;">LB</span>
<div class="sk" style="left:81px;top:367px;width:185px;height:21px;background:#fff;"></div>
<span class="t" style="left:84px;transform-origin:0 0;transform:scaleX(0.857);top:371.32px;font:normal 12.5px/12.5px 'Liberation Sans',sans-serif;color:#000080;">RIZA DURMISI</span>
<div class="sk" style="left:697px;top:367px;width:57px;height:21px;background:#fff;"></div>
<div class="" style="left:735px;top:369px;width:17px;height:17px;background:#f0f0f0;"></div>
<div class="rs" style="left:735px;top:369px;width:17px;height:17px;"><svg width="7" height="4" style="position:absolute;left:4px;top:6px" viewBox="0 0 7 4" shape-rendering="crispEdges"><path d="M0 0h7v1h-1v1h-1v1h-1v1h-1v-1h-1v-1h-1v-1h-1z" fill="#000"/></svg></div>
<span class="t" style="left:701.7px;transform-origin:0 0;transform:scaleX(0.836);top:372.32px;font:normal 12.5px/12.5px 'Liberation Sans',sans-serif;color:#000080;">800K</span>
<div class="rs" style="left:761px;top:367px;width:17px;height:17px;"></div>
<span class="t" style="left:569.5px;width:400px;text-align:center;transform-origin:50% 0;transform:scaleX(0.84);top:369.32px;font:normal 12.5px/12.5px 'Liberation Sans',sans-serif;color:#000;">V</span>
<div class="sk" style="left:17px;top:391px;width:20px;height:21px;background:#fff;"><svg style="position:absolute;left:1px;top:1px" width="16" height="16" viewBox="0 0 8 8" shape-rendering="crispEdges">
<rect x="2" y="0" width="3" height="1" fill="#000"/><rect x="1" y="1" width="5" height="1" fill="#000"/>
<rect x="0" y="2" width="2" height="1" fill="#000"/><rect x="2" y="2" width="3" height="1" fill="#ff7000"/><rect x="5" y="2" width="2" height="1" fill="#000"/><rect x="7" y="2" width="1" height="3" fill="#202020"/>
<rect x="0" y="3" width="1" height="1" fill="#000"/><rect x="1" y="3" width="5" height="1" fill="#ff7000"/><rect x="2" y="3" width="1" height="1" fill="#fff"/><rect x="4" y="3" width="1" height="1" fill="#a8d0f0"/><rect x="5" y="3" width="1" height="1" fill="#e06000"/><rect x="6" y="3" width="1" height="1" fill="#000"/>
<rect x="1" y="4" width="4" height="1" fill="#ff7000"/><rect x="5" y="4" width="1" height="1" fill="#e06000"/><rect x="6" y="4" width="1" height="2" fill="#202020"/>
<rect x="1" y="5" width="1" height="1" fill="#c04000"/><rect x="2" y="5" width="1" height="1" fill="#ff7000"/><rect x="3" y="5" width="1" height="1" fill="#000"/><rect x="4" y="5" width="1" height="1" fill="#e06000"/><rect x="5" y="5" width="1" height="1" fill="#c04000"/><rect x="7" y="5" width="1" height="1" fill="#202020"/>
<rect x="2" y="6" width="2" height="1" fill="#d05000"/><rect x="4" y="6" width="1" height="1" fill="#c04000"/><rect x="5" y="6" width="2" height="1" fill="#202020"/>
<rect x="3" y="7" width="3" height="1" fill="#1a1a1a"/>
</svg></div>
<div class="sk" style="left:41px;top:391px;width:21px;height:21px;background:#c0c0c0;"></div>
<span class="t" style="left:44.5px;transform-origin:0 0;transform:scaleX(0.84);top:395.32px;font:normal 12.5px/12.5px 'Liberation Sans',sans-serif;color:#000;">9</span>
<div class="sk" style="left:63px;top:391px;width:17px;height:21px;background:#f0f0f0;"></div>
<span class="t" style="left:-128.5px;width:400px;text-align:center;transform-origin:50% 0;transform:scaleX(0.84);top:394.32px;font:normal 12.5px/12.5px 'Liberation Sans',sans-serif;color:#00a000;">9</span>
<div class="sk" style="left:641px;top:391px;width:41px;height:21px;background:#c0c0c0;"></div>
<span class="t" style="left:461.9px;width:400px;text-align:center;transform-origin:50% 0;transform:scaleX(0.847);top:394.32px;font:normal 12.5px/12.5px 'Liberation Sans',sans-serif;color:#800000;">SCP</span>
<div class="sk" style="left:577px;top:391px;width:65px;height:21px;background:#000;"><svg style="position:absolute;left:1px;top:1px" width="61" height="17" viewBox="0 0 61 17" shape-rendering="crispEdges"><rect x="8" y="2" width="2" height="3" fill="#004000"/><rect x="2" y="5" width="14" height="2" fill="#004000"/><rect x="4" y="7" width="10" height="2" fill="#004000"/><rect x="6" y="9" width="6" height="2" fill="#004000"/><rect x="4" y="11" width="10" height="2" fill="#004000"/><rect x="4" y="13" width="2" height="2" fill="#004000"/><rect x="12" y="13" width="2" height="2" fill="#004000"/><rect x="6" y="0" width="2" height="3" fill="#780028"/><rect x="0" y="3" width="14" height="2" fill="#780028"/><rect x="2" y="5" width="10" height="2" fill="#780028"/><rect x="4" y="7" width="6" height="2" fill="#780028"/><rect x="2" y="9" width="10" height="2" fill="#780028"/><rect x="2" y="11" width="2" height="2" fill="#780028"/><rect x="10" y="11" width="2" height="2" fill="#780028"/><rect x="20" y="2" width="2" height="3" fill="#004000"/><rect x="14" y="5" width="14" height="2" fill="#004000"/><rect x="16" y="7" width="10" height="2" fill="#004000"/><rect x="18" y="9" width="6" height="2" fill="#004000"/><rect x="16" y="11" width="10" height="2" fill="#004000"/><rect x="16" y="13" width="2" height="2" fill="#004000"/><rect x="24" y="13" width="2" height="2" fill="#004000"/><rect x="18" y="0" width="2" height="3" fill="#ff0000"/><rect x="12" y="3" width="14" height="2" fill="#ff0000"/><rect x="14" y="5" width="10" height="2" fill="#ff0000"/><rect x="16" y="7" width="6" height="2" fill="#ff0000"/><rect x="14" y="9" width="10" height="2" fill="#ff0000"/><rect x="14" y="11" width="2" height="2" fill="#ff0000"/><rect x="22" y="11" width="2" height="2" fill="#ff0000"/><rect x="32" y="2" width="2" height="3" fill="#004000"/><rect x="26" y="5" width="14" height="2" fill="#004000"/><rect x="28" y="7" width="10" height="2" fill="#004000"/><rect x="30" y="9" width="6" height="2" fill="#004000"/><rect x="28" y="11" width="10" height="2" fill="#004000"/><rect x="28" y="13" width="2" height="2" fill="#004000"/><rect x="36" y="13" width="2" height="2" fill="#004000"/><rect x="30" y="0" width="2" height="3" fill="#ff7f10"/><rect x="24" y="3" width="14" height="2" fill="#ff7f10"/><rect x="26" y="5" width="10" height="2" fill="#ff7f10"/><rect x="28" y="7" width="6" height="2" fill="#ff7f10"/><rect x="26" y="9" width="10" height="2" fill="#ff7f10"/><rect x="26" y="11" width="2" height="2" fill="#ff7f10"/><rect x="34" y="11" width="2" height="2" fill="#ff7f10"/><rect x="44" y="5" width="2" height="2" fill="#004000"/><rect x="40" y="7" width="10" height="2" fill="#004000"/><rect x="42" y="9" width="6" height="2" fill="#004000"/><rect x="42" y="11" width="2" height="2" fill="#004000"/><rect x="46" y="11" width="2" height="2" fill="#004000"/><rect x="42" y="3" width="2" height="2" fill="#ffff00"/><rect x="38" y="5" width="10" height="2" fill="#ffff00"/><rect x="40" y="7" width="6" height="2" fill="#ffff00"/><rect x="40" y="9" width="2" height="2" fill="#ffff00"/><rect x="44" y="9" width="2" height="2" fill="#ffff00"/></svg></div>
<div class="sk" style="left:521px;top:391px;width:57px;height:21px;background:#c0c0c0;"></div>
<span class="t" style="left:524px;transform-origin:0 0;transform:scaleX(0.97);top:395.69px;font:bold 11px/11px 'DejaVu Sans Condensed','DejaVu Sans',sans-serif;color:#000080;">1.3M</span>
<div class="sk" style="left:353px;top:391px;width:25px;height:21px;background:#c0c0c0;"></div>
<span class="t" style="left:356.3px;transform-origin:0 0;transform:scaleX(0.94);top:395.69px;font:bold 11px/11px 'DejaVu Sans Condensed','DejaVu Sans',sans-serif;color:#a00000;">6</span>
<div class="sk" style="left:377px;top:391px;width:25px;height:21px;background:#c0c0c0;"></div>
<span class="t" style="left:380.3px;transform-origin:0 0;transform:scaleX(0.94);top:395.69px;font:bold 11px/11px 'DejaVu Sans Condensed','DejaVu Sans',sans-serif;color:#109810;">12</span>
<div class="sk" style="left:401px;top:391px;width:25px;height:21px;background:#c0c0c0;"></div>
<span class="t" style="left:404.3px;transform-origin:0 0;transform:scaleX(0.94);top:395.69px;font:bold 11px/11px 'DejaVu Sans Condensed','DejaVu Sans',sans-serif;color:#000;">2</span>
<div class="sk" style="left:425px;top:391px;width:25px;height:21px;background:#c0c0c0;"></div>
<span class="t" style="left:428.3px;transform-origin:0 0;transform:scaleX(0.94);top:395.69px;font:bold 11px/11px 'DejaVu Sans Condensed','DejaVu Sans',sans-serif;color:#000;">1</span>
<div class="sk" style="left:449px;top:391px;width:25px;height:21px;background:#c0c0c0;"></div>
<span class="t" style="left:452.3px;transform-origin:0 0;transform:scaleX(0.94);top:395.69px;font:bold 11px/11px 'DejaVu Sans Condensed','DejaVu Sans',sans-serif;color:#ff0818;">14</span>
<div class="sk" style="left:473px;top:391px;width:25px;height:21px;background:#c0c0c0;"></div>
<span class="t" style="left:476.3px;transform-origin:0 0;transform:scaleX(0.94);top:395.69px;font:bold 11px/11px 'DejaVu Sans Condensed','DejaVu Sans',sans-serif;color:#ff0818;">15</span>
<div class="sk" style="left:497px;top:391px;width:25px;height:21px;background:#c0c0c0;"></div>
<span class="t" style="left:500.3px;transform-origin:0 0;transform:scaleX(0.94);top:395.69px;font:bold 11px/11px 'DejaVu Sans Condensed','DejaVu Sans',sans-serif;color:#109810;">12</span>
<div class="sk" style="left:308px;top:391px;width:45px;height:21px;background:#c0c0c0;"></div>
<div class="" style="left:334px;top:393px;width:17px;height:17px;background:#f0f0f0;"></div>
<div class="rs" style="left:334px;top:393px;width:17px;height:17px;"><svg width="7" height="4" style="position:absolute;left:4px;top:6px" viewBox="0 0 7 4" shape-rendering="crispEdges"><path d="M0 0h7v1h-1v1h-1v1h-1v1h-1v-1h-1v-1h-1v-1h-1z" fill="#000"/></svg></div>
<span class="t" style="left:312.8px;transform-origin:0 0;transform:scaleX(0.84);top:396.32px;font:normal 12.5px/12.5px 'Liberation Sans',sans-serif;color:#000080;width:25px;overflow:hidden;">ESP</span>
<div class="sk" style="left:265px;top:391px;width:45px;height:21px;background:#c0c0c0;"></div>
<div class="" style="left:291px;top:393px;width:17px;height:17px;background:#f0f0f0;"></div>
<div class="rs" style="left:291px;top:393px;width:17px;height:17px;"><svg width="7" height="4" style="position:absolute;left:4px;top:6px" viewBox="0 0 7 4" shape-rendering="crispEdges"><path d="M0 0h7v1h-1v1h-1v1h-1v1h-1v-1h-1v-1h-1v-1h-1z" fill="#000"/></svg></div>
<span class="t" style="left:270px;transform-origin:0 0;transform:scaleX(0.84);top:396.32px;font:normal 12.5px/12.5px 'Liberation Sans',sans-serif;color:#000;">LW</span>
<div class="sk" style="left:81px;top:391px;width:185px;height:21px;background:#c0c0c0;"></div>
<span class="t" style="left:84px;transform-origin:0 0;transform:scaleX(0.857);top:395.32px;font:normal 12.5px/12.5px 'Liberation Sans',sans-serif;color:#000080;">CRISTIAN TELLO</span>
<div class="sk" style="left:697px;top:391px;width:57px;height:21px;background:#c0c0c0;"></div>
<div class="" style="left:735px;top:393px;width:17px;height:17px;background:#f0f0f0;"></div>
<div class="rs" style="left:735px;top:393px;width:17px;height:17px;"><svg width="7" height="4" style="position:absolute;left:4px;top:6px" viewBox="0 0 7 4" shape-rendering="crispEdges"><path d="M0 0h7v1h-1v1h-1v1h-1v1h-1v-1h-1v-1h-1v-1h-1z" fill="#000"/></svg></div>
<span class="t" style="left:701.7px;transform-origin:0 0;transform:scaleX(0.836);top:396.32px;font:normal 12.5px/12.5px 'Liberation Sans',sans-serif;color:#000080;">1.3M</span>
<div class="rs" style="left:761px;top:391px;width:17px;height:17px;"></div>
<span class="t" style="left:569.5px;width:400px;text-align:center;transform-origin:50% 0;transform:scaleX(0.84);top:393.32px;font:normal 12.5px/12.5px 'Liberation Sans',sans-serif;color:#000;">V</span>
<div class="sk" style="left:17px;top:415px;width:20px;height:21px;background:#fff;"><svg style="position:absolute;left:1px;top:1px" width="16" height="16" viewBox="0 0 8 8" shape-rendering="crispEdges">
<rect x="2" y="0" width="3" height="1" fill="#000"/><rect x="1" y="1" width="5" height="1" fill="#000"/>
<rect x="0" y="2" width="2" height="1" fill="#000"/><rect x="2" y="2" width="3" height="1" fill="#ff7000"/><rect x="5" y="2" width="2" height="1" fill="#000"/><rect x="7" y="2" width="1" height="3" fill="#202020"/>
<rect x="0" y="3" width="1" height="1" fill="#000"/><rect x="1" y="3" width="5" height="1" fill="#ff7000"/><rect x="2" y="3" width="1" height="1" fill="#fff"/><rect x="4" y="3" width="1" height="1" fill="#a8d0f0"/><rect x="5" y="3" width="1" height="1" fill="#e06000"/><rect x="6" y="3" width="1" height="1" fill="#000"/>
<rect x="1" y="4" width="4" height="1" fill="#ff7000"/><rect x="5" y="4" width="1" height="1" fill="#e06000"/><rect x="6" y="4" width="1" height="2" fill="#202020"/>
<rect x="1" y="5" width="1" height="1" fill="#c04000"/><rect x="2" y="5" width="1" height="1" fill="#ff7000"/><rect x="3" y="5" width="1" height="1" fill="#000"/><rect x="4" y="5" width="1" height="1" fill="#e06000"/><rect x="5" y="5" width="1" height="1" fill="#c04000"/><rect x="7" y="5" width="1" height="1" fill="#202020"/>
<rect x="2" y="6" width="2" height="1" fill="#d05000"/><rect x="4" y="6" width="1" height="1" fill="#c04000"/><rect x="5" y="6" width="2" height="1" fill="#202020"/>
<rect x="3" y="7" width="3" height="1" fill="#1a1a1a"/>
</svg></div>
<div class="sk" style="left:41px;top:415px;width:21px;height:21px;background:#fff;"></div>
<span class="t" style="left:44.5px;transform-origin:0 0;transform:scaleX(0.84);top:419.32px;font:normal 12.5px/12.5px 'Liberation Sans',sans-serif;color:#000;">7</span>
<div class="sk" style="left:63px;top:415px;width:17px;height:21px;background:#f0f0f0;"></div>
<span class="t" style="left:-128.5px;width:400px;text-align:center;transform-origin:50% 0;transform:scaleX(0.84);top:418.32px;font:normal 12.5px/12.5px 'Liberation Sans',sans-serif;color:#00a000;">10</span>
<div class="sk" style="left:641px;top:415px;width:41px;height:21px;background:#fff;"></div>
<span class="t" style="left:461.9px;width:400px;text-align:center;transform-origin:50% 0;transform:scaleX(0.847);top:418.32px;font:normal 12.5px/12.5px 'Liberation Sans',sans-serif;color:#800000;">VFP</span>
<div class="sk" style="left:577px;top:415px;width:65px;height:21px;background:#000;"><svg style="position:absolute;left:1px;top:1px" width="61" height="17" viewBox="0 0 61 17" shape-rendering="crispEdges"><rect x="8" y="2" width="2" height="3" fill="#004000"/><rect x="2" y="5" width="14" height="2" fill="#004000"/><rect x="4" y="7" width="10" height="2" fill="#004000"/><rect x="6" y="9" width="6" height="2" fill="#004000"/><rect x="4" y="11" width="10" height="2" fill="#004000"/><rect x="4" y="13" width="2" height="2" fill="#004000"/><rect x="12" y="13" width="2" height="2" fill="#004000"/><rect x="6" y="0" width="2" height="3" fill="#780028"/><rect x="0" y="3" width="14" height="2" fill="#780028"/><rect x="2" y="5" width="10" height="2" fill="#780028"/><rect x="4" y="7" width="6" height="2" fill="#780028"/><rect x="2" y="9" width="10" height="2" fill="#780028"/><rect x="2" y="11" width="2" height="2" fill="#780028"/><rect x="10" y="11" width="2" height="2" fill="#780028"/><rect x="20" y="2" width="2" height="3" fill="#004000"/><rect x="14" y="5" width="14" height="2" fill="#004000"/><rect x="16" y="7" width="10" height="2" fill="#004000"/><rect x="18" y="9" width="6" height="2" fill="#004000"/><rect x="16" y="11" width="10" height="2" fill="#004000"/><rect x="16" y="13" width="2" height="2" fill="#004000"/><rect x="24" y="13" width="2" height="2" fill="#004000"/><rect x="18" y="0" width="2" height="3" fill="#ff0000"/><rect x="12" y="3" width="14" height="2" fill="#ff0000"/><rect x="14" y="5" width="10" height="2" fill="#ff0000"/><rect x="16" y="7" width="6" height="2" fill="#ff0000"/><rect x="14" y="9" width="10" height="2" fill="#ff0000"/><rect x="14" y="11" width="2" height="2" fill="#ff0000"/><rect x="22" y="11" width="2" height="2" fill="#ff0000"/><rect x="32" y="2" width="2" height="3" fill="#004000"/><rect x="26" y="5" width="14" height="2" fill="#004000"/><rect x="28" y="7" width="10" height="2" fill="#004000"/><rect x="30" y="9" width="6" height="2" fill="#004000"/><rect x="28" y="11" width="10" height="2" fill="#004000"/><rect x="28" y="13" width="2" height="2" fill="#004000"/><rect x="36" y="13" width="2" height="2" fill="#004000"/><rect x="30" y="0" width="2" height="3" fill="#ff7f10"/><rect x="24" y="3" width="14" height="2" fill="#ff7f10"/><rect x="26" y="5" width="10" height="2" fill="#ff7f10"/><rect x="28" y="7" width="6" height="2" fill="#ff7f10"/><rect x="26" y="9" width="10" height="2" fill="#ff7f10"/><rect x="26" y="11" width="2" height="2" fill="#ff7f10"/><rect x="34" y="11" width="2" height="2" fill="#ff7f10"/><rect x="44" y="5" width="2" height="2" fill="#004000"/><rect x="40" y="7" width="10" height="2" fill="#004000"/><rect x="42" y="9" width="6" height="2" fill="#004000"/><rect x="42" y="11" width="2" height="2" fill="#004000"/><rect x="46" y="11" width="2" height="2" fill="#004000"/><rect x="42" y="3" width="2" height="2" fill="#ffff00"/><rect x="38" y="5" width="10" height="2" fill="#ffff00"/><rect x="40" y="7" width="6" height="2" fill="#ffff00"/><rect x="40" y="9" width="2" height="2" fill="#ffff00"/><rect x="44" y="9" width="2" height="2" fill="#ffff00"/></svg></div>
<div class="sk" style="left:521px;top:415px;width:57px;height:21px;background:#fff;"></div>
<span class="t" style="left:524px;transform-origin:0 0;transform:scaleX(0.97);top:419.69px;font:bold 11px/11px 'DejaVu Sans Condensed','DejaVu Sans',sans-serif;color:#000080;">1.3M</span>
<div class="sk" style="left:353px;top:415px;width:25px;height:21px;background:#fff;"></div>
<span class="t" style="left:356.3px;transform-origin:0 0;transform:scaleX(0.94);top:419.69px;font:bold 11px/11px 'DejaVu Sans Condensed','DejaVu Sans',sans-serif;color:#109810;">13</span>
<div class="sk" style="left:377px;top:415px;width:25px;height:21px;background:#fff;"></div>
<span class="t" style="left:380.3px;transform-origin:0 0;transform:scaleX(0.94);top:419.69px;font:bold 11px/11px 'DejaVu Sans Condensed','DejaVu Sans',sans-serif;color:#ff0818;">14</span>
<div class="sk" style="left:401px;top:415px;width:25px;height:21px;background:#fff;"></div>
<span class="t" style="left:404.3px;transform-origin:0 0;transform:scaleX(0.94);top:419.69px;font:bold 11px/11px 'DejaVu Sans Condensed','DejaVu Sans',sans-serif;color:#000;">1</span>
<div class="sk" style="left:425px;top:415px;width:25px;height:21px;background:#fff;"></div>
<span class="t" style="left:428.3px;transform-origin:0 0;transform:scaleX(0.94);top:419.69px;font:bold 11px/11px 'DejaVu Sans Condensed','DejaVu Sans',sans-serif;color:#000;">2</span>
<div class="sk" style="left:449px;top:415px;width:25px;height:21px;background:#fff;"></div>
<span class="t" style="left:452.3px;transform-origin:0 0;transform:scaleX(0.94);top:419.69px;font:bold 11px/11px 'DejaVu Sans Condensed','DejaVu Sans',sans-serif;color:#109810;">13</span>
<div class="sk" style="left:473px;top:415px;width:25px;height:21px;background:#fff;"></div>
<span class="t" style="left:476.3px;transform-origin:0 0;transform:scaleX(0.94);top:419.69px;font:bold 11px/11px 'DejaVu Sans Condensed','DejaVu Sans',sans-serif;color:#007080;">5</span>
<div class="sk" style="left:497px;top:415px;width:25px;height:21px;background:#fff;"></div>
<span class="t" style="left:500.3px;transform-origin:0 0;transform:scaleX(0.94);top:419.69px;font:bold 11px/11px 'DejaVu Sans Condensed','DejaVu Sans',sans-serif;color:#ff0818;">14</span>
<div class="sk" style="left:308px;top:415px;width:45px;height:21px;background:#fff;"></div>
<div class="" style="left:334px;top:417px;width:17px;height:17px;background:#f0f0f0;"></div>
<div class="rs" style="left:334px;top:417px;width:17px;height:17px;"><svg width="7" height="4" style="position:absolute;left:4px;top:6px" viewBox="0 0 7 4" shape-rendering="crispEdges"><path d="M0 0h7v1h-1v1h-1v1h-1v1h-1v-1h-1v-1h-1v-1h-1z" fill="#000"/></svg></div>
<span class="t" style="left:312.8px;transform-origin:0 0;transform:scaleX(0.84);top:420.32px;font:normal 12.5px/12.5px 'Liberation Sans',sans-serif;color:#000080;width:25px;overflow:hidden;">ALG</span>
<div class="sk" style="left:265px;top:415px;width:45px;height:21px;background:#fff;"></div>
<div class="" style="left:291px;top:417px;width:17px;height:17px;background:#f0f0f0;"></div>
<div class="rs" style="left:291px;top:417px;width:17px;height:17px;"><svg width="7" height="4" style="position:absolute;left:4px;top:6px" viewBox="0 0 7 4" shape-rendering="crispEdges"><path d="M0 0h7v1h-1v1h-1v1h-1v1h-1v-1h-1v-1h-1v-1h-1z" fill="#000"/></svg></div>
<span class="t" style="left:270px;transform-origin:0 0;transform:scaleX(0.84);top:420.32px;font:normal 12.5px/12.5px 'Liberation Sans',sans-serif;color:#000;">M</span>
<div class="sk" style="left:81px;top:415px;width:185px;height:21px;background:#fff;"></div>
<span class="t" style="left:84px;transform-origin:0 0;transform:scaleX(0.857);top:419.32px;font:normal 12.5px/12.5px 'Liberation Sans',sans-serif;color:#000080;">RYAD BOUDEBOUZ</span>
<div class="sk" style="left:697px;top:415px;width:57px;height:21px;background:#fff;"></div>
<div class="" style="left:735px;top:417px;width:17px;height:17px;background:#f0f0f0;"></div>
<div class="rs" style="left:735px;top:417px;width:17px;height:17px;"><svg width="7" height="4" style="position:absolute;left:4px;top:6px" viewBox="0 0 7 4" shape-rendering="crispEdges"><path d="M0 0h7v1h-1v1h-1v1h-1v1h-1v-1h-1v-1h-1v-1h-1z" fill="#000"/></svg></div>
<span class="t" style="left:701.7px;transform-origin:0 0;transform:scaleX(0.836);top:420.32px;font:normal 12.5px/12.5px 'Liberation Sans',sans-serif;color:#000080;">1.3M</span>
<div class="rs" style="left:761px;top:415px;width:17px;height:17px;"></div>
<span class="t" style="left:569.5px;width:400px;text-align:center;transform-origin:50% 0;transform:scaleX(0.84);top:417.32px;font:normal 12.5px/12.5px 'Liberation Sans',sans-serif;color:#000;">V</span>
<div class="sk" style="left:17px;top:439px;width:20px;height:21px;background:#fff;"><svg style="position:absolute;left:1px;top:1px" width="16" height="16" viewBox="0 0 8 8" shape-rendering="crispEdges">
<rect x="2" y="0" width="3" height="1" fill="#000"/><rect x="1" y="1" width="5" height="1" fill="#000"/>
<rect x="0" y="2" width="2" height="1" fill="#000"/><rect x="2" y="2" width="3" height="1" fill="#ff7000"/><rect x="5" y="2" width="2" height="1" fill="#000"/><rect x="7" y="2" width="1" height="3" fill="#202020"/>
<rect x="0" y="3" width="1" height="1" fill="#000"/><rect x="1" y="3" width="5" height="1" fill="#ff7000"/><rect x="2" y="3" width="1" height="1" fill="#fff"/><rect x="4" y="3" width="1" height="1" fill="#a8d0f0"/><rect x="5" y="3" width="1" height="1" fill="#e06000"/><rect x="6" y="3" width="1" height="1" fill="#000"/>
<rect x="1" y="4" width="4" height="1" fill="#ff7000"/><rect x="5" y="4" width="1" height="1" fill="#e06000"/><rect x="6" y="4" width="1" height="2" fill="#202020"/>
<rect x="1" y="5" width="1" height="1" fill="#c04000"/><rect x="2" y="5" width="1" height="1" fill="#ff7000"/><rect x="3" y="5" width="1" height="1" fill="#000"/><rect x="4" y="5" width="1" height="1" fill="#e06000"/><rect x="5" y="5" width="1" height="1" fill="#c04000"/><rect x="7" y="5" width="1" height="1" fill="#202020"/>
<rect x="2" y="6" width="2" height="1" fill="#d05000"/><rect x="4" y="6" width="1" height="1" fill="#c04000"/><rect x="5" y="6" width="2" height="1" fill="#202020"/>
<rect x="3" y="7" width="3" height="1" fill="#1a1a1a"/>
</svg></div>
<div class="sk" style="left:41px;top:439px;width:21px;height:21px;background:#c0c0c0;"></div>
<span class="t" style="left:44.5px;transform-origin:0 0;transform:scaleX(0.84);top:443.32px;font:normal 12.5px/12.5px 'Liberation Sans',sans-serif;color:#000;">8</span>
<div class="sk" style="left:63px;top:439px;width:17px;height:21px;background:#f0f0f0;"></div>
<span class="t" style="left:-128.5px;width:400px;text-align:center;transform-origin:50% 0;transform:scaleX(0.84);top:442.32px;font:normal 12.5px/12.5px 'Liberation Sans',sans-serif;color:#00a000;">6</span>
<div class="sk" style="left:641px;top:439px;width:41px;height:21px;background:#c0c0c0;"></div>
<span class="t" style="left:461.9px;width:400px;text-align:center;transform-origin:50% 0;transform:scaleX(0.847);top:442.32px;font:normal 12.5px/12.5px 'Liberation Sans',sans-serif;color:#800000;">CSP</span>
<div class="sk" style="left:577px;top:439px;width:65px;height:21px;background:#000;"><svg style="position:absolute;left:1px;top:1px" width="61" height="17" viewBox="0 0 61 17" shape-rendering="crispEdges"><rect x="8" y="2" width="2" height="3" fill="#004000"/><rect x="2" y="5" width="14" height="2" fill="#004000"/><rect x="4" y="7" width="10" height="2" fill="#004000"/><rect x="6" y="9" width="6" height="2" fill="#004000"/><rect x="4" y="11" width="10" height="2" fill="#004000"/><rect x="4" y="13" width="2" height="2" fill="#004000"/><rect x="12" y="13" width="2" height="2" fill="#004000"/><rect x="6" y="0" width="2" height="3" fill="#780028"/><rect x="0" y="3" width="14" height="2" fill="#780028"/><rect x="2" y="5" width="10" height="2" fill="#780028"/><rect x="4" y="7" width="6" height="2" fill="#780028"/><rect x="2" y="9" width="10" height="2" fill="#780028"/><rect x="2" y="11" width="2" height="2" fill="#780028"/><rect x="10" y="11" width="2" height="2" fill="#780028"/><rect x="20" y="2" width="2" height="3" fill="#004000"/><rect x="14" y="5" width="14" height="2" fill="#004000"/><rect x="16" y="7" width="10" height="2" fill="#004000"/><rect x="18" y="9" width="6" height="2" fill="#004000"/><rect x="16" y="11" width="10" height="2" fill="#004000"/><rect x="16" y="13" width="2" height="2" fill="#004000"/><rect x="24" y="13" width="2" height="2" fill="#004000"/><rect x="18" y="0" width="2" height="3" fill="#ff0000"/><rect x="12" y="3" width="14" height="2" fill="#ff0000"/><rect x="14" y="5" width="10" height="2" fill="#ff0000"/><rect x="16" y="7" width="6" height="2" fill="#ff0000"/><rect x="14" y="9" width="10" height="2" fill="#ff0000"/><rect x="14" y="11" width="2" height="2" fill="#ff0000"/><rect x="22" y="11" width="2" height="2" fill="#ff0000"/><rect x="32" y="5" width="2" height="2" fill="#004000"/><rect x="28" y="7" width="10" height="2" fill="#004000"/><rect x="30" y="9" width="6" height="2" fill="#004000"/><rect x="30" y="11" width="2" height="2" fill="#004000"/><rect x="34" y="11" width="2" height="2" fill="#004000"/><rect x="30" y="3" width="2" height="2" fill="#ff7f10"/><rect x="26" y="5" width="10" height="2" fill="#ff7f10"/><rect x="28" y="7" width="6" height="2" fill="#ff7f10"/><rect x="28" y="9" width="2" height="2" fill="#ff7f10"/><rect x="32" y="9" width="2" height="2" fill="#ff7f10"/></svg></div>
<div class="sk" style="left:521px;top:439px;width:57px;height:21px;background:#c0c0c0;"></div>
<span class="t" style="left:524px;transform-origin:0 0;transform:scaleX(0.97);top:443.69px;font:bold 11px/11px 'DejaVu Sans Condensed','DejaVu Sans',sans-serif;color:#000080;">350K</span>
<div class="sk" style="left:353px;top:439px;width:25px;height:21px;background:#c0c0c0;"></div>
<span class="t" style="left:356.3px;transform-origin:0 0;transform:scaleX(0.94);top:443.69px;font:bold 11px/11px 'DejaVu Sans Condensed','DejaVu Sans',sans-serif;color:#007080;">5</span>
<div class="sk" style="left:377px;top:439px;width:25px;height:21px;background:#c0c0c0;"></div>
<span class="t" style="left:380.3px;transform-origin:0 0;transform:scaleX(0.94);top:443.69px;font:bold 11px/11px 'DejaVu Sans Condensed','DejaVu Sans',sans-serif;color:#006000;">9</span>
<div class="sk" style="left:401px;top:439px;width:25px;height:21px;background:#c0c0c0;"></div>
<span class="t" style="left:404.3px;transform-origin:0 0;transform:scaleX(0.94);top:443.69px;font:bold 11px/11px 'DejaVu Sans Condensed','DejaVu Sans',sans-serif;color:#000;">0</span>
<div class="sk" style="left:425px;top:439px;width:25px;height:21px;background:#c0c0c0;"></div>
<span class="t" style="left:428.3px;transform-origin:0 0;transform:scaleX(0.94);top:443.69px;font:bold 11px/11px 'DejaVu Sans Condensed','DejaVu Sans',sans-serif;color:#000;">0</span>
<div class="sk" style="left:449px;top:439px;width:25px;height:21px;background:#c0c0c0;"></div>
<span class="t" style="left:452.3px;transform-origin:0 0;transform:scaleX(0.94);top:443.69px;font:bold 11px/11px 'DejaVu Sans Condensed','DejaVu Sans',sans-serif;color:#ff0818;">14</span>
<div class="sk" style="left:473px;top:439px;width:25px;height:21px;background:#c0c0c0;"></div>
<span class="t" style="left:476.3px;transform-origin:0 0;transform:scaleX(0.94);top:443.69px;font:bold 11px/11px 'DejaVu Sans Condensed','DejaVu Sans',sans-serif;color:#109810;">13</span>
<div class="sk" style="left:497px;top:439px;width:25px;height:21px;background:#c0c0c0;"></div>
<span class="t" style="left:500.3px;transform-origin:0 0;transform:scaleX(0.94);top:443.69px;font:bold 11px/11px 'DejaVu Sans Condensed','DejaVu Sans',sans-serif;color:#004858;">8</span>
<div class="sk" style="left:308px;top:439px;width:45px;height:21px;background:#c0c0c0;"></div>
<div class="" style="left:334px;top:441px;width:17px;height:17px;background:#f0f0f0;"></div>
<div class="rs" style="left:334px;top:441px;width:17px;height:17px;"><svg width="7" height="4" style="position:absolute;left:4px;top:6px" viewBox="0 0 7 4" shape-rendering="crispEdges"><path d="M0 0h7v1h-1v1h-1v1h-1v1h-1v-1h-1v-1h-1v-1h-1z" fill="#000"/></svg></div>
<span class="t" style="left:312.8px;transform-origin:0 0;transform:scaleX(0.84);top:444.32px;font:normal 12.5px/12.5px 'Liberation Sans',sans-serif;color:#000080;width:25px;overflow:hidden;">ESP</span>
<div class="sk" style="left:265px;top:439px;width:45px;height:21px;background:#c0c0c0;"></div>
<div class="" style="left:291px;top:441px;width:17px;height:17px;background:#f0f0f0;"></div>
<div class="rs" style="left:291px;top:441px;width:17px;height:17px;"><svg width="7" height="4" style="position:absolute;left:4px;top:6px" viewBox="0 0 7 4" shape-rendering="crispEdges"><path d="M0 0h7v1h-1v1h-1v1h-1v1h-1v-1h-1v-1h-1v-1h-1z" fill="#000"/></svg></div>
<span class="t" style="left:270px;transform-origin:0 0;transform:scaleX(0.84);top:444.32px;font:normal 12.5px/12.5px 'Liberation Sans',sans-serif;color:#000;">RW</span>
<div class="sk" style="left:81px;top:439px;width:185px;height:21px;background:#c0c0c0;"></div>
<span class="t" style="left:84px;transform-origin:0 0;transform:scaleX(0.857);top:443.32px;font:normal 12.5px/12.5px 'Liberation Sans',sans-serif;color:#000080;">JOAQUIN</span>
<div class="sk" style="left:697px;top:439px;width:57px;height:21px;background:#c0c0c0;"></div>
<div class="" style="left:735px;top:441px;width:17px;height:17px;background:#f0f0f0;"></div>
<div class="rs" style="left:735px;top:441px;width:17px;height:17px;"><svg width="7" height="4" style="position:absolute;left:4px;top:6px" viewBox="0 0 7 4" shape-rendering="crispEdges"><path d="M0 0h7v1h-1v1h-1v1h-1v1h-1v-1h-1v-1h-1v-1h-1z" fill="#000"/></svg></div>
<span class="t" style="left:701.7px;transform-origin:0 0;transform:scaleX(0.836);top:444.32px;font:normal 12.5px/12.5px 'Liberation Sans',sans-serif;color:#000080;">350K</span>
<div class="rs" style="left:761px;top:439px;width:17px;height:17px;"></div>
<span class="t" style="left:569.5px;width:400px;text-align:center;transform-origin:50% 0;transform:scaleX(0.84);top:441.32px;font:normal 12.5px/12.5px 'Liberation Sans',sans-serif;color:#000;">V</span>
<div class="sk" style="left:17px;top:463px;width:20px;height:21px;background:#fff;"><svg style="position:absolute;left:1px;top:1px" width="16" height="16" viewBox="0 0 8 8" shape-rendering="crispEdges">
<rect x="2" y="0" width="3" height="1" fill="#000"/><rect x="1" y="1" width="5" height="1" fill="#000"/>
<rect x="0" y="2" width="2" height="1" fill="#000"/><rect x="2" y="2" width="3" height="1" fill="#ff7000"/><rect x="5" y="2" width="2" height="1" fill="#000"/><rect x="7" y="2" width="1" height="3" fill="#202020"/>
<rect x="0" y="3" width="1" height="1" fill="#000"/><rect x="1" y="3" width="5" height="1" fill="#ff7000"/><rect x="2" y="3" width="1" height="1" fill="#fff"/><rect x="4" y="3" width="1" height="1" fill="#a8d0f0"/><rect x="5" y="3" width="1" height="1" fill="#e06000"/><rect x="6" y="3" width="1" height="1" fill="#000"/>
<rect x="1" y="4" width="4" height="1" fill="#ff7000"/><rect x="5" y="4" width="1" height="1" fill="#e06000"/><rect x="6" y="4" width="1" height="2" fill="#202020"/>
<rect x="1" y="5" width="1" height="1" fill="#c04000"/><rect x="2" y="5" width="1" height="1" fill="#ff7000"/><rect x="3" y="5" width="1" height="1" fill="#000"/><rect x="4" y="5" width="1" height="1" fill="#e06000"/><rect x="5" y="5" width="1" height="1" fill="#c04000"/><rect x="7" y="5" width="1" height="1" fill="#202020"/>
<rect x="2" y="6" width="2" height="1" fill="#d05000"/><rect x="4" y="6" width="1" height="1" fill="#c04000"/><rect x="5" y="6" width="2" height="1" fill="#202020"/>
<rect x="3" y="7" width="3" height="1" fill="#1a1a1a"/>
</svg></div>
<div class="sk" style="left:41px;top:463px;width:21px;height:21px;background:#fff;"></div>
<span class="t" style="left:44.5px;transform-origin:0 0;transform:scaleX(0.84);top:467.32px;font:normal 12.5px/12.5px 'Liberation Sans',sans-serif;color:#000;">6</span>
<div class="sk" style="left:63px;top:463px;width:17px;height:21px;background:#f0f0f0;"></div>
<span class="t" style="left:-128.5px;width:400px;text-align:center;transform-origin:50% 0;transform:scaleX(0.84);top:466.32px;font:normal 12.5px/12.5px 'Liberation Sans',sans-serif;color:#00a000;">7</span>
<div class="sk" style="left:641px;top:463px;width:41px;height:21px;background:#fff;"></div>
<span class="t" style="left:461.9px;width:400px;text-align:center;transform-origin:50% 0;transform:scaleX(0.847);top:466.32px;font:normal 12.5px/12.5px 'Liberation Sans',sans-serif;color:#800000;">PCT</span>
<div class="sk" style="left:577px;top:463px;width:65px;height:21px;background:#000;"><svg style="position:absolute;left:1px;top:1px" width="61" height="17" viewBox="0 0 61 17" shape-rendering="crispEdges"><rect x="8" y="2" width="2" height="3" fill="#004000"/><rect x="2" y="5" width="14" height="2" fill="#004000"/><rect x="4" y="7" width="10" height="2" fill="#004000"/><rect x="6" y="9" width="6" height="2" fill="#004000"/><rect x="4" y="11" width="10" height="2" fill="#004000"/><rect x="4" y="13" width="2" height="2" fill="#004000"/><rect x="12" y="13" width="2" height="2" fill="#004000"/><rect x="6" y="0" width="2" height="3" fill="#780028"/><rect x="0" y="3" width="14" height="2" fill="#780028"/><rect x="2" y="5" width="10" height="2" fill="#780028"/><rect x="4" y="7" width="6" height="2" fill="#780028"/><rect x="2" y="9" width="10" height="2" fill="#780028"/><rect x="2" y="11" width="2" height="2" fill="#780028"/><rect x="10" y="11" width="2" height="2" fill="#780028"/><rect x="20" y="2" width="2" height="3" fill="#004000"/><rect x="14" y="5" width="14" height="2" fill="#004000"/><rect x="16" y="7" width="10" height="2" fill="#004000"/><rect x="18" y="9" width="6" height="2" fill="#004000"/><rect x="16" y="11" width="10" height="2" fill="#004000"/><rect x="16" y="13" width="2" height="2" fill="#004000"/><rect x="24" y="13" width="2" height="2" fill="#004000"/><rect x="18" y="0" width="2" height="3" fill="#ff0000"/><rect x="12" y="3" width="14" height="2" fill="#ff0000"/><rect x="14" y="5" width="10" height="2" fill="#ff0000"/><rect x="16" y="7" width="6" height="2" fill="#ff0000"/><rect x="14" y="9" width="10" height="2" fill="#ff0000"/><rect x="14" y="11" width="2" height="2" fill="#ff0000"/><rect x="22" y="11" width="2" height="2" fill="#ff0000"/><rect x="32" y="2" width="2" height="3" fill="#004000"/><rect x="26" y="5" width="14" height="2" fill="#004000"/><rect x="28" y="7" width="10" height="2" fill="#004000"/><rect x="30" y="9" width="6" height="2" fill="#004000"/><rect x="28" y="11" width="10" height="2" fill="#004000"/><rect x="28" y="13" width="2" height="2" fill="#004000"/><rect x="36" y="13" width="2" height="2" fill="#004000"/><rect x="30" y="0" width="2" height="3" fill="#ff7f10"/><rect x="24" y="3" width="14" height="2" fill="#ff7f10"/><rect x="26" y="5" width="10" height="2" fill="#ff7f10"/><rect x="28" y="7" width="6" height="2" fill="#ff7f10"/><rect x="26" y="9" width="10" height="2" fill="#ff7f10"/><rect x="26" y="11" width="2" height="2" fill="#ff7f10"/><rect x="34" y="11" width="2" height="2" fill="#ff7f10"/></svg></div>
<div class="sk" style="left:521px;top:463px;width:57px;height:21px;background:#fff;"></div>
<span class="t" style="left:524px;transform-origin:0 0;transform:scaleX(0.97);top:467.69px;font:bold 11px/11px 'DejaVu Sans Condensed','DejaVu Sans',sans-serif;color:#000080;">1M</span>
<div class="sk" style="left:353px;top:463px;width:25px;height:21px;background:#fff;"></div>
<span class="t" style="left:356.3px;transform-origin:0 0;transform:scaleX(0.94);top:467.69px;font:bold 11px/11px 'DejaVu Sans Condensed','DejaVu Sans',sans-serif;color:#ff0818;">14</span>
<div class="sk" style="left:377px;top:463px;width:25px;height:21px;background:#fff;"></div>
<span class="t" style="left:380.3px;transform-origin:0 0;transform:scaleX(0.94);top:467.69px;font:bold 11px/11px 'DejaVu Sans Condensed','DejaVu Sans',sans-serif;color:#000;">2</span>
<div class="sk" style="left:401px;top:463px;width:25px;height:21px;background:#fff;"></div>
<span class="t" style="left:404.3px;transform-origin:0 0;transform:scaleX(0.94);top:467.69px;font:bold 11px/11px 'DejaVu Sans Condensed','DejaVu Sans',sans-serif;color:#007080;">3</span>
<div class="sk" style="left:425px;top:463px;width:25px;height:21px;background:#fff;"></div>
<span class="t" style="left:428.3px;transform-origin:0 0;transform:scaleX(0.94);top:467.69px;font:bold 11px/11px 'DejaVu Sans Condensed','DejaVu Sans',sans-serif;color:#ff0818;">14</span>
<div class="sk" style="left:449px;top:463px;width:25px;height:21px;background:#fff;"></div>
<span class="t" style="left:452.3px;transform-origin:0 0;transform:scaleX(0.94);top:467.69px;font:bold 11px/11px 'DejaVu Sans Condensed','DejaVu Sans',sans-serif;color:#ff0818;">14</span>
<div class="sk" style="left:473px;top:463px;width:25px;height:21px;background:#fff;"></div>
<span class="t" style="left:476.3px;transform-origin:0 0;transform:scaleX(0.94);top:467.69px;font:bold 11px/11px 'DejaVu Sans Condensed','DejaVu Sans',sans-serif;color:#007080;">3</span>
<div class="sk" style="left:497px;top:463px;width:25px;height:21px;background:#fff;"></div>
<span class="t" style="left:500.3px;transform-origin:0 0;transform:scaleX(0.94);top:467.69px;font:bold 11px/11px 'DejaVu Sans Condensed','DejaVu Sans',sans-serif;color:#000;">2</span>
<div class="sk" style="left:308px;top:463px;width:45px;height:21px;background:#fff;"></div>
<div class="" style="left:334px;top:465px;width:17px;height:17px;background:#f0f0f0;"></div>
<div class="rs" style="left:334px;top:465px;width:17px;height:17px;"><svg width="7" height="4" style="position:absolute;left:4px;top:6px" viewBox="0 0 7 4" shape-rendering="crispEdges"><path d="M0 0h7v1h-1v1h-1v1h-1v1h-1v-1h-1v-1h-1v-1h-1z" fill="#000"/></svg></div>
<span class="t" style="left:312.8px;transform-origin:0 0;transform:scaleX(0.84);top:468.32px;font:normal 12.5px/12.5px 'Liberation Sans',sans-serif;color:#000080;width:25px;overflow:hidden;">ESP</span>
<div class="sk" style="left:265px;top:463px;width:45px;height:21px;background:#fff;"></div>
<div class="" style="left:291px;top:465px;width:17px;height:17px;background:#f0f0f0;"></div>
<div class="rs" style="left:291px;top:465px;width:17px;height:17px;"><svg width="7" height="4" style="position:absolute;left:4px;top:6px" viewBox="0 0 7 4" shape-rendering="crispEdges"><path d="M0 0h7v1h-1v1h-1v1h-1v1h-1v-1h-1v-1h-1v-1h-1z" fill="#000"/></svg></div>
<span class="t" style="left:270px;transform-origin:0 0;transform:scaleX(0.84);top:468.32px;font:normal 12.5px/12.5px 'Liberation Sans',sans-serif;color:#000;">M</span>
<div class="sk" style="left:81px;top:463px;width:185px;height:21px;background:#fff;"></div>
<span class="t" style="left:84px;transform-origin:0 0;transform:scaleX(0.857);top:467.32px;font:normal 12.5px/12.5px 'Liberation Sans',sans-serif;color:#000080;">JAVI GARCIA</span>
<div class="sk" style="left:697px;top:463px;width:57px;height:21px;background:#fff;"></div>
<div class="" style="left:735px;top:465px;width:17px;height:17px;background:#f0f0f0;"></div>
<div class="rs" style="left:735px;top:465px;width:17px;height:17px;"><svg width="7" height="4" style="position:absolute;left:4px;top:6px" viewBox="0 0 7 4" shape-rendering="crispEdges"><path d="M0 0h7v1h-1v1h-1v1h-1v1h-1v-1h-1v-1h-1v-1h-1z" fill="#000"/></svg></div>
<span class="t" style="left:701.7px;transform-origin:0 0;transform:scaleX(0.836);top:468.32px;font:normal 12.5px/12.5px 'Liberation Sans',sans-serif;color:#000080;">1M</span>
<div class="rs" style="left:761px;top:463px;width:17px;height:17px;"></div>
<span class="t" style="left:569.5px;width:400px;text-align:center;transform-origin:50% 0;transform:scaleX(0.84);top:465.32px;font:normal 12.5px/12.5px 'Liberation Sans',sans-serif;color:#000;">V</span>
<div class="sk" style="left:17px;top:487px;width:20px;height:21px;background:#fff;"><svg style="position:absolute;left:1px;top:1px" width="16" height="16" viewBox="0 0 8 8" shape-rendering="crispEdges">
<rect x="2" y="0" width="3" height="1" fill="#000"/><rect x="1" y="1" width="5" height="1" fill="#000"/>
<rect x="0" y="2" width="2" height="1" fill="#000"/><rect x="2" y="2" width="3" height="1" fill="#ff7000"/><rect x="5" y="2" width="2" height="1" fill="#000"/><rect x="7" y="2" width="1" height="3" fill="#202020"/>
<rect x="0" y="3" width="1" height="1" fill="#000"/><rect x="1" y="3" width="5" height="1" fill="#ff7000"/><rect x="2" y="3" width="1" height="1" fill="#fff"/><rect x="4" y="3" width="1" height="1" fill="#a8d0f0"/><rect x="5" y="3" width="1" height="1" fill="#e06000"/><rect x="6" y="3" width="1" height="1" fill="#000"/>
<rect x="1" y="4" width="4" height="1" fill="#ff7000"/><rect x="5" y="4" width="1" height="1" fill="#e06000"/><rect x="6" y="4" width="1" height="2" fill="#202020"/>
<rect x="1" y="5" width="1" height="1" fill="#c04000"/><rect x="2" y="5" width="1" height="1" fill="#ff7000"/><rect x="3" y="5" width="1" height="1" fill="#000"/><rect x="4" y="5" width="1" height="1" fill="#e06000"/><rect x="5" y="5" width="1" height="1" fill="#c04000"/><rect x="7" y="5" width="1" height="1" fill="#202020"/>
<rect x="2" y="6" width="2" height="1" fill="#d05000"/><rect x="4" y="6" width="1" height="1" fill="#c04000"/><rect x="5" y="6" width="2" height="1" fill="#202020"/>
<rect x="3" y="7" width="3" height="1" fill="#1a1a1a"/>
</svg></div>
<div class="sk" style="left:41px;top:487px;width:21px;height:21px;background:#c0c0c0;"></div>
<span class="t" style="left:44.5px;transform-origin:0 0;transform:scaleX(0.84);top:491.32px;font:normal 12.5px/12.5px 'Liberation Sans',sans-serif;color:#000;">10</span>
<div class="sk" style="left:63px;top:487px;width:17px;height:21px;background:#f0f0f0;"></div>
<span class="t" style="left:-128.5px;width:400px;text-align:center;transform-origin:50% 0;transform:scaleX(0.84);top:490.32px;font:normal 12.5px/12.5px 'Liberation Sans',sans-serif;color:#00a000;">11</span>
<div class="sk" style="left:641px;top:487px;width:41px;height:21px;background:#c0c0c0;"></div>
<span class="t" style="left:461.9px;width:400px;text-align:center;transform-origin:50% 0;transform:scaleX(0.847);top:490.32px;font:normal 12.5px/12.5px 'Liberation Sans',sans-serif;color:#800000;">SFV</span>
<div class="sk" style="left:577px;top:487px;width:65px;height:21px;background:#000;"><svg style="position:absolute;left:1px;top:1px" width="61" height="17" viewBox="0 0 61 17" shape-rendering="crispEdges"><rect x="8" y="2" width="2" height="3" fill="#004000"/><rect x="2" y="5" width="14" height="2" fill="#004000"/><rect x="4" y="7" width="10" height="2" fill="#004000"/><rect x="6" y="9" width="6" height="2" fill="#004000"/><rect x="4" y="11" width="10" height="2" fill="#004000"/><rect x="4" y="13" width="2" height="2" fill="#004000"/><rect x="12" y="13" width="2" height="2" fill="#004000"/><rect x="6" y="0" width="2" height="3" fill="#780028"/><rect x="0" y="3" width="14" height="2" fill="#780028"/><rect x="2" y="5" width="10" height="2" fill="#780028"/><rect x="4" y="7" width="6" height="2" fill="#780028"/><rect x="2" y="9" width="10" height="2" fill="#780028"/><rect x="2" y="11" width="2" height="2" fill="#780028"/><rect x="10" y="11" width="2" height="2" fill="#780028"/><rect x="20" y="2" width="2" height="3" fill="#004000"/><rect x="14" y="5" width="14" height="2" fill="#004000"/><rect x="16" y="7" width="10" height="2" fill="#004000"/><rect x="18" y="9" width="6" height="2" fill="#004000"/><rect x="16" y="11" width="10" height="2" fill="#004000"/><rect x="16" y="13" width="2" height="2" fill="#004000"/><rect x="24" y="13" width="2" height="2" fill="#004000"/><rect x="18" y="0" width="2" height="3" fill="#ff0000"/><rect x="12" y="3" width="14" height="2" fill="#ff0000"/><rect x="14" y="5" width="10" height="2" fill="#ff0000"/><rect x="16" y="7" width="6" height="2" fill="#ff0000"/><rect x="14" y="9" width="10" height="2" fill="#ff0000"/><rect x="14" y="11" width="2" height="2" fill="#ff0000"/><rect x="22" y="11" width="2" height="2" fill="#ff0000"/><rect x="32" y="2" width="2" height="3" fill="#004000"/><rect x="26" y="5" width="14" height="2" fill="#004000"/><rect x="28" y="7" width="10" height="2" fill="#004000"/><rect x="30" y="9" width="6" height="2" fill="#004000"/><rect x="28" y="11" width="10" height="2" fill="#004000"/><rect x="28" y="13" width="2" height="2" fill="#004000"/><rect x="36" y="13" width="2" height="2" fill="#004000"/><rect x="30" y="0" width="2" height="3" fill="#ff7f10"/><rect x="24" y="3" width="14" height="2" fill="#ff7f10"/><rect x="26" y="5" width="10" height="2" fill="#ff7f10"/><rect x="28" y="7" width="6" height="2" fill="#ff7f10"/><rect x="26" y="9" width="10" height="2" fill="#ff7f10"/><rect x="26" y="11" width="2" height="2" fill="#ff7f10"/><rect x="34" y="11" width="2" height="2" fill="#ff7f10"/><rect x="44" y="5" width="2" height="2" fill="#004000"/><rect x="40" y="7" width="10" height="2" fill="#004000"/><rect x="42" y="9" width="6" height="2" fill="#004000"/><rect x="42" y="11" width="2" height="2" fill="#004000"/><rect x="46" y="11" width="2" height="2" fill="#004000"/><rect x="42" y="3" width="2" height="2" fill="#ffff00"/><rect x="38" y="5" width="10" height="2" fill="#ffff00"/><rect x="40" y="7" width="6" height="2" fill="#ffff00"/><rect x="40" y="9" width="2" height="2" fill="#ffff00"/><rect x="44" y="9" width="2" height="2" fill="#ffff00"/></svg></div>
<div class="sk" style="left:521px;top:487px;width:57px;height:21px;background:#c0c0c0;"></div>
<span class="t" style="left:524px;transform-origin:0 0;transform:scaleX(0.97);top:491.69px;font:bold 11px/11px 'DejaVu Sans Condensed','DejaVu Sans',sans-serif;color:#000080;">1.1M</span>
<div class="sk" style="left:353px;top:487px;width:25px;height:21px;background:#c0c0c0;"></div>
<span class="t" style="left:356.3px;transform-origin:0 0;transform:scaleX(0.94);top:491.69px;font:bold 11px/11px 'DejaVu Sans Condensed','DejaVu Sans',sans-serif;color:#007080;">3</span>
<div class="sk" style="left:377px;top:487px;width:25px;height:21px;background:#c0c0c0;"></div>
<span class="t" style="left:380.3px;transform-origin:0 0;transform:scaleX(0.94);top:491.69px;font:bold 11px/11px 'DejaVu Sans Condensed','DejaVu Sans',sans-serif;color:#109810;">13</span>
<div class="sk" style="left:401px;top:487px;width:25px;height:21px;background:#c0c0c0;"></div>
<span class="t" style="left:404.3px;transform-origin:0 0;transform:scaleX(0.94);top:491.69px;font:bold 11px/11px 'DejaVu Sans Condensed','DejaVu Sans',sans-serif;color:#109810;">12</span>
<div class="sk" style="left:425px;top:487px;width:25px;height:21px;background:#c0c0c0;"></div>
<span class="t" style="left:428.3px;transform-origin:0 0;transform:scaleX(0.94);top:491.69px;font:bold 11px/11px 'DejaVu Sans Condensed','DejaVu Sans',sans-serif;color:#000;">1</span>
<div class="sk" style="left:449px;top:487px;width:25px;height:21px;background:#c0c0c0;"></div>
<span class="t" style="left:452.3px;transform-origin:0 0;transform:scaleX(0.94);top:491.69px;font:bold 11px/11px 'DejaVu Sans Condensed','DejaVu Sans',sans-serif;color:#007080;">4</span>
<div class="sk" style="left:473px;top:487px;width:25px;height:21px;background:#c0c0c0;"></div>
<span class="t" style="left:476.3px;transform-origin:0 0;transform:scaleX(0.94);top:491.69px;font:bold 11px/11px 'DejaVu Sans Condensed','DejaVu Sans',sans-serif;color:#ff0818;">15</span>
<div class="sk" style="left:497px;top:487px;width:25px;height:21px;background:#c0c0c0;"></div>
<span class="t" style="left:500.3px;transform-origin:0 0;transform:scaleX(0.94);top:491.69px;font:bold 11px/11px 'DejaVu Sans Condensed','DejaVu Sans',sans-serif;color:#109810;">13</span>
<div class="sk" style="left:308px;top:487px;width:45px;height:21px;background:#c0c0c0;"></div>
<div class="" style="left:334px;top:489px;width:17px;height:17px;background:#f0f0f0;"></div>
<div class="rs" style="left:334px;top:489px;width:17px;height:17px;"><svg width="7" height="4" style="position:absolute;left:4px;top:6px" viewBox="0 0 7 4" shape-rendering="crispEdges"><path d="M0 0h7v1h-1v1h-1v1h-1v1h-1v-1h-1v-1h-1v-1h-1z" fill="#000"/></svg></div>
<span class="t" style="left:312.8px;transform-origin:0 0;transform:scaleX(0.84);top:492.32px;font:normal 12.5px/12.5px 'Liberation Sans',sans-serif;color:#000080;width:25px;overflow:hidden;">ESP</span>
<div class="sk" style="left:265px;top:487px;width:45px;height:21px;background:#c0c0c0;"></div>
<div class="" style="left:291px;top:489px;width:17px;height:17px;background:#f0f0f0;"></div>
<div class="rs" style="left:291px;top:489px;width:17px;height:17px;"><svg width="7" height="4" style="position:absolute;left:4px;top:6px" viewBox="0 0 7 4" shape-rendering="crispEdges"><path d="M0 0h7v1h-1v1h-1v1h-1v1h-1v-1h-1v-1h-1v-1h-1z" fill="#000"/></svg></div>
<span class="t" style="left:270px;transform-origin:0 0;transform:scaleX(0.84);top:492.32px;font:normal 12.5px/12.5px 'Liberation Sans',sans-serif;color:#000;">A</span>
<div class="sk" style="left:81px;top:487px;width:185px;height:21px;background:#c0c0c0;"></div>
<span class="t" style="left:84px;transform-origin:0 0;transform:scaleX(0.857);top:491.32px;font:normal 12.5px/12.5px 'Liberation Sans',sans-serif;color:#000080;">SERGIO LEON</span>
<div class="sk" style="left:697px;top:487px;width:57px;height:21px;background:#c0c0c0;"></div>
<div class="" style="left:735px;top:489px;width:17px;height:17px;background:#f0f0f0;"></div>
<div class="rs" style="left:735px;top:489px;width:17px;height:17px;"><svg width="7" height="4" style="position:absolute;left:4px;top:6px" viewBox="0 0 7 4" shape-rendering="crispEdges"><path d="M0 0h7v1h-1v1h-1v1h-1v1h-1v-1h-1v-1h-1v-1h-1z" fill="#000"/></svg></div>
<span class="t" style="left:701.7px;transform-origin:0 0;transform:scaleX(0.836);top:492.32px;font:normal 12.5px/12.5px 'Liberation Sans',sans-serif;color:#000080;">1.1M</span>
<div class="rs" style="left:761px;top:487px;width:17px;height:17px;"></div>
<span class="t" style="left:569.5px;width:400px;text-align:center;transform-origin:50% 0;transform:scaleX(0.84);top:489.32px;font:normal 12.5px/12.5px 'Liberation Sans',sans-serif;color:#000;">V</span>
<div class="sk" style="left:17px;top:511px;width:20px;height:21px;background:#fff;"><svg style="position:absolute;left:1px;top:1px" width="16" height="16" viewBox="0 0 8 8" shape-rendering="crispEdges">
<rect x="2" y="0" width="3" height="1" fill="#000"/><rect x="1" y="1" width="5" height="1" fill="#000"/>
<rect x="0" y="2" width="2" height="1" fill="#000"/><rect x="2" y="2" width="3" height="1" fill="#ff7000"/><rect x="5" y="2" width="2" height="1" fill="#000"/><rect x="7" y="2" width="1" height="3" fill="#202020"/>
<rect x="0" y="3" width="1" height="1" fill="#000"/><rect x="1" y="3" width="5" height="1" fill="#ff7000"/><rect x="2" y="3" width="1" height="1" fill="#fff"/><rect x="4" y="3" width="1" height="1" fill="#a8d0f0"/><rect x="5" y="3" width="1" height="1" fill="#e06000"/><rect x="6" y="3" width="1" height="1" fill="#000"/>
<rect x="1" y="4" width="4" height="1" fill="#ff7000"/><rect x="5" y="4" width="1" height="1" fill="#e06000"/><rect x="6" y="4" width="1" height="2" fill="#202020"/>
<rect x="1" y="5" width="1" height="1" fill="#c04000"/><rect x="2" y="5" width="1" height="1" fill="#ff7000"/><rect x="3" y="5" width="1" height="1" fill="#000"/><rect x="4" y="5" width="1" height="1" fill="#e06000"/><rect x="5" y="5" width="1" height="1" fill="#c04000"/><rect x="7" y="5" width="1" height="1" fill="#202020"/>
<rect x="2" y="6" width="2" height="1" fill="#d05000"/><rect x="4" y="6" width="1" height="1" fill="#c04000"/><rect x="5" y="6" width="2" height="1" fill="#202020"/>
<rect x="3" y="7" width="3" height="1" fill="#1a1a1a"/>
</svg></div>
<div class="sk" style="left:41px;top:511px;width:21px;height:21px;background:#fff;"></div>
<span class="t" style="left:44.5px;transform-origin:0 0;transform:scaleX(0.84);top:515.32px;font:normal 12.5px/12.5px 'Liberation Sans',sans-serif;color:#000;">11</span>
<div class="sk" style="left:63px;top:511px;width:17px;height:21px;background:#f0f0f0;"></div>
<span class="t" style="left:-128.5px;width:400px;text-align:center;transform-origin:50% 0;transform:scaleX(0.84);top:514.32px;font:normal 12.5px/12.5px 'Liberation Sans',sans-serif;color:#c00000;">16</span>
<div class="sk" style="left:641px;top:511px;width:41px;height:21px;background:#fff;"></div>
<span class="t" style="left:461.9px;width:400px;text-align:center;transform-origin:50% 0;transform:scaleX(0.847);top:514.32px;font:normal 12.5px/12.5px 'Liberation Sans',sans-serif;color:#800000;">FSV</span>
<div class="sk" style="left:577px;top:511px;width:65px;height:21px;background:#000;"><svg style="position:absolute;left:1px;top:1px" width="61" height="17" viewBox="0 0 61 17" shape-rendering="crispEdges"><rect x="8" y="2" width="2" height="3" fill="#004000"/><rect x="2" y="5" width="14" height="2" fill="#004000"/><rect x="4" y="7" width="10" height="2" fill="#004000"/><rect x="6" y="9" width="6" height="2" fill="#004000"/><rect x="4" y="11" width="10" height="2" fill="#004000"/><rect x="4" y="13" width="2" height="2" fill="#004000"/><rect x="12" y="13" width="2" height="2" fill="#004000"/><rect x="6" y="0" width="2" height="3" fill="#780028"/><rect x="0" y="3" width="14" height="2" fill="#780028"/><rect x="2" y="5" width="10" height="2" fill="#780028"/><rect x="4" y="7" width="6" height="2" fill="#780028"/><rect x="2" y="9" width="10" height="2" fill="#780028"/><rect x="2" y="11" width="2" height="2" fill="#780028"/><rect x="10" y="11" width="2" height="2" fill="#780028"/><rect x="20" y="2" width="2" height="3" fill="#004000"/><rect x="14" y="5" width="14" height="2" fill="#004000"/><rect x="16" y="7" width="10" height="2" fill="#004000"/><rect x="18" y="9" width="6" height="2" fill="#004000"/><rect x="16" y="11" width="10" height="2" fill="#004000"/><rect x="16" y="13" width="2" height="2" fill="#004000"/><rect x="24" y="13" width="2" height="2" fill="#004000"/><rect x="18" y="0" width="2" height="3" fill="#ff0000"/><rect x="12" y="3" width="14" height="2" fill="#ff0000"/><rect x="14" y="5" width="10" height="2" fill="#ff0000"/><rect x="16" y="7" width="6" height="2" fill="#ff0000"/><rect x="14" y="9" width="10" height="2" fill="#ff0000"/><rect x="14" y="11" width="2" height="2" fill="#ff0000"/><rect x="22" y="11" width="2" height="2" fill="#ff0000"/><rect x="32" y="2" width="2" height="3" fill="#004000"/><rect x="26" y="5" width="14" height="2" fill="#004000"/><rect x="28" y="7" width="10" height="2" fill="#004000"/><rect x="30" y="9" width="6" height="2" fill="#004000"/><rect x="28" y="11" width="10" height="2" fill="#004000"/><rect x="28" y="13" width="2" height="2" fill="#004000"/><rect x="36" y="13" width="2" height="2" fill="#004000"/><rect x="30" y="0" width="2" height="3" fill="#ff7f10"/><rect x="24" y="3" width="14" height="2" fill="#ff7f10"/><rect x="26" y="5" width="10" height="2" fill="#ff7f10"/><rect x="28" y="7" width="6" height="2" fill="#ff7f10"/><rect x="26" y="9" width="10" height="2" fill="#ff7f10"/><rect x="26" y="11" width="2" height="2" fill="#ff7f10"/><rect x="34" y="11" width="2" height="2" fill="#ff7f10"/><rect x="44" y="5" width="2" height="2" fill="#004000"/><rect x="40" y="7" width="10" height="2" fill="#004000"/><rect x="42" y="9" width="6" height="2" fill="#004000"/><rect x="42" y="11" width="2" height="2" fill="#004000"/><rect x="46" y="11" width="2" height="2" fill="#004000"/><rect x="42" y="3" width="2" height="2" fill="#ffff00"/><rect x="38" y="5" width="10" height="2" fill="#ffff00"/><rect x="40" y="7" width="6" height="2" fill="#ffff00"/><rect x="40" y="9" width="2" height="2" fill="#ffff00"/><rect x="44" y="9" width="2" height="2" fill="#ffff00"/></svg></div>
<div class="sk" style="left:521px;top:511px;width:57px;height:21px;background:#fff;"></div>
<span class="t" style="left:524px;transform-origin:0 0;transform:scaleX(0.97);top:515.69px;font:bold 11px/11px 'DejaVu Sans Condensed','DejaVu Sans',sans-serif;color:#000080;">1.5M</span>
<div class="sk" style="left:353px;top:511px;width:25px;height:21px;background:#fff;"></div>
<span class="t" style="left:356.3px;transform-origin:0 0;transform:scaleX(0.94);top:515.69px;font:bold 11px/11px 'DejaVu Sans Condensed','DejaVu Sans',sans-serif;color:#000;">2</span>
<div class="sk" style="left:377px;top:511px;width:25px;height:21px;background:#fff;"></div>
<span class="t" style="left:380.3px;transform-origin:0 0;transform:scaleX(0.94);top:515.69px;font:bold 11px/11px 'DejaVu Sans Condensed','DejaVu Sans',sans-serif;color:#ff0818;">14</span>
<div class="sk" style="left:401px;top:511px;width:25px;height:21px;background:#fff;"></div>
<span class="t" style="left:404.3px;transform-origin:0 0;transform:scaleX(0.94);top:515.69px;font:bold 11px/11px 'DejaVu Sans Condensed','DejaVu Sans',sans-serif;color:#109810;">13</span>
<div class="sk" style="left:425px;top:511px;width:25px;height:21px;background:#fff;"></div>
<span class="t" style="left:428.3px;transform-origin:0 0;transform:scaleX(0.94);top:515.69px;font:bold 11px/11px 'DejaVu Sans Condensed','DejaVu Sans',sans-serif;color:#000;">2</span>
<div class="sk" style="left:449px;top:511px;width:25px;height:21px;background:#fff;"></div>
<span class="t" style="left:452.3px;transform-origin:0 0;transform:scaleX(0.94);top:515.69px;font:bold 11px/11px 'DejaVu Sans Condensed','DejaVu Sans',sans-serif;color:#007080;">4</span>
<div class="sk" style="left:473px;top:511px;width:25px;height:21px;background:#fff;"></div>
<span class="t" style="left:476.3px;transform-origin:0 0;transform:scaleX(0.94);top:515.69px;font:bold 11px/11px 'DejaVu Sans Condensed','DejaVu Sans',sans-serif;color:#ff0818;">14</span>
<div class="sk" style="left:497px;top:511px;width:25px;height:21px;background:#fff;"></div>
<span class="t" style="left:500.3px;transform-origin:0 0;transform:scaleX(0.94);top:515.69px;font:bold 11px/11px 'DejaVu Sans Condensed','DejaVu Sans',sans-serif;color:#ff0818;">14</span>
<div class="sk" style="left:308px;top:511px;width:45px;height:21px;background:#fff;"></div>
<div class="" style="left:334px;top:513px;width:17px;height:17px;background:#f0f0f0;"></div>
<div class="rs" style="left:334px;top:513px;width:17px;height:17px;"><svg width="7" height="4" style="position:absolute;left:4px;top:6px" viewBox="0 0 7 4" shape-rendering="crispEdges"><path d="M0 0h7v1h-1v1h-1v1h-1v1h-1v-1h-1v-1h-1v-1h-1z" fill="#000"/></svg></div>
<span class="t" style="left:312.8px;transform-origin:0 0;transform:scaleX(0.84);top:516.32px;font:normal 12.5px/12.5px 'Liberation Sans',sans-serif;color:#000080;width:25px;overflow:hidden;">PAR</span>
<div class="sk" style="left:265px;top:511px;width:45px;height:21px;background:#fff;"></div>
<div class="" style="left:291px;top:513px;width:17px;height:17px;background:#f0f0f0;"></div>
<div class="rs" style="left:291px;top:513px;width:17px;height:17px;"><svg width="7" height="4" style="position:absolute;left:4px;top:6px" viewBox="0 0 7 4" shape-rendering="crispEdges"><path d="M0 0h7v1h-1v1h-1v1h-1v1h-1v-1h-1v-1h-1v-1h-1z" fill="#000"/></svg></div>
<span class="t" style="left:270px;transform-origin:0 0;transform:scaleX(0.84);top:516.32px;font:normal 12.5px/12.5px 'Liberation Sans',sans-serif;color:#000;">A</span>
<div class="sk" style="left:81px;top:511px;width:185px;height:21px;background:#fff;"></div>
<span class="t" style="left:84px;transform-origin:0 0;transform:scaleX(0.857);top:515.32px;font:normal 12.5px/12.5px 'Liberation Sans',sans-serif;color:#000080;">ANTONIO SANABRIA</span>
<div class="sk" style="left:697px;top:511px;width:57px;height:21px;background:#fff;"></div>
<div class="" style="left:735px;top:513px;width:17px;height:17px;background:#f0f0f0;"></div>
<div class="rs" style="left:735px;top:513px;width:17px;height:17px;"><svg width="7" height="4" style="position:absolute;left:4px;top:6px" viewBox="0 0 7 4" shape-rendering="crispEdges"><path d="M0 0h7v1h-1v1h-1v1h-1v1h-1v-1h-1v-1h-1v-1h-1z" fill="#000"/></svg></div>
<span class="t" style="left:701.7px;transform-origin:0 0;transform:scaleX(0.836);top:516.32px;font:normal 12.5px/12.5px 'Liberation Sans',sans-serif;color:#000080;">1.5M</span>
<div class="rs" style="left:761px;top:511px;width:17px;height:17px;"></div>
<span class="t" style="left:569.5px;width:400px;text-align:center;transform-origin:50% 0;transform:scaleX(0.84);top:513.32px;font:normal 12.5px/12.5px 'Liberation Sans',sans-serif;color:#000;">V</span>
<div class="sk" style="left:17px;top:535px;width:20px;height:21px;background:#fff;"><svg style="position:absolute;left:1px;top:1px" width="16" height="16" viewBox="0 0 8 8" shape-rendering="crispEdges">
<rect x="2" y="0" width="3" height="1" fill="#000"/><rect x="1" y="1" width="5" height="1" fill="#000"/>
<rect x="0" y="2" width="2" height="1" fill="#000"/><rect x="2" y="2" width="3" height="1" fill="#ff7000"/><rect x="5" y="2" width="2" height="1" fill="#000"/><rect x="7" y="2" width="1" height="3" fill="#202020"/>
<rect x="0" y="3" width="1" height="1" fill="#000"/><rect x="1" y="3" width="5" height="1" fill="#ff7000"/><rect x="2" y="3" width="1" height="1" fill="#fff"/><rect x="4" y="3" width="1" height="1" fill="#a8d0f0"/><rect x="5" y="3" width="1" height="1" fill="#e06000"/><rect x="6" y="3" width="1" height="1" fill="#000"/>
<rect x="1" y="4" width="4" height="1" fill="#ff7000"/><rect x="5" y="4" width="1" height="1" fill="#e06000"/><rect x="6" y="4" width="1" height="2" fill="#202020"/>
<rect x="1" y="5" width="1" height="1" fill="#c04000"/><rect x="2" y="5" width="1" height="1" fill="#ff7000"/><rect x="3" y="5" width="1" height="1" fill="#000"/><rect x="4" y="5" width="1" height="1" fill="#e06000"/><rect x="5" y="5" width="1" height="1" fill="#c04000"/><rect x="7" y="5" width="1" height="1" fill="#202020"/>
<rect x="2" y="6" width="2" height="1" fill="#d05000"/><rect x="4" y="6" width="1" height="1" fill="#c04000"/><rect x="5" y="6" width="2" height="1" fill="#202020"/>
<rect x="3" y="7" width="3" height="1" fill="#1a1a1a"/>
</svg></div>
<div class="sk" style="left:41px;top:535px;width:21px;height:21px;background:#c0c0c0;"></div>
<span class="t" style="left:44.5px;transform-origin:0 0;transform:scaleX(0.84);top:539.32px;font:normal 12.5px/12.5px 'Liberation Sans',sans-serif;color:#000;">13</span>
<div class="sk" style="left:63px;top:535px;width:17px;height:21px;background:#f0f0f0;"></div>
<span class="t" style="left:-128.5px;width:400px;text-align:center;transform-origin:50% 0;transform:scaleX(0.84);top:538.32px;font:normal 12.5px/12.5px 'Liberation Sans',sans-serif;color:#00a000;">4</span>
<div class="sk" style="left:641px;top:535px;width:41px;height:21px;background:#c0c0c0;"></div>
<span class="t" style="left:461.9px;width:400px;text-align:center;transform-origin:50% 0;transform:scaleX(0.847);top:538.32px;font:normal 12.5px/12.5px 'Liberation Sans',sans-serif;color:#800000;">HTS</span>
<div class="sk" style="left:577px;top:535px;width:65px;height:21px;background:#000;"><svg style="position:absolute;left:1px;top:1px" width="61" height="17" viewBox="0 0 61 17" shape-rendering="crispEdges"><rect x="8" y="2" width="2" height="3" fill="#004000"/><rect x="2" y="5" width="14" height="2" fill="#004000"/><rect x="4" y="7" width="10" height="2" fill="#004000"/><rect x="6" y="9" width="6" height="2" fill="#004000"/><rect x="4" y="11" width="10" height="2" fill="#004000"/><rect x="4" y="13" width="2" height="2" fill="#004000"/><rect x="12" y="13" width="2" height="2" fill="#004000"/><rect x="6" y="0" width="2" height="3" fill="#780028"/><rect x="0" y="3" width="14" height="2" fill="#780028"/><rect x="2" y="5" width="10" height="2" fill="#780028"/><rect x="4" y="7" width="6" height="2" fill="#780028"/><rect x="2" y="9" width="10" height="2" fill="#780028"/><rect x="2" y="11" width="2" height="2" fill="#780028"/><rect x="10" y="11" width="2" height="2" fill="#780028"/><rect x="20" y="2" width="2" height="3" fill="#004000"/><rect x="14" y="5" width="14" height="2" fill="#004000"/><rect x="16" y="7" width="10" height="2" fill="#004000"/><rect x="18" y="9" width="6" height="2" fill="#004000"/><rect x="16" y="11" width="10" height="2" fill="#004000"/><rect x="16" y="13" width="2" height="2" fill="#004000"/><rect x="24" y="13" width="2" height="2" fill="#004000"/><rect x="18" y="0" width="2" height="3" fill="#ff0000"/><rect x="12" y="3" width="14" height="2" fill="#ff0000"/><rect x="14" y="5" width="10" height="2" fill="#ff0000"/><rect x="16" y="7" width="6" height="2" fill="#ff0000"/><rect x="14" y="9" width="10" height="2" fill="#ff0000"/><rect x="14" y="11" width="2" height="2" fill="#ff0000"/><rect x="22" y="11" width="2" height="2" fill="#ff0000"/><rect x="32" y="2" width="2" height="3" fill="#004000"/><rect x="26" y="5" width="14" height="2" fill="#004000"/><rect x="28" y="7" width="10" height="2" fill="#004000"/><rect x="30" y="9" width="6" height="2" fill="#004000"/><rect x="28" y="11" width="10" height="2" fill="#004000"/><rect x="28" y="13" width="2" height="2" fill="#004000"/><rect x="36" y="13" width="2" height="2" fill="#004000"/><rect x="30" y="0" width="2" height="3" fill="#ff7f10"/><rect x="24" y="3" width="14" height="2" fill="#ff7f10"/><rect x="26" y="5" width="10" height="2" fill="#ff7f10"/><rect x="28" y="7" width="6" height="2" fill="#ff7f10"/><rect x="26" y="9" width="10" height="2" fill="#ff7f10"/><rect x="26" y="11" width="2" height="2" fill="#ff7f10"/><rect x="34" y="11" width="2" height="2" fill="#ff7f10"/><rect x="44" y="5" width="2" height="2" fill="#004000"/><rect x="40" y="7" width="10" height="2" fill="#004000"/><rect x="42" y="9" width="6" height="2" fill="#004000"/><rect x="42" y="11" width="2" height="2" fill="#004000"/><rect x="46" y="11" width="2" height="2" fill="#004000"/><rect x="42" y="3" width="2" height="2" fill="#ffff00"/><rect x="38" y="5" width="10" height="2" fill="#ffff00"/><rect x="40" y="7" width="6" height="2" fill="#ffff00"/><rect x="40" y="9" width="2" height="2" fill="#ffff00"/><rect x="44" y="9" width="2" height="2" fill="#ffff00"/></svg></div>
<div class="sk" style="left:521px;top:535px;width:57px;height:21px;background:#c0c0c0;"></div>
<span class="t" style="left:524px;transform-origin:0 0;transform:scaleX(0.97);top:539.69px;font:bold 11px/11px 'DejaVu Sans Condensed','DejaVu Sans',sans-serif;color:#000080;">1.8M</span>
<div class="sk" style="left:353px;top:535px;width:25px;height:21px;background:#c0c0c0;"></div>
<span class="t" style="left:356.3px;transform-origin:0 0;transform:scaleX(0.94);top:539.69px;font:bold 11px/11px 'DejaVu Sans Condensed','DejaVu Sans',sans-serif;color:#109810;">13</span>
<div class="sk" style="left:377px;top:535px;width:25px;height:21px;background:#c0c0c0;"></div>
<span class="t" style="left:380.3px;transform-origin:0 0;transform:scaleX(0.94);top:539.69px;font:bold 11px/11px 'DejaVu Sans Condensed','DejaVu Sans',sans-serif;color:#007080;">4</span>
<div class="sk" style="left:401px;top:535px;width:25px;height:21px;background:#c0c0c0;"></div>
<span class="t" style="left:404.3px;transform-origin:0 0;transform:scaleX(0.94);top:539.69px;font:bold 11px/11px 'DejaVu Sans Condensed','DejaVu Sans',sans-serif;color:#ff0818;">14</span>
<div class="sk" style="left:425px;top:535px;width:25px;height:21px;background:#c0c0c0;"></div>
<span class="t" style="left:428.3px;transform-origin:0 0;transform:scaleX(0.94);top:539.69px;font:bold 11px/11px 'DejaVu Sans Condensed','DejaVu Sans',sans-serif;color:#ff0818;">15</span>
<div class="sk" style="left:449px;top:535px;width:25px;height:21px;background:#c0c0c0;"></div>
<span class="t" style="left:452.3px;transform-origin:0 0;transform:scaleX(0.94);top:539.69px;font:bold 11px/11px 'DejaVu Sans Condensed','DejaVu Sans',sans-serif;color:#007080;">4</span>
<div class="sk" style="left:473px;top:535px;width:25px;height:21px;background:#c0c0c0;"></div>
<span class="t" style="left:476.3px;transform-origin:0 0;transform:scaleX(0.94);top:539.69px;font:bold 11px/11px 'DejaVu Sans Condensed','DejaVu Sans',sans-serif;color:#ff0818;">14</span>
<div class="sk" style="left:497px;top:535px;width:25px;height:21px;background:#c0c0c0;"></div>
<span class="t" style="left:500.3px;transform-origin:0 0;transform:scaleX(0.94);top:539.69px;font:bold 11px/11px 'DejaVu Sans Condensed','DejaVu Sans',sans-serif;color:#000;">1</span>
<div class="sk" style="left:308px;top:535px;width:45px;height:21px;background:#c0c0c0;"></div>
<div class="" style="left:334px;top:537px;width:17px;height:17px;background:#f0f0f0;"></div>
<div class="rs" style="left:334px;top:537px;width:17px;height:17px;"><svg width="7" height="4" style="position:absolute;left:4px;top:6px" viewBox="0 0 7 4" shape-rendering="crispEdges"><path d="M0 0h7v1h-1v1h-1v1h-1v1h-1v-1h-1v-1h-1v-1h-1z" fill="#000"/></svg></div>
<span class="t" style="left:312.8px;transform-origin:0 0;transform:scaleX(0.84);top:540.32px;font:normal 12.5px/12.5px 'Liberation Sans',sans-serif;color:#000080;width:25px;overflow:hidden;">ESP</span>
<div class="sk" style="left:265px;top:535px;width:45px;height:21px;background:#c0c0c0;"></div>
<div class="" style="left:291px;top:537px;width:17px;height:17px;background:#f0f0f0;"></div>
<div class="rs" style="left:291px;top:537px;width:17px;height:17px;"><svg width="7" height="4" style="position:absolute;left:4px;top:6px" viewBox="0 0 7 4" shape-rendering="crispEdges"><path d="M0 0h7v1h-1v1h-1v1h-1v1h-1v-1h-1v-1h-1v-1h-1z" fill="#000"/></svg></div>
<span class="t" style="left:270px;transform-origin:0 0;transform:scaleX(0.84);top:540.32px;font:normal 12.5px/12.5px 'Liberation Sans',sans-serif;color:#000;">D</span>
<div class="sk" style="left:81px;top:535px;width:185px;height:21px;background:#c0c0c0;"></div>
<span class="t" style="left:84px;transform-origin:0 0;transform:scaleX(0.857);top:539.32px;font:normal 12.5px/12.5px 'Liberation Sans',sans-serif;color:#000080;">MARC BARTRA</span>
<div class="sk" style="left:697px;top:535px;width:57px;height:21px;background:#c0c0c0;"></div>
<div class="" style="left:735px;top:537px;width:17px;height:17px;background:#f0f0f0;"></div>
<div class="rs" style="left:735px;top:537px;width:17px;height:17px;"><svg width="7" height="4" style="position:absolute;left:4px;top:6px" viewBox="0 0 7 4" shape-rendering="crispEdges"><path d="M0 0h7v1h-1v1h-1v1h-1v1h-1v-1h-1v-1h-1v-1h-1z" fill="#000"/></svg></div>
<span class="t" style="left:701.7px;transform-origin:0 0;transform:scaleX(0.836);top:540.32px;font:normal 12.5px/12.5px 'Liberation Sans',sans-serif;color:#000080;">1.8M</span>
<div class="rs" style="left:761px;top:535px;width:17px;height:17px;"></div>
<span class="t" style="left:569.5px;width:400px;text-align:center;transform-origin:50% 0;transform:scaleX(0.84);top:537.32px;font:normal 12.5px/12.5px 'Liberation Sans',sans-serif;color:#000;">V</span>
<div class="sk" style="left:17px;top:559px;width:20px;height:21px;background:#fff;"><svg style="position:absolute;left:1px;top:1px" width="16" height="16" viewBox="0 0 8 8" shape-rendering="crispEdges">
<rect x="2" y="0" width="3" height="1" fill="#000"/><rect x="1" y="1" width="5" height="1" fill="#000"/>
<rect x="0" y="2" width="2" height="1" fill="#000"/><rect x="2" y="2" width="3" height="1" fill="#ff7000"/><rect x="5" y="2" width="2" height="1" fill="#000"/><rect x="7" y="2" width="1" height="3" fill="#202020"/>
<rect x="0" y="3" width="1" height="1" fill="#000"/><rect x="1" y="3" width="5" height="1" fill="#ff7000"/><rect x="2" y="3" width="1" height="1" fill="#fff"/><rect x="4" y="3" width="1" height="1" fill="#a8d0f0"/><rect x="5" y="3" width="1" height="1" fill="#e06000"/><rect x="6" y="3" width="1" height="1" fill="#000"/>
<rect x="1" y="4" width="4" height="1" fill="#ff7000"/><rect x="5" y="4" width="1" height="1" fill="#e06000"/><rect x="6" y="4" width="1" height="2" fill="#202020"/>
<rect x="1" y="5" width="1" height="1" fill="#c04000"/><rect x="2" y="5" width="1" height="1" fill="#ff7000"/><rect x="3" y="5" width="1" height="1" fill="#000"/><rect x="4" y="5" width="1" height="1" fill="#e06000"/><rect x="5" y="5" width="1" height="1" fill="#c04000"/><rect x="7" y="5" width="1" height="1" fill="#202020"/>
<rect x="2" y="6" width="2" height="1" fill="#d05000"/><rect x="4" y="6" width="1" height="1" fill="#c04000"/><rect x="5" y="6" width="2" height="1" fill="#202020"/>
<rect x="3" y="7" width="3" height="1" fill="#1a1a1a"/>
</svg></div>
<div class="sk" style="left:41px;top:559px;width:21px;height:21px;background:#fff;"></div>
<span class="t" style="left:44.5px;transform-origin:0 0;transform:scaleX(0.84);top:563.32px;font:normal 12.5px/12.5px 'Liberation Sans',sans-serif;color:#000;">14</span>
<div class="sk" style="left:63px;top:559px;width:17px;height:21px;background:#f0f0f0;"></div>
<span class="t" style="left:-128.5px;width:400px;text-align:center;transform-origin:50% 0;transform:scaleX(0.84);top:562.32px;font:normal 12.5px/12.5px 'Liberation Sans',sans-serif;color:#c00000;">15</span>
<div class="sk" style="left:641px;top:559px;width:41px;height:21px;background:#fff;"></div>
<span class="t" style="left:461.9px;width:400px;text-align:center;transform-origin:50% 0;transform:scaleX(0.847);top:562.32px;font:normal 12.5px/12.5px 'Liberation Sans',sans-serif;color:#800000;">CVP</span>
<div class="sk" style="left:577px;top:559px;width:65px;height:21px;background:#000;"><svg style="position:absolute;left:1px;top:1px" width="61" height="17" viewBox="0 0 61 17" shape-rendering="crispEdges"><rect x="8" y="2" width="2" height="3" fill="#004000"/><rect x="2" y="5" width="14" height="2" fill="#004000"/><rect x="4" y="7" width="10" height="2" fill="#004000"/><rect x="6" y="9" width="6" height="2" fill="#004000"/><rect x="4" y="11" width="10" height="2" fill="#004000"/><rect x="4" y="13" width="2" height="2" fill="#004000"/><rect x="12" y="13" width="2" height="2" fill="#004000"/><rect x="6" y="0" width="2" height="3" fill="#780028"/><rect x="0" y="3" width="14" height="2" fill="#780028"/><rect x="2" y="5" width="10" height="2" fill="#780028"/><rect x="4" y="7" width="6" height="2" fill="#780028"/><rect x="2" y="9" width="10" height="2" fill="#780028"/><rect x="2" y="11" width="2" height="2" fill="#780028"/><rect x="10" y="11" width="2" height="2" fill="#780028"/><rect x="20" y="2" width="2" height="3" fill="#004000"/><rect x="14" y="5" width="14" height="2" fill="#004000"/><rect x="16" y="7" width="10" height="2" fill="#004000"/><rect x="18" y="9" width="6" height="2" fill="#004000"/><rect x="16" y="11" width="10" height="2" fill="#004000"/><rect x="16" y="13" width="2" height="2" fill="#004000"/><rect x="24" y="13" width="2" height="2" fill="#004000"/><rect x="18" y="0" width="2" height="3" fill="#ff0000"/><rect x="12" y="3" width="14" height="2" fill="#ff0000"/><rect x="14" y="5" width="10" height="2" fill="#ff0000"/><rect x="16" y="7" width="6" height="2" fill="#ff0000"/><rect x="14" y="9" width="10" height="2" fill="#ff0000"/><rect x="14" y="11" width="2" height="2" fill="#ff0000"/><rect x="22" y="11" width="2" height="2" fill="#ff0000"/><rect x="32" y="2" width="2" height="3" fill="#004000"/><rect x="26" y="5" width="14" height="2" fill="#004000"/><rect x="28" y="7" width="10" height="2" fill="#004000"/><rect x="30" y="9" width="6" height="2" fill="#004000"/><rect x="28" y="11" width="10" height="2" fill="#004000"/><rect x="28" y="13" width="2" height="2" fill="#004000"/><rect x="36" y="13" width="2" height="2" fill="#004000"/><rect x="30" y="0" width="2" height="3" fill="#ff7f10"/><rect x="24" y="3" width="14" height="2" fill="#ff7f10"/><rect x="26" y="5" width="10" height="2" fill="#ff7f10"/><rect x="28" y="7" width="6" height="2" fill="#ff7f10"/><rect x="26" y="9" width="10" height="2" fill="#ff7f10"/><rect x="26" y="11" width="2" height="2" fill="#ff7f10"/><rect x="34" y="11" width="2" height="2" fill="#ff7f10"/><rect x="44" y="5" width="2" height="2" fill="#004000"/><rect x="40" y="7" width="10" height="2" fill="#004000"/><rect x="42" y="9" width="6" height="2" fill="#004000"/><rect x="42" y="11" width="2" height="2" fill="#004000"/><rect x="46" y="11" width="2" height="2" fill="#004000"/><rect x="42" y="3" width="2" height="2" fill="#ffff00"/><rect x="38" y="5" width="10" height="2" fill="#ffff00"/><rect x="40" y="7" width="6" height="2" fill="#ffff00"/><rect x="40" y="9" width="2" height="2" fill="#ffff00"/><rect x="44" y="9" width="2" height="2" fill="#ffff00"/></svg></div>
<div class="sk" style="left:521px;top:559px;width:57px;height:21px;background:#fff;"></div>
<span class="t" style="left:524px;transform-origin:0 0;transform:scaleX(0.97);top:563.69px;font:bold 11px/11px 'DejaVu Sans Condensed','DejaVu Sans',sans-serif;color:#000080;">1.6M</span>
<div class="sk" style="left:353px;top:559px;width:25px;height:21px;background:#fff;"></div>
<span class="t" style="left:356.3px;transform-origin:0 0;transform:scaleX(0.94);top:563.69px;font:bold 11px/11px 'DejaVu Sans Condensed','DejaVu Sans',sans-serif;color:#109810;">13</span>
<div class="sk" style="left:377px;top:559px;width:25px;height:21px;background:#fff;"></div>
<span class="t" style="left:380.3px;transform-origin:0 0;transform:scaleX(0.94);top:563.69px;font:bold 11px/11px 'DejaVu Sans Condensed','DejaVu Sans',sans-serif;color:#ff0818;">14</span>
<div class="sk" style="left:401px;top:559px;width:25px;height:21px;background:#fff;"></div>
<span class="t" style="left:404.3px;transform-origin:0 0;transform:scaleX(0.94);top:563.69px;font:bold 11px/11px 'DejaVu Sans Condensed','DejaVu Sans',sans-serif;color:#007080;">4</span>
<div class="sk" style="left:425px;top:559px;width:25px;height:21px;background:#fff;"></div>
<span class="t" style="left:428.3px;transform-origin:0 0;transform:scaleX(0.94);top:563.69px;font:bold 11px/11px 'DejaVu Sans Condensed','DejaVu Sans',sans-serif;color:#007080;">3</span>
<div class="sk" style="left:449px;top:559px;width:25px;height:21px;background:#fff;"></div>
<span class="t" style="left:452.3px;transform-origin:0 0;transform:scaleX(0.94);top:563.69px;font:bold 11px/11px 'DejaVu Sans Condensed','DejaVu Sans',sans-serif;color:#ff0818;">14</span>
<div class="sk" style="left:473px;top:559px;width:25px;height:21px;background:#fff;"></div>
<span class="t" style="left:476.3px;transform-origin:0 0;transform:scaleX(0.94);top:563.69px;font:bold 11px/11px 'DejaVu Sans Condensed','DejaVu Sans',sans-serif;color:#007080;">4</span>
<div class="sk" style="left:497px;top:559px;width:25px;height:21px;background:#fff;"></div>
<span class="t" style="left:500.3px;transform-origin:0 0;transform:scaleX(0.94);top:563.69px;font:bold 11px/11px 'DejaVu Sans Condensed','DejaVu Sans',sans-serif;color:#007080;">4</span>
<div class="sk" style="left:308px;top:559px;width:45px;height:21px;background:#fff;"></div>
<div class="" style="left:334px;top:561px;width:17px;height:17px;background:#f0f0f0;"></div>
<div class="rs" style="left:334px;top:561px;width:17px;height:17px;"><svg width="7" height="4" style="position:absolute;left:4px;top:6px" viewBox="0 0 7 4" shape-rendering="crispEdges"><path d="M0 0h7v1h-1v1h-1v1h-1v1h-1v-1h-1v-1h-1v-1h-1z" fill="#000"/></svg></div>
<span class="t" style="left:312.8px;transform-origin:0 0;transform:scaleX(0.84);top:564.32px;font:normal 12.5px/12.5px 'Liberation Sans',sans-serif;color:#000080;width:25px;overflow:hidden;">ESP</span>
<div class="sk" style="left:265px;top:559px;width:45px;height:21px;background:#fff;"></div>
<div class="" style="left:291px;top:561px;width:17px;height:17px;background:#f0f0f0;"></div>
<div class="rs" style="left:291px;top:561px;width:17px;height:17px;"><svg width="7" height="4" style="position:absolute;left:4px;top:6px" viewBox="0 0 7 4" shape-rendering="crispEdges"><path d="M0 0h7v1h-1v1h-1v1h-1v1h-1v-1h-1v-1h-1v-1h-1z" fill="#000"/></svg></div>
<span class="t" style="left:270px;transform-origin:0 0;transform:scaleX(0.84);top:564.32px;font:normal 12.5px/12.5px 'Liberation Sans',sans-serif;color:#000;">M</span>
<div class="sk" style="left:81px;top:559px;width:185px;height:21px;background:#fff;"></div>
<span class="t" style="left:84px;transform-origin:0 0;transform:scaleX(0.857);top:563.32px;font:normal 12.5px/12.5px 'Liberation Sans',sans-serif;color:#000080;">FABIAN RUIZ</span>
<div class="sk" style="left:697px;top:559px;width:57px;height:21px;background:#fff;"></div>
<div class="" style="left:735px;top:561px;width:17px;height:17px;background:#f0f0f0;"></div>
<div class="rs" style="left:735px;top:561px;width:17px;height:17px;"><svg width="7" height="4" style="position:absolute;left:4px;top:6px" viewBox="0 0 7 4" shape-rendering="crispEdges"><path d="M0 0h7v1h-1v1h-1v1h-1v1h-1v-1h-1v-1h-1v-1h-1z" fill="#000"/></svg></div>
<span class="t" style="left:701.7px;transform-origin:0 0;transform:scaleX(0.836);top:564.32px;font:normal 12.5px/12.5px 'Liberation Sans',sans-serif;color:#000080;">1.6M</span>
<div class="rs" style="left:761px;top:559px;width:17px;height:17px;"></div>
<span class="t" style="left:569.5px;width:400px;text-align:center;transform-origin:50% 0;transform:scaleX(0.84);top:561.32px;font:normal 12.5px/12.5px 'Liberation Sans',sans-serif;color:#000;">V</span>
<div class="sk" style="left:17px;top:583px;width:20px;height:21px;background:#fff;"><svg style="position:absolute;left:1px;top:1px" width="16" height="16" viewBox="0 0 8 8" shape-rendering="crispEdges">
<rect x="2" y="0" width="3" height="1" fill="#000"/><rect x="1" y="1" width="5" height="1" fill="#000"/>
<rect x="0" y="2" width="2" height="1" fill="#000"/><rect x="2" y="2" width="3" height="1" fill="#ff7000"/><rect x="5" y="2" width="2" height="1" fill="#000"/><rect x="7" y="2" width="1" height="3" fill="#202020"/>
<rect x="0" y="3" width="1" height="1" fill="#000"/><rect x="1" y="3" width="5" height="1" fill="#ff7000"/><rect x="2" y="3" width="1" height="1" fill="#fff"/><rect x="4" y="3" width="1" height="1" fill="#a8d0f0"/><rect x="5" y="3" width="1" height="1" fill="#e06000"/><rect x="6" y="3" width="1" height="1" fill="#000"/>
<rect x="1" y="4" width="4" height="1" fill="#ff7000"/><rect x="5" y="4" width="1" height="1" fill="#e06000"/><rect x="6" y="4" width="1" height="2" fill="#202020"/>
<rect x="1" y="5" width="1" height="1" fill="#c04000"/><rect x="2" y="5" width="1" height="1" fill="#ff7000"/><rect x="3" y="5" width="1" height="1" fill="#000"/><rect x="4" y="5" width="1" height="1" fill="#e06000"/><rect x="5" y="5" width="1" height="1" fill="#c04000"/><rect x="7" y="5" width="1" height="1" fill="#202020"/>
<rect x="2" y="6" width="2" height="1" fill="#d05000"/><rect x="4" y="6" width="1" height="1" fill="#c04000"/><rect x="5" y="6" width="2" height="1" fill="#202020"/>
<rect x="3" y="7" width="3" height="1" fill="#1a1a1a"/>
</svg></div>
<div class="sk" style="left:41px;top:583px;width:21px;height:21px;background:#c0c0c0;"></div>
<span class="t" style="left:44.5px;transform-origin:0 0;transform:scaleX(0.84);top:587.32px;font:normal 12.5px/12.5px 'Liberation Sans',sans-serif;color:#000;">15</span>
<div class="sk" style="left:63px;top:583px;width:17px;height:21px;background:#f0f0f0;"></div>
<span class="t" style="left:-128.5px;width:400px;text-align:center;transform-origin:50% 0;transform:scaleX(0.84);top:586.32px;font:normal 12.5px/12.5px 'Liberation Sans',sans-serif;color:#00a000;">8</span>
<div class="sk" style="left:641px;top:583px;width:41px;height:21px;background:#c0c0c0;"></div>
<span class="t" style="left:461.9px;width:400px;text-align:center;transform-origin:50% 0;transform:scaleX(0.847);top:586.32px;font:normal 12.5px/12.5px 'Liberation Sans',sans-serif;color:#800000;">TPC</span>
<div class="sk" style="left:577px;top:583px;width:65px;height:21px;background:#000;"><svg style="position:absolute;left:1px;top:1px" width="61" height="17" viewBox="0 0 61 17" shape-rendering="crispEdges"><rect x="8" y="2" width="2" height="3" fill="#004000"/><rect x="2" y="5" width="14" height="2" fill="#004000"/><rect x="4" y="7" width="10" height="2" fill="#004000"/><rect x="6" y="9" width="6" height="2" fill="#004000"/><rect x="4" y="11" width="10" height="2" fill="#004000"/><rect x="4" y="13" width="2" height="2" fill="#004000"/><rect x="12" y="13" width="2" height="2" fill="#004000"/><rect x="6" y="0" width="2" height="3" fill="#780028"/><rect x="0" y="3" width="14" height="2" fill="#780028"/><rect x="2" y="5" width="10" height="2" fill="#780028"/><rect x="4" y="7" width="6" height="2" fill="#780028"/><rect x="2" y="9" width="10" height="2" fill="#780028"/><rect x="2" y="11" width="2" height="2" fill="#780028"/><rect x="10" y="11" width="2" height="2" fill="#780028"/><rect x="20" y="2" width="2" height="3" fill="#004000"/><rect x="14" y="5" width="14" height="2" fill="#004000"/><rect x="16" y="7" width="10" height="2" fill="#004000"/><rect x="18" y="9" width="6" height="2" fill="#004000"/><rect x="16" y="11" width="10" height="2" fill="#004000"/><rect x="16" y="13" width="2" height="2" fill="#004000"/><rect x="24" y="13" width="2" height="2" fill="#004000"/><rect x="18" y="0" width="2" height="3" fill="#ff0000"/><rect x="12" y="3" width="14" height="2" fill="#ff0000"/><rect x="14" y="5" width="10" height="2" fill="#ff0000"/><rect x="16" y="7" width="6" height="2" fill="#ff0000"/><rect x="14" y="9" width="10" height="2" fill="#ff0000"/><rect x="14" y="11" width="2" height="2" fill="#ff0000"/><rect x="22" y="11" width="2" height="2" fill="#ff0000"/><rect x="32" y="2" width="2" height="3" fill="#004000"/><rect x="26" y="5" width="14" height="2" fill="#004000"/><rect x="28" y="7" width="10" height="2" fill="#004000"/><rect x="30" y="9" width="6" height="2" fill="#004000"/><rect x="28" y="11" width="10" height="2" fill="#004000"/><rect x="28" y="13" width="2" height="2" fill="#004000"/><rect x="36" y="13" width="2" height="2" fill="#004000"/><rect x="30" y="0" width="2" height="3" fill="#ff7f10"/><rect x="24" y="3" width="14" height="2" fill="#ff7f10"/><rect x="26" y="5" width="10" height="2" fill="#ff7f10"/><rect x="28" y="7" width="6" height="2" fill="#ff7f10"/><rect x="26" y="9" width="10" height="2" fill="#ff7f10"/><rect x="26" y="11" width="2" height="2" fill="#ff7f10"/><rect x="34" y="11" width="2" height="2" fill="#ff7f10"/><rect x="44" y="5" width="2" height="2" fill="#004000"/><rect x="40" y="7" width="10" height="2" fill="#004000"/><rect x="42" y="9" width="6" height="2" fill="#004000"/><rect x="42" y="11" width="2" height="2" fill="#004000"/><rect x="46" y="11" width="2" height="2" fill="#004000"/><rect x="42" y="3" width="2" height="2" fill="#ffff00"/><rect x="38" y="5" width="10" height="2" fill="#ffff00"/><rect x="40" y="7" width="6" height="2" fill="#ffff00"/><rect x="40" y="9" width="2" height="2" fill="#ffff00"/><rect x="44" y="9" width="2" height="2" fill="#ffff00"/></svg></div>
<div class="sk" style="left:521px;top:583px;width:57px;height:21px;background:#c0c0c0;"></div>
<span class="t" style="left:524px;transform-origin:0 0;transform:scaleX(0.97);top:587.69px;font:bold 11px/11px 'DejaVu Sans Condensed','DejaVu Sans',sans-serif;color:#000080;">1.5M</span>
<div class="sk" style="left:353px;top:583px;width:25px;height:21px;background:#c0c0c0;"></div>
<span class="t" style="left:356.3px;transform-origin:0 0;transform:scaleX(0.94);top:587.69px;font:bold 11px/11px 'DejaVu Sans Condensed','DejaVu Sans',sans-serif;color:#109810;">13</span>
<div class="sk" style="left:377px;top:583px;width:25px;height:21px;background:#c0c0c0;"></div>
<span class="t" style="left:380.3px;transform-origin:0 0;transform:scaleX(0.94);top:587.69px;font:bold 11px/11px 'DejaVu Sans Condensed','DejaVu Sans',sans-serif;color:#007080;">3</span>
<div class="sk" style="left:401px;top:583px;width:25px;height:21px;background:#c0c0c0;"></div>
<span class="t" style="left:404.3px;transform-origin:0 0;transform:scaleX(0.94);top:587.69px;font:bold 11px/11px 'DejaVu Sans Condensed','DejaVu Sans',sans-serif;color:#109810;">13</span>
<div class="sk" style="left:425px;top:583px;width:25px;height:21px;background:#c0c0c0;"></div>
<span class="t" style="left:428.3px;transform-origin:0 0;transform:scaleX(0.94);top:587.69px;font:bold 11px/11px 'DejaVu Sans Condensed','DejaVu Sans',sans-serif;color:#ff0818;">15</span>
<div class="sk" style="left:449px;top:583px;width:25px;height:21px;background:#c0c0c0;"></div>
<span class="t" style="left:452.3px;transform-origin:0 0;transform:scaleX(0.94);top:587.69px;font:bold 11px/11px 'DejaVu Sans Condensed','DejaVu Sans',sans-serif;color:#109810;">13</span>
<div class="sk" style="left:473px;top:583px;width:25px;height:21px;background:#c0c0c0;"></div>
<span class="t" style="left:476.3px;transform-origin:0 0;transform:scaleX(0.94);top:587.69px;font:bold 11px/11px 'DejaVu Sans Condensed','DejaVu Sans',sans-serif;color:#007080;">5</span>
<div class="sk" style="left:497px;top:583px;width:25px;height:21px;background:#c0c0c0;"></div>
<span class="t" style="left:500.3px;transform-origin:0 0;transform:scaleX(0.94);top:587.69px;font:bold 11px/11px 'DejaVu Sans Condensed','DejaVu Sans',sans-serif;color:#000;">1</span>
<div class="sk" style="left:308px;top:583px;width:45px;height:21px;background:#c0c0c0;"></div>
<div class="" style="left:334px;top:585px;width:17px;height:17px;background:#f0f0f0;"></div>
<div class="rs" style="left:334px;top:585px;width:17px;height:17px;"><svg width="7" height="4" style="position:absolute;left:4px;top:6px" viewBox="0 0 7 4" shape-rendering="crispEdges"><path d="M0 0h7v1h-1v1h-1v1h-1v1h-1v-1h-1v-1h-1v-1h-1z" fill="#000"/></svg></div>
<span class="t" style="left:312.8px;transform-origin:0 0;transform:scaleX(0.84);top:588.32px;font:normal 12.5px/12.5px 'Liberation Sans',sans-serif;color:#000080;width:25px;overflow:hidden;">MEX</span>
<div class="sk" style="left:265px;top:583px;width:45px;height:21px;background:#c0c0c0;"></div>
<div class="" style="left:291px;top:585px;width:17px;height:17px;background:#f0f0f0;"></div>
<div class="rs" style="left:291px;top:585px;width:17px;height:17px;"><svg width="7" height="4" style="position:absolute;left:4px;top:6px" viewBox="0 0 7 4" shape-rendering="crispEdges"><path d="M0 0h7v1h-1v1h-1v1h-1v1h-1v-1h-1v-1h-1v-1h-1z" fill="#000"/></svg></div>
<span class="t" style="left:270px;transform-origin:0 0;transform:scaleX(0.84);top:588.32px;font:normal 12.5px/12.5px 'Liberation Sans',sans-serif;color:#000;">M</span>
<div class="sk" style="left:81px;top:583px;width:185px;height:21px;background:#c0c0c0;"></div>
<span class="t" style="left:84px;transform-origin:0 0;transform:scaleX(0.857);top:587.32px;font:normal 12.5px/12.5px 'Liberation Sans',sans-serif;color:#000080;">ANDRES GUARDADO</span>
<div class="sk" style="left:697px;top:583px;width:57px;height:21px;background:#c0c0c0;"></div>
<div class="" style="left:735px;top:585px;width:17px;height:17px;background:#f0f0f0;"></div>
<div class="rs" style="left:735px;top:585px;width:17px;height:17px;"><svg width="7" height="4" style="position:absolute;left:4px;top:6px" viewBox="0 0 7 4" shape-rendering="crispEdges"><path d="M0 0h7v1h-1v1h-1v1h-1v1h-1v-1h-1v-1h-1v-1h-1z" fill="#000"/></svg></div>
<span class="t" style="left:701.7px;transform-origin:0 0;transform:scaleX(0.836);top:588.32px;font:normal 12.5px/12.5px 'Liberation Sans',sans-serif;color:#000080;">1.5M</span>
<div class="rs" style="left:761px;top:583px;width:17px;height:17px;"></div>
<span class="t" style="left:569.5px;width:400px;text-align:center;transform-origin:50% 0;transform:scaleX(0.84);top:585.32px;font:normal 12.5px/12.5px 'Liberation Sans',sans-serif;color:#000;">V</span>
<div class="sk" style="left:17px;top:607px;width:20px;height:21px;background:#fff;"><svg style="position:absolute;left:1px;top:1px" width="16" height="16" viewBox="0 0 8 8" shape-rendering="crispEdges">
<rect x="2" y="0" width="3" height="1" fill="#000"/><rect x="1" y="1" width="5" height="1" fill="#000"/>
<rect x="0" y="2" width="2" height="1" fill="#000"/><rect x="2" y="2" width="3" height="1" fill="#ff7000"/><rect x="5" y="2" width="2" height="1" fill="#000"/><rect x="7" y="2" width="1" height="3" fill="#202020"/>
<rect x="0" y="3" width="1" height="1" fill="#000"/><rect x="1" y="3" width="5" height="1" fill="#ff7000"/><rect x="2" y="3" width="1" height="1" fill="#fff"/><rect x="4" y="3" width="1" height="1" fill="#a8d0f0"/><rect x="5" y="3" width="1" height="1" fill="#e06000"/><rect x="6" y="3" width="1" height="1" fill="#000"/>
<rect x="1" y="4" width="4" height="1" fill="#ff7000"/><rect x="5" y="4" width="1" height="1" fill="#e06000"/><rect x="6" y="4" width="1" height="2" fill="#202020"/>
<rect x="1" y="5" width="1" height="1" fill="#c04000"/><rect x="2" y="5" width="1" height="1" fill="#ff7000"/><rect x="3" y="5" width="1" height="1" fill="#000"/><rect x="4" y="5" width="1" height="1" fill="#e06000"/><rect x="5" y="5" width="1" height="1" fill="#c04000"/><rect x="7" y="5" width="1" height="1" fill="#202020"/>
<rect x="2" y="6" width="2" height="1" fill="#d05000"/><rect x="4" y="6" width="1" height="1" fill="#c04000"/><rect x="5" y="6" width="2" height="1" fill="#202020"/>
<rect x="3" y="7" width="3" height="1" fill="#1a1a1a"/>
</svg></div>
<div class="sk" style="left:41px;top:607px;width:21px;height:21px;background:#fff;"></div>
<span class="t" style="left:44.5px;transform-origin:0 0;transform:scaleX(0.84);top:611.32px;font:normal 12.5px/12.5px 'Liberation Sans',sans-serif;color:#000;">16</span>
<div class="sk" style="left:63px;top:607px;width:17px;height:21px;background:#f0f0f0;"></div>
<span class="t" style="left:-128.5px;width:400px;text-align:center;transform-origin:50% 0;transform:scaleX(0.84);top:610.32px;font:normal 12.5px/12.5px 'Liberation Sans',sans-serif;color:#c00000;">14</span>
<div class="sk" style="left:641px;top:607px;width:41px;height:21px;background:#fff;"></div>
<span class="t" style="left:461.9px;width:400px;text-align:center;transform-origin:50% 0;transform:scaleX(0.847);top:610.32px;font:normal 12.5px/12.5px 'Liberation Sans',sans-serif;color:#800000;">PFT</span>
<div class="sk" style="left:577px;top:607px;width:65px;height:21px;background:#000;"><svg style="position:absolute;left:1px;top:1px" width="61" height="17" viewBox="0 0 61 17" shape-rendering="crispEdges"><rect x="8" y="2" width="2" height="3" fill="#004000"/><rect x="2" y="5" width="14" height="2" fill="#004000"/><rect x="4" y="7" width="10" height="2" fill="#004000"/><rect x="6" y="9" width="6" height="2" fill="#004000"/><rect x="4" y="11" width="10" height="2" fill="#004000"/><rect x="4" y="13" width="2" height="2" fill="#004000"/><rect x="12" y="13" width="2" height="2" fill="#004000"/><rect x="6" y="0" width="2" height="3" fill="#780028"/><rect x="0" y="3" width="14" height="2" fill="#780028"/><rect x="2" y="5" width="10" height="2" fill="#780028"/><rect x="4" y="7" width="6" height="2" fill="#780028"/><rect x="2" y="9" width="10" height="2" fill="#780028"/><rect x="2" y="11" width="2" height="2" fill="#780028"/><rect x="10" y="11" width="2" height="2" fill="#780028"/><rect x="20" y="2" width="2" height="3" fill="#004000"/><rect x="14" y="5" width="14" height="2" fill="#004000"/><rect x="16" y="7" width="10" height="2" fill="#004000"/><rect x="18" y="9" width="6" height="2" fill="#004000"/><rect x="16" y="11" width="10" height="2" fill="#004000"/><rect x="16" y="13" width="2" height="2" fill="#004000"/><rect x="24" y="13" width="2" height="2" fill="#004000"/><rect x="18" y="0" width="2" height="3" fill="#ff0000"/><rect x="12" y="3" width="14" height="2" fill="#ff0000"/><rect x="14" y="5" width="10" height="2" fill="#ff0000"/><rect x="16" y="7" width="6" height="2" fill="#ff0000"/><rect x="14" y="9" width="10" height="2" fill="#ff0000"/><rect x="14" y="11" width="2" height="2" fill="#ff0000"/><rect x="22" y="11" width="2" height="2" fill="#ff0000"/><rect x="32" y="2" width="2" height="3" fill="#004000"/><rect x="26" y="5" width="14" height="2" fill="#004000"/><rect x="28" y="7" width="10" height="2" fill="#004000"/><rect x="30" y="9" width="6" height="2" fill="#004000"/><rect x="28" y="11" width="10" height="2" fill="#004000"/><rect x="28" y="13" width="2" height="2" fill="#004000"/><rect x="36" y="13" width="2" height="2" fill="#004000"/><rect x="30" y="0" width="2" height="3" fill="#ff7f10"/><rect x="24" y="3" width="14" height="2" fill="#ff7f10"/><rect x="26" y="5" width="10" height="2" fill="#ff7f10"/><rect x="28" y="7" width="6" height="2" fill="#ff7f10"/><rect x="26" y="9" width="10" height="2" fill="#ff7f10"/><rect x="26" y="11" width="2" height="2" fill="#ff7f10"/><rect x="34" y="11" width="2" height="2" fill="#ff7f10"/><rect x="44" y="5" width="2" height="2" fill="#004000"/><rect x="40" y="7" width="10" height="2" fill="#004000"/><rect x="42" y="9" width="6" height="2" fill="#004000"/><rect x="42" y="11" width="2" height="2" fill="#004000"/><rect x="46" y="11" width="2" height="2" fill="#004000"/><rect x="42" y="3" width="2" height="2" fill="#ffff00"/><rect x="38" y="5" width="10" height="2" fill="#ffff00"/><rect x="40" y="7" width="6" height="2" fill="#ffff00"/><rect x="40" y="9" width="2" height="2" fill="#ffff00"/><rect x="44" y="9" width="2" height="2" fill="#ffff00"/></svg></div>
<div class="sk" style="left:521px;top:607px;width:57px;height:21px;background:#fff;"></div>
<span class="t" style="left:524px;transform-origin:0 0;transform:scaleX(0.97);top:611.69px;font:bold 11px/11px 'DejaVu Sans Condensed','DejaVu Sans',sans-serif;color:#000080;">1.5M</span>
<div class="sk" style="left:353px;top:607px;width:25px;height:21px;background:#fff;"></div>
<span class="t" style="left:356.3px;transform-origin:0 0;transform:scaleX(0.94);top:611.69px;font:bold 11px/11px 'DejaVu Sans Condensed','DejaVu Sans',sans-serif;color:#109810;">13</span>
<div class="sk" style="left:377px;top:607px;width:25px;height:21px;background:#fff;"></div>
<span class="t" style="left:380.3px;transform-origin:0 0;transform:scaleX(0.94);top:611.69px;font:bold 11px/11px 'DejaVu Sans Condensed','DejaVu Sans',sans-serif;color:#007080;">4</span>
<div class="sk" style="left:401px;top:607px;width:25px;height:21px;background:#fff;"></div>
<span class="t" style="left:404.3px;transform-origin:0 0;transform:scaleX(0.94);top:611.69px;font:bold 11px/11px 'DejaVu Sans Condensed','DejaVu Sans',sans-serif;color:#109810;">12</span>
<div class="sk" style="left:425px;top:607px;width:25px;height:21px;background:#fff;"></div>
<span class="t" style="left:428.3px;transform-origin:0 0;transform:scaleX(0.94);top:611.69px;font:bold 11px/11px 'DejaVu Sans Condensed','DejaVu Sans',sans-serif;color:#109810;">13</span>
<div class="sk" style="left:449px;top:607px;width:25px;height:21px;background:#fff;"></div>
<span class="t" style="left:452.3px;transform-origin:0 0;transform:scaleX(0.94);top:611.69px;font:bold 11px/11px 'DejaVu Sans Condensed','DejaVu Sans',sans-serif;color:#109810;">12</span>
<div class="sk" style="left:473px;top:607px;width:25px;height:21px;background:#fff;"></div>
<span class="t" style="left:476.3px;transform-origin:0 0;transform:scaleX(0.94);top:611.69px;font:bold 11px/11px 'DejaVu Sans Condensed','DejaVu Sans',sans-serif;color:#007080;">4</span>
<div class="sk" style="left:497px;top:607px;width:25px;height:21px;background:#fff;"></div>
<span class="t" style="left:500.3px;transform-origin:0 0;transform:scaleX(0.94);top:611.69px;font:bold 11px/11px 'DejaVu Sans Condensed','DejaVu Sans',sans-serif;color:#007080;">5</span>
<div class="sk" style="left:308px;top:607px;width:45px;height:21px;background:#fff;"></div>
<div class="" style="left:334px;top:609px;width:17px;height:17px;background:#f0f0f0;"></div>
<div class="rs" style="left:334px;top:609px;width:17px;height:17px;"><svg width="7" height="4" style="position:absolute;left:4px;top:6px" viewBox="0 0 7 4" shape-rendering="crispEdges"><path d="M0 0h7v1h-1v1h-1v1h-1v1h-1v-1h-1v-1h-1v-1h-1z" fill="#000"/></svg></div>
<span class="t" style="left:312.8px;transform-origin:0 0;transform:scaleX(0.84);top:612.32px;font:normal 12.5px/12.5px 'Liberation Sans',sans-serif;color:#000080;width:25px;overflow:hidden;">ESP</span>
<div class="sk" style="left:265px;top:607px;width:45px;height:21px;background:#fff;"></div>
<div class="" style="left:291px;top:609px;width:17px;height:17px;background:#f0f0f0;"></div>
<div class="rs" style="left:291px;top:609px;width:17px;height:17px;"><svg width="7" height="4" style="position:absolute;left:4px;top:6px" viewBox="0 0 7 4" shape-rendering="crispEdges"><path d="M0 0h7v1h-1v1h-1v1h-1v1h-1v-1h-1v-1h-1v-1h-1z" fill="#000"/></svg></div>
<span class="t" style="left:270px;transform-origin:0 0;transform:scaleX(0.84);top:612.32px;font:normal 12.5px/12.5px 'Liberation Sans',sans-serif;color:#000;">M</span>
<div class="sk" style="left:81px;top:607px;width:185px;height:21px;background:#fff;"></div>
<span class="t" style="left:84px;transform-origin:0 0;transform:scaleX(0.857);top:611.32px;font:normal 12.5px/12.5px 'Liberation Sans',sans-serif;color:#000080;">VICTOR CAMARASA</span>
<div class="sk" style="left:697px;top:607px;width:57px;height:21px;background:#fff;"></div>
<div class="" style="left:735px;top:609px;width:17px;height:17px;background:#f0f0f0;"></div>
<div class="rs" style="left:735px;top:609px;width:17px;height:17px;"><svg width="7" height="4" style="position:absolute;left:4px;top:6px" viewBox="0 0 7 4" shape-rendering="crispEdges"><path d="M0 0h7v1h-1v1h-1v1h-1v1h-1v-1h-1v-1h-1v-1h-1z" fill="#000"/></svg></div>
<span class="t" style="left:701.7px;transform-origin:0 0;transform:scaleX(0.836);top:612.32px;font:normal 12.5px/12.5px 'Liberation Sans',sans-serif;color:#000080;">1.5M</span>
<div class="rs" style="left:761px;top:607px;width:17px;height:17px;"></div>
<span class="t" style="left:569.5px;width:400px;text-align:center;transform-origin:50% 0;transform:scaleX(0.84);top:609.32px;font:normal 12.5px/12.5px 'Liberation Sans',sans-serif;color:#000;">V</span>
<div class="sk" style="left:697px;top:247px;width:13px;height:13px;background:#fff;"></div>
<span class="t" style="left:715.5px;transform-origin:0 0;transform:scaleX(0.85);top:248.32px;font:normal 12.5px/12.5px 'Liberation Sans',sans-serif;color:#000;">Def. Midfield</span>
</div></body></html>
